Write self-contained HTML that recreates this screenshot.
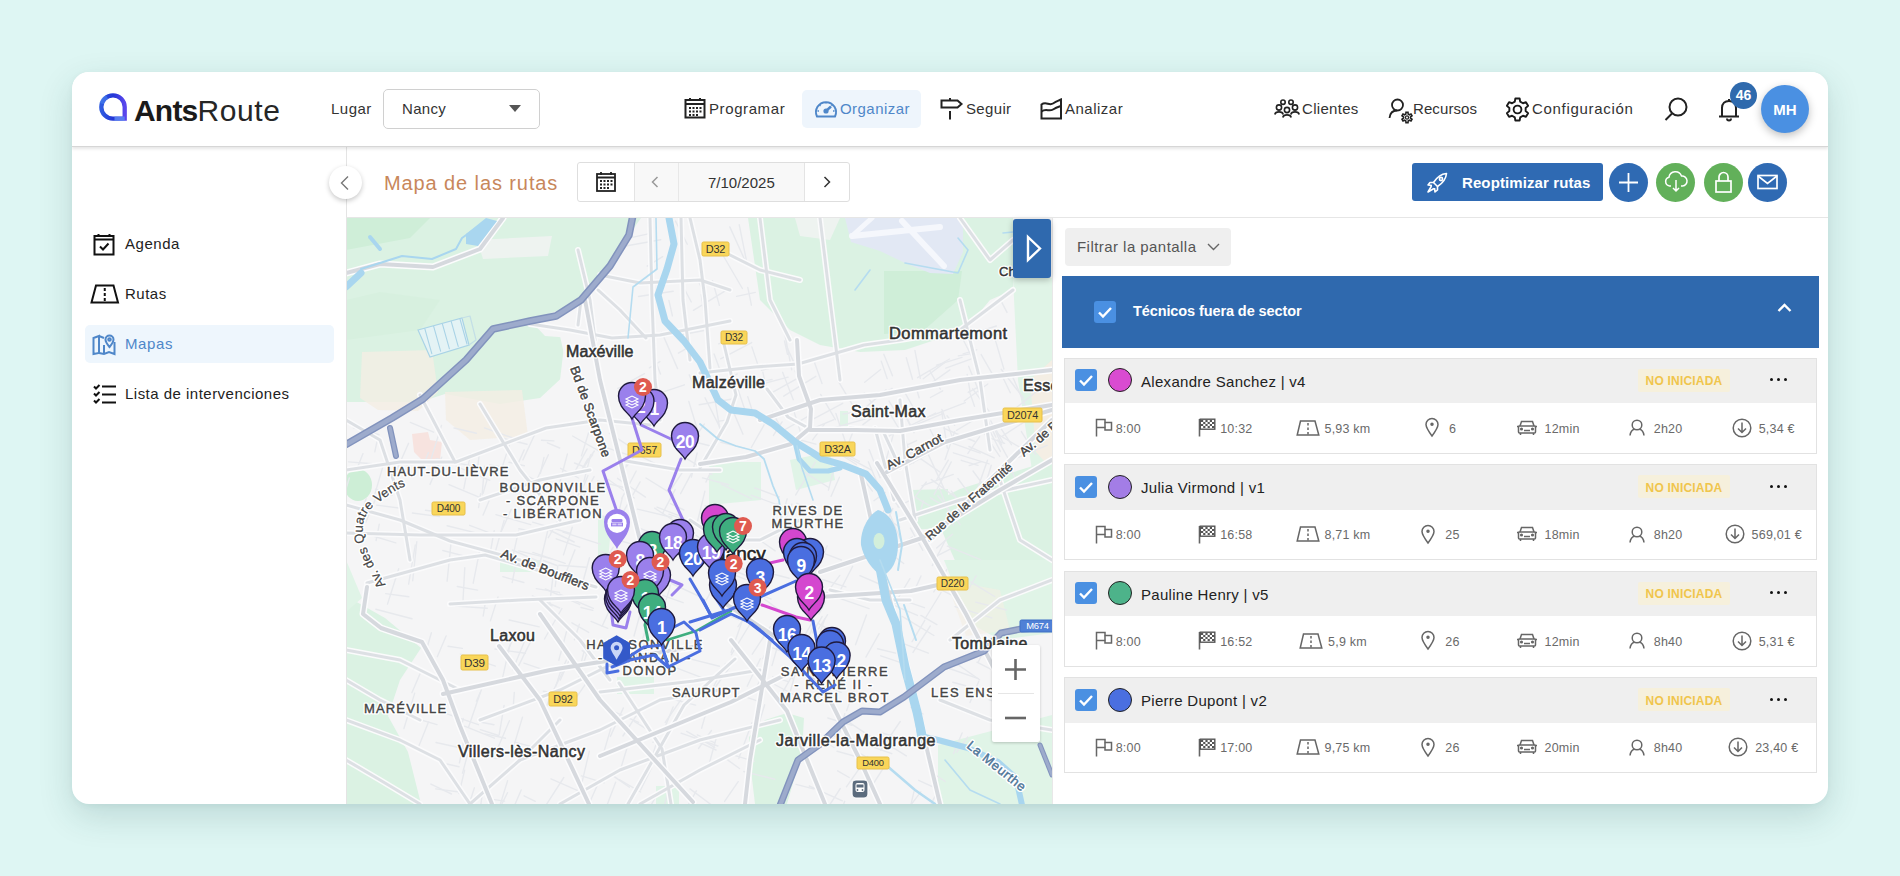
<!DOCTYPE html>
<html><head><meta charset="utf-8">
<style>
*{box-sizing:border-box;margin:0;padding:0}
html,body{width:1900px;height:876px;overflow:hidden}
body{background:#def6f3;font-family:"Liberation Sans",sans-serif;color:#222;position:relative}
.card{position:absolute;left:72px;top:72px;width:1756px;height:732px;background:#fff;border-radius:17px;box-shadow:0 12px 34px rgba(20,70,70,.16),0 2px 6px rgba(20,70,70,.05);overflow:hidden}
.pg{position:absolute;left:-72px;top:-72px;width:1900px;height:876px}
.a{position:absolute}
.t{position:absolute;white-space:nowrap;line-height:1}
svg{position:absolute;overflow:visible}
</style></head><body>
<div class="card"><div class="pg">
<!-- MAP -->
<svg style="left:346px;top:218px;overflow:hidden" width="706" height="586" viewBox="346 218 706 586" font-family="Liberation Sans">
<rect x="346" y="218" width="706" height="586" fill="#f5f5f6"/>
<polygon points="346.0,218.0 641.0,218.0 629.0,235.0 610.0,266.0 581.0,300.0 556.0,316.0 530.0,322.0 560.0,336.0 568.0,372.0 540.0,398.0 500.0,404.0 445.0,394.0 420.0,402.0 346.0,402.0" fill="#dbf2e3" />
<polygon points="346.0,218.0 430.0,218.0 410.0,238.0 346.0,250.0" fill="#cfeed8" />
<polygon points="346.0,300.0 380.0,292.0 440.0,300.0 420.0,330.0 346.0,340.0" fill="#d7f0df" />
<polygon points="530.0,320.0 578.0,304.0 572.0,338.0 545.0,336.0" fill="#f5f5f6" />
<polygon points="565.0,338.0 640.0,338.0 640.0,404.0 568.0,404.0 560.0,380.0" fill="#f5f5f6" />
<polygon points="477.0,240.0 552.0,236.0 548.0,256.0 483.0,259.0" fill="#eef3f0" />
<polygon points="362.0,352.0 432.0,350.0 438.0,392.0 418.0,411.0 378.0,410.0 360.0,398.0" fill="#f4eee4" opacity=".8"/>
<polygon points="445.0,392.0 522.0,390.0 528.0,436.0 470.0,440.0 446.0,420.0" fill="#f4eee4" opacity=".8"/>
<ellipse cx="358" cy="485" rx="14" ry="16" fill="#cdeed6"/>
<polygon points="412.0,434.0 428.0,432.0 430.0,440.0 442.0,442.0 440.0,460.0 424.0,462.0 414.0,452.0" fill="#f7e3df" />
<polygon points="748.0,218.0 1013.0,218.0 1013.0,290.0 990.0,300.0 965.0,330.0 905.0,350.0 860.0,352.0 820.0,345.0 790.0,330.0 760.0,300.0" fill="#dbf2e3" />
<polygon points="884.0,271.0 962.0,271.0 958.0,300.0 922.0,332.0 884.0,334.0" fill="#cfeed8" />
<polygon points="845.0,218.0 963.0,218.0 963.0,252.0 953.0,274.0 930.0,273.0 905.0,263.0 880.0,251.0 851.0,242.0" fill="#e2e8f4" />
<polyline points="852.0,236.0 940.0,227.0" fill="none" stroke="#f5f7fc" stroke-width="6" stroke-linejoin="round" stroke-linecap="round" />
<polyline points="902.0,221.0 944.0,266.0" fill="none" stroke="#f5f7fc" stroke-width="6" stroke-linejoin="round" stroke-linecap="round" />
<polyline points="872.0,218.0 852.0,236.0" fill="none" stroke="#f5f7fc" stroke-width="5" stroke-linejoin="round" stroke-linecap="round" />
<polygon points="795.0,218.0 840.0,218.0 830.0,240.0 800.0,236.0" fill="#eef3f0" />
<polygon points="1013.0,278.0 1052.0,278.0 1052.0,480.0 1032.0,470.0 1018.0,380.0" fill="#e0f4e7" />
<polygon points="1030.0,380.0 1052.0,360.0 1052.0,470.0 1036.0,452.0" fill="#f4eee4" />
<polygon points="930.0,504.0 960.0,489.0 1052.0,460.0 1052.0,600.0 1000.0,606.0 968.0,590.0" fill="#dbf2e3" />
<polygon points="911.0,490.0 948.0,489.0 948.0,527.0 915.0,530.0" fill="#dbf2e3" />
<polygon points="944.0,560.0 1052.0,560.0 1052.0,633.0 1000.0,640.0 968.0,622.0" fill="#e0f4e7" />
<polygon points="946.0,580.0 1000.0,590.0 1010.0,630.0 966.0,636.0" fill="#f4eee4" opacity=".6"/>
<polygon points="938.0,745.0 1052.0,715.0 1052.0,804.0 938.0,804.0" fill="#e0f4e7" />
<polygon points="346.0,596.0 385.0,618.0 421.0,648.0 400.0,680.0 388.0,716.0 408.0,752.0 421.0,804.0 346.0,804.0" fill="#dbf2e3" />
<polygon points="346.0,560.0 362.0,598.0 346.0,612.0" fill="#e0f4e7" />
<polygon points="709.0,462.0 761.0,462.0 761.0,500.0 709.0,505.0" fill="#e0f4e7" />
<polygon points="617.0,677.0 654.0,677.0 654.0,694.0 617.0,694.0" fill="#e0f4e7" />
<polygon points="749.0,737.0 765.0,720.0 787.0,713.0 804.0,718.0 802.0,752.0 787.0,804.0 755.0,804.0 750.0,762.0" fill="#dbf2e3" />
<polygon points="656.0,786.0 679.0,786.0 679.0,804.0 656.0,804.0" fill="#e0f4e7" />
<polygon points="598.0,515.0 612.0,518.0 608.0,560.0 598.0,560.0" fill="#e0f4e7" />
<polygon points="790.0,460.0 830.0,452.0 835.0,480.0 796.0,490.0" fill="#e0f4e7" />
<polygon points="840.0,411.0 848.0,411.0 848.0,426.0 840.0,426.0" fill="#e0f4e7" />
<polygon points="500.0,560.0 540.0,560.0 540.0,572.0 500.0,572.0" fill="#e0f4e7" />
<polyline points="702.5,477.9 728.6,484.8" fill="none" stroke="#e7e9ed" stroke-width="1.4" stroke-linejoin="round" stroke-linecap="round" />
<polyline points="720.9,442.3 744.3,448.1" fill="none" stroke="#e7e9ed" stroke-width="1.4" stroke-linejoin="round" stroke-linecap="round" />
<polyline points="590.7,454.8 583.8,481.8" fill="none" stroke="#e7e9ed" stroke-width="1.4" stroke-linejoin="round" stroke-linecap="round" />
<polyline points="976.9,662.2 997.5,672.6" fill="none" stroke="#e7e9ed" stroke-width="1.4" stroke-linejoin="round" stroke-linecap="round" />
<polyline points="989.6,437.9 1004.6,443.4" fill="none" stroke="#e7e9ed" stroke-width="1.4" stroke-linejoin="round" stroke-linecap="round" />
<polyline points="611.8,538.5 638.8,545.9" fill="none" stroke="#e7e9ed" stroke-width="1.4" stroke-linejoin="round" stroke-linecap="round" />
<polyline points="642.7,457.4 668.9,470.5" fill="none" stroke="#e7e9ed" stroke-width="1.4" stroke-linejoin="round" stroke-linecap="round" />
<polyline points="778.4,624.2 762.9,658.7" fill="none" stroke="#e7e9ed" stroke-width="1.4" stroke-linejoin="round" stroke-linecap="round" />
<polyline points="719.1,515.4 735.4,524.7" fill="none" stroke="#e7e9ed" stroke-width="1.4" stroke-linejoin="round" stroke-linecap="round" />
<polyline points="812.7,621.7 802.6,639.0" fill="none" stroke="#e7e9ed" stroke-width="1.4" stroke-linejoin="round" stroke-linecap="round" />
<polyline points="991.3,465.3 985.0,486.0" fill="none" stroke="#e7e9ed" stroke-width="1.4" stroke-linejoin="round" stroke-linecap="round" />
<polyline points="970.6,581.9 994.6,596.5" fill="none" stroke="#e7e9ed" stroke-width="1.4" stroke-linejoin="round" stroke-linecap="round" />
<polyline points="945.2,540.5 932.3,565.6" fill="none" stroke="#e7e9ed" stroke-width="1.4" stroke-linejoin="round" stroke-linecap="round" />
<polyline points="975.7,602.1 1006.3,610.0" fill="none" stroke="#e7e9ed" stroke-width="1.4" stroke-linejoin="round" stroke-linecap="round" />
<polyline points="844.7,801.3 837.0,822.8" fill="none" stroke="#e7e9ed" stroke-width="1.4" stroke-linejoin="round" stroke-linecap="round" />
<polyline points="854.2,428.7 843.5,455.7" fill="none" stroke="#e7e9ed" stroke-width="1.4" stroke-linejoin="round" stroke-linecap="round" />
<polyline points="777.2,503.8 772.0,522.0" fill="none" stroke="#e7e9ed" stroke-width="1.4" stroke-linejoin="round" stroke-linecap="round" />
<polyline points="732.0,754.6 754.2,761.4" fill="none" stroke="#e7e9ed" stroke-width="1.4" stroke-linejoin="round" stroke-linecap="round" />
<polyline points="682.2,472.6 671.3,489.0" fill="none" stroke="#e7e9ed" stroke-width="1.4" stroke-linejoin="round" stroke-linecap="round" />
<polyline points="742.7,557.8 733.2,570.9" fill="none" stroke="#e7e9ed" stroke-width="1.4" stroke-linejoin="round" stroke-linecap="round" />
<polyline points="637.5,509.1 671.9,517.2" fill="none" stroke="#e7e9ed" stroke-width="1.4" stroke-linejoin="round" stroke-linecap="round" />
<polyline points="640.2,528.3 660.8,537.0" fill="none" stroke="#e7e9ed" stroke-width="1.4" stroke-linejoin="round" stroke-linecap="round" />
<polyline points="809.2,786.0 842.4,800.8" fill="none" stroke="#e7e9ed" stroke-width="1.4" stroke-linejoin="round" stroke-linecap="round" />
<polyline points="978.8,681.3 970.0,702.6" fill="none" stroke="#e7e9ed" stroke-width="1.4" stroke-linejoin="round" stroke-linecap="round" />
<polyline points="771.9,573.8 789.1,578.3" fill="none" stroke="#e7e9ed" stroke-width="1.4" stroke-linejoin="round" stroke-linecap="round" />
<polyline points="631.4,550.6 658.3,558.0" fill="none" stroke="#e7e9ed" stroke-width="1.4" stroke-linejoin="round" stroke-linecap="round" />
<polyline points="796.1,784.4 813.4,788.9" fill="none" stroke="#e7e9ed" stroke-width="1.4" stroke-linejoin="round" stroke-linecap="round" />
<polyline points="725.5,663.6 713.9,686.0" fill="none" stroke="#e7e9ed" stroke-width="1.4" stroke-linejoin="round" stroke-linecap="round" />
<polyline points="610.8,607.4 602.1,626.3" fill="none" stroke="#e7e9ed" stroke-width="1.4" stroke-linejoin="round" stroke-linecap="round" />
<polyline points="623.4,707.9 610.4,736.4" fill="none" stroke="#e7e9ed" stroke-width="1.4" stroke-linejoin="round" stroke-linecap="round" />
<polyline points="787.2,498.8 779.5,524.9" fill="none" stroke="#e7e9ed" stroke-width="1.4" stroke-linejoin="round" stroke-linecap="round" />
<polyline points="571.9,622.8 588.7,632.4" fill="none" stroke="#e7e9ed" stroke-width="1.4" stroke-linejoin="round" stroke-linecap="round" />
<polyline points="721.3,484.1 751.8,498.9" fill="none" stroke="#e7e9ed" stroke-width="1.4" stroke-linejoin="round" stroke-linecap="round" />
<polyline points="705.1,505.6 734.5,524.3" fill="none" stroke="#e7e9ed" stroke-width="1.4" stroke-linejoin="round" stroke-linecap="round" />
<polyline points="885.5,507.1 880.8,519.0" fill="none" stroke="#e7e9ed" stroke-width="1.4" stroke-linejoin="round" stroke-linecap="round" />
<polyline points="572.3,527.3 563.5,554.9" fill="none" stroke="#e7e9ed" stroke-width="1.4" stroke-linejoin="round" stroke-linecap="round" />
<polyline points="711.5,730.5 698.5,748.5" fill="none" stroke="#e7e9ed" stroke-width="1.4" stroke-linejoin="round" stroke-linecap="round" />
<polyline points="657.0,507.1 680.8,516.3" fill="none" stroke="#e7e9ed" stroke-width="1.4" stroke-linejoin="round" stroke-linecap="round" />
<polyline points="993.5,654.3 1021.1,666.9" fill="none" stroke="#e7e9ed" stroke-width="1.4" stroke-linejoin="round" stroke-linecap="round" />
<polyline points="911.8,452.6 939.7,471.9" fill="none" stroke="#e7e9ed" stroke-width="1.4" stroke-linejoin="round" stroke-linecap="round" />
<polyline points="890.1,603.6 917.4,615.4" fill="none" stroke="#e7e9ed" stroke-width="1.4" stroke-linejoin="round" stroke-linecap="round" />
<polyline points="598.2,783.3 584.8,813.3" fill="none" stroke="#e7e9ed" stroke-width="1.4" stroke-linejoin="round" stroke-linecap="round" />
<polyline points="597.4,481.0 625.1,487.7" fill="none" stroke="#e7e9ed" stroke-width="1.4" stroke-linejoin="round" stroke-linecap="round" />
<polyline points="764.8,671.8 754.3,691.0" fill="none" stroke="#e7e9ed" stroke-width="1.4" stroke-linejoin="round" stroke-linecap="round" />
<polyline points="801.4,470.3 828.8,487.5" fill="none" stroke="#e7e9ed" stroke-width="1.4" stroke-linejoin="round" stroke-linecap="round" />
<polyline points="605.2,707.8 638.6,722.3" fill="none" stroke="#e7e9ed" stroke-width="1.4" stroke-linejoin="round" stroke-linecap="round" />
<polyline points="923.5,501.0 915.4,525.8" fill="none" stroke="#e7e9ed" stroke-width="1.4" stroke-linejoin="round" stroke-linecap="round" />
<polyline points="896.0,545.2 888.6,556.7" fill="none" stroke="#e7e9ed" stroke-width="1.4" stroke-linejoin="round" stroke-linecap="round" />
<polyline points="885.6,764.7 865.7,795.5" fill="none" stroke="#e7e9ed" stroke-width="1.4" stroke-linejoin="round" stroke-linecap="round" />
<polyline points="617.5,478.3 645.5,497.1" fill="none" stroke="#e7e9ed" stroke-width="1.4" stroke-linejoin="round" stroke-linecap="round" />
<polyline points="827.8,718.0 851.9,725.4" fill="none" stroke="#e7e9ed" stroke-width="1.4" stroke-linejoin="round" stroke-linecap="round" />
<polyline points="879.1,633.7 865.9,657.1" fill="none" stroke="#e7e9ed" stroke-width="1.4" stroke-linejoin="round" stroke-linecap="round" />
<polyline points="948.6,441.8 980.3,453.1" fill="none" stroke="#e7e9ed" stroke-width="1.4" stroke-linejoin="round" stroke-linecap="round" />
<polyline points="783.4,635.7 810.1,647.4" fill="none" stroke="#e7e9ed" stroke-width="1.4" stroke-linejoin="round" stroke-linecap="round" />
<polyline points="782.4,616.7 771.6,641.3" fill="none" stroke="#e7e9ed" stroke-width="1.4" stroke-linejoin="round" stroke-linecap="round" />
<polyline points="867.7,756.6 846.4,786.8" fill="none" stroke="#e7e9ed" stroke-width="1.4" stroke-linejoin="round" stroke-linecap="round" />
<polyline points="649.1,591.9 642.5,615.3" fill="none" stroke="#e7e9ed" stroke-width="1.4" stroke-linejoin="round" stroke-linecap="round" />
<polyline points="591.9,512.4 611.4,518.8" fill="none" stroke="#e7e9ed" stroke-width="1.4" stroke-linejoin="round" stroke-linecap="round" />
<polyline points="613.8,718.3 603.4,753.6" fill="none" stroke="#e7e9ed" stroke-width="1.4" stroke-linejoin="round" stroke-linecap="round" />
<polyline points="926.3,482.0 912.3,500.7" fill="none" stroke="#e7e9ed" stroke-width="1.4" stroke-linejoin="round" stroke-linecap="round" />
<polyline points="745.4,556.9 756.2,563.3" fill="none" stroke="#e7e9ed" stroke-width="1.4" stroke-linejoin="round" stroke-linecap="round" />
<polyline points="803.8,589.1 828.3,599.2" fill="none" stroke="#e7e9ed" stroke-width="1.4" stroke-linejoin="round" stroke-linecap="round" />
<polyline points="690.0,788.9 717.3,809.3" fill="none" stroke="#e7e9ed" stroke-width="1.4" stroke-linejoin="round" stroke-linecap="round" />
<polyline points="987.5,460.2 975.1,495.5" fill="none" stroke="#e7e9ed" stroke-width="1.4" stroke-linejoin="round" stroke-linecap="round" />
<polyline points="639.9,710.2 622.9,736.0" fill="none" stroke="#e7e9ed" stroke-width="1.4" stroke-linejoin="round" stroke-linecap="round" />
<polyline points="976.2,575.9 969.0,588.5" fill="none" stroke="#e7e9ed" stroke-width="1.4" stroke-linejoin="round" stroke-linecap="round" />
<polyline points="585.3,684.3 574.3,700.4" fill="none" stroke="#e7e9ed" stroke-width="1.4" stroke-linejoin="round" stroke-linecap="round" />
<polyline points="567.4,454.0 558.1,488.8" fill="none" stroke="#e7e9ed" stroke-width="1.4" stroke-linejoin="round" stroke-linecap="round" />
<polyline points="589.3,751.3 580.2,790.1" fill="none" stroke="#e7e9ed" stroke-width="1.4" stroke-linejoin="round" stroke-linecap="round" />
<polyline points="743.8,771.5 774.7,779.3" fill="none" stroke="#e7e9ed" stroke-width="1.4" stroke-linejoin="round" stroke-linecap="round" />
<polyline points="675.2,489.6 662.6,513.3" fill="none" stroke="#e7e9ed" stroke-width="1.4" stroke-linejoin="round" stroke-linecap="round" />
<polyline points="650.6,591.1 683.1,602.7" fill="none" stroke="#e7e9ed" stroke-width="1.4" stroke-linejoin="round" stroke-linecap="round" />
<polyline points="997.6,434.2 1021.2,448.1" fill="none" stroke="#e7e9ed" stroke-width="1.4" stroke-linejoin="round" stroke-linecap="round" />
<polyline points="643.4,602.3 634.0,636.0" fill="none" stroke="#e7e9ed" stroke-width="1.4" stroke-linejoin="round" stroke-linecap="round" />
<polyline points="750.2,610.1 738.0,626.7" fill="none" stroke="#e7e9ed" stroke-width="1.4" stroke-linejoin="round" stroke-linecap="round" />
<polyline points="654.7,508.2 681.3,525.5" fill="none" stroke="#e7e9ed" stroke-width="1.4" stroke-linejoin="round" stroke-linecap="round" />
<polyline points="839.8,575.4 818.7,603.9" fill="none" stroke="#e7e9ed" stroke-width="1.4" stroke-linejoin="round" stroke-linecap="round" />
<polyline points="566.3,660.2 560.9,672.6" fill="none" stroke="#e7e9ed" stroke-width="1.4" stroke-linejoin="round" stroke-linecap="round" />
<polyline points="852.7,566.3 838.3,594.1" fill="none" stroke="#e7e9ed" stroke-width="1.4" stroke-linejoin="round" stroke-linecap="round" />
<polyline points="579.9,491.2 572.1,508.9" fill="none" stroke="#e7e9ed" stroke-width="1.4" stroke-linejoin="round" stroke-linecap="round" />
<polyline points="800.7,513.9 795.4,530.1" fill="none" stroke="#e7e9ed" stroke-width="1.4" stroke-linejoin="round" stroke-linecap="round" />
<polyline points="707.5,452.2 700.1,468.2" fill="none" stroke="#e7e9ed" stroke-width="1.4" stroke-linejoin="round" stroke-linecap="round" />
<polyline points="782.1,421.9 773.4,435.4" fill="none" stroke="#e7e9ed" stroke-width="1.4" stroke-linejoin="round" stroke-linecap="round" />
<polyline points="818.2,571.3 811.8,588.7" fill="none" stroke="#e7e9ed" stroke-width="1.4" stroke-linejoin="round" stroke-linecap="round" />
<polyline points="817.7,623.2 845.7,638.6" fill="none" stroke="#e7e9ed" stroke-width="1.4" stroke-linejoin="round" stroke-linecap="round" />
<polyline points="946.8,569.6 933.8,591.9" fill="none" stroke="#e7e9ed" stroke-width="1.4" stroke-linejoin="round" stroke-linecap="round" />
<polyline points="685.0,657.6 719.4,666.2" fill="none" stroke="#e7e9ed" stroke-width="1.4" stroke-linejoin="round" stroke-linecap="round" />
<polyline points="952.5,660.9 979.6,679.8" fill="none" stroke="#e7e9ed" stroke-width="1.4" stroke-linejoin="round" stroke-linecap="round" />
<polyline points="810.1,732.2 834.0,747.5" fill="none" stroke="#e7e9ed" stroke-width="1.4" stroke-linejoin="round" stroke-linecap="round" />
<polyline points="952.8,682.2 965.6,685.7" fill="none" stroke="#e7e9ed" stroke-width="1.4" stroke-linejoin="round" stroke-linecap="round" />
<polyline points="840.3,788.5 825.3,811.6" fill="none" stroke="#e7e9ed" stroke-width="1.4" stroke-linejoin="round" stroke-linecap="round" />
<polyline points="836.2,660.5 847.2,665.5" fill="none" stroke="#e7e9ed" stroke-width="1.4" stroke-linejoin="round" stroke-linecap="round" />
<polyline points="911.0,707.3 923.1,714.0" fill="none" stroke="#e7e9ed" stroke-width="1.4" stroke-linejoin="round" stroke-linecap="round" />
<polyline points="884.2,516.8 899.7,527.0" fill="none" stroke="#e7e9ed" stroke-width="1.4" stroke-linejoin="round" stroke-linecap="round" />
<polyline points="892.8,508.6 883.3,529.2" fill="none" stroke="#e7e9ed" stroke-width="1.4" stroke-linejoin="round" stroke-linecap="round" />
<polyline points="770.8,682.5 797.3,696.5" fill="none" stroke="#e7e9ed" stroke-width="1.4" stroke-linejoin="round" stroke-linecap="round" />
<polyline points="594.1,476.6 579.0,504.2" fill="none" stroke="#e7e9ed" stroke-width="1.4" stroke-linejoin="round" stroke-linecap="round" />
<polyline points="833.3,471.2 828.4,490.1" fill="none" stroke="#e7e9ed" stroke-width="1.4" stroke-linejoin="round" stroke-linecap="round" />
<polyline points="855.7,685.8 846.6,710.7" fill="none" stroke="#e7e9ed" stroke-width="1.4" stroke-linejoin="round" stroke-linecap="round" />
<polyline points="764.5,599.1 786.4,615.5" fill="none" stroke="#e7e9ed" stroke-width="1.4" stroke-linejoin="round" stroke-linecap="round" />
<polyline points="697.1,453.0 691.4,477.1" fill="none" stroke="#e7e9ed" stroke-width="1.4" stroke-linejoin="round" stroke-linecap="round" />
<polyline points="920.8,791.8 907.1,810.0" fill="none" stroke="#e7e9ed" stroke-width="1.4" stroke-linejoin="round" stroke-linecap="round" />
<polyline points="592.8,454.7 583.6,467.4" fill="none" stroke="#e7e9ed" stroke-width="1.4" stroke-linejoin="round" stroke-linecap="round" />
<polyline points="920.9,615.4 936.9,624.6" fill="none" stroke="#e7e9ed" stroke-width="1.4" stroke-linejoin="round" stroke-linecap="round" />
<polyline points="955.0,606.7 991.9,617.8" fill="none" stroke="#e7e9ed" stroke-width="1.4" stroke-linejoin="round" stroke-linecap="round" />
<polyline points="859.9,575.7 880.6,584.5" fill="none" stroke="#e7e9ed" stroke-width="1.4" stroke-linejoin="round" stroke-linecap="round" />
<polyline points="613.2,547.2 594.9,577.6" fill="none" stroke="#e7e9ed" stroke-width="1.4" stroke-linejoin="round" stroke-linecap="round" />
<polyline points="612.8,775.7 629.4,787.2" fill="none" stroke="#e7e9ed" stroke-width="1.4" stroke-linejoin="round" stroke-linecap="round" />
<polyline points="723.8,570.9 746.1,579.7" fill="none" stroke="#e7e9ed" stroke-width="1.4" stroke-linejoin="round" stroke-linecap="round" />
<polyline points="681.1,438.5 710.7,446.0" fill="none" stroke="#e7e9ed" stroke-width="1.4" stroke-linejoin="round" stroke-linecap="round" />
<polyline points="839.4,477.2 831.1,496.3" fill="none" stroke="#e7e9ed" stroke-width="1.4" stroke-linejoin="round" stroke-linecap="round" />
<polyline points="900.2,721.5 880.7,750.2" fill="none" stroke="#e7e9ed" stroke-width="1.4" stroke-linejoin="round" stroke-linecap="round" />
<polyline points="837.6,770.8 849.2,777.5" fill="none" stroke="#e7e9ed" stroke-width="1.4" stroke-linejoin="round" stroke-linecap="round" />
<polyline points="882.2,593.1 899.8,602.7" fill="none" stroke="#e7e9ed" stroke-width="1.4" stroke-linejoin="round" stroke-linecap="round" />
<polyline points="581.5,775.9 604.1,782.8" fill="none" stroke="#e7e9ed" stroke-width="1.4" stroke-linejoin="round" stroke-linecap="round" />
<polyline points="684.0,518.2 676.7,535.4" fill="none" stroke="#e7e9ed" stroke-width="1.4" stroke-linejoin="round" stroke-linecap="round" />
<polyline points="772.6,676.8 788.4,681.7" fill="none" stroke="#e7e9ed" stroke-width="1.4" stroke-linejoin="round" stroke-linecap="round" />
<polyline points="651.5,767.9 640.6,790.0" fill="none" stroke="#e7e9ed" stroke-width="1.4" stroke-linejoin="round" stroke-linecap="round" />
<polyline points="706.4,711.6 701.6,728.2" fill="none" stroke="#e7e9ed" stroke-width="1.4" stroke-linejoin="round" stroke-linecap="round" />
<polyline points="599.9,551.3 620.8,559.2" fill="none" stroke="#e7e9ed" stroke-width="1.4" stroke-linejoin="round" stroke-linecap="round" />
<polyline points="916.1,497.6 936.3,509.8" fill="none" stroke="#e7e9ed" stroke-width="1.4" stroke-linejoin="round" stroke-linecap="round" />
<polyline points="742.1,621.3 731.1,652.4" fill="none" stroke="#e7e9ed" stroke-width="1.4" stroke-linejoin="round" stroke-linecap="round" />
<polyline points="779.2,640.5 772.0,665.6" fill="none" stroke="#e7e9ed" stroke-width="1.4" stroke-linejoin="round" stroke-linecap="round" />
<polyline points="837.0,751.3 872.8,761.1" fill="none" stroke="#e7e9ed" stroke-width="1.4" stroke-linejoin="round" stroke-linecap="round" />
<polyline points="729.2,668.0 708.2,697.0" fill="none" stroke="#e7e9ed" stroke-width="1.4" stroke-linejoin="round" stroke-linecap="round" />
<polyline points="944.1,428.4 974.8,441.5" fill="none" stroke="#e7e9ed" stroke-width="1.4" stroke-linejoin="round" stroke-linecap="round" />
<polyline points="913.9,791.8 908.7,814.2" fill="none" stroke="#e7e9ed" stroke-width="1.4" stroke-linejoin="round" stroke-linecap="round" />
<polyline points="967.8,737.0 956.6,752.3" fill="none" stroke="#e7e9ed" stroke-width="1.4" stroke-linejoin="round" stroke-linecap="round" />
<polyline points="608.0,479.3 634.2,498.0" fill="none" stroke="#e7e9ed" stroke-width="1.4" stroke-linejoin="round" stroke-linecap="round" />
<polyline points="844.8,713.7 836.1,746.3" fill="none" stroke="#e7e9ed" stroke-width="1.4" stroke-linejoin="round" stroke-linecap="round" />
<polyline points="560.6,468.3 578.6,478.0" fill="none" stroke="#e7e9ed" stroke-width="1.4" stroke-linejoin="round" stroke-linecap="round" />
<polyline points="616.3,516.7 608.8,529.8" fill="none" stroke="#e7e9ed" stroke-width="1.4" stroke-linejoin="round" stroke-linecap="round" />
<polyline points="591.0,621.4 607.8,628.3" fill="none" stroke="#e7e9ed" stroke-width="1.4" stroke-linejoin="round" stroke-linecap="round" />
<polyline points="824.5,424.0 812.6,439.8" fill="none" stroke="#e7e9ed" stroke-width="1.4" stroke-linejoin="round" stroke-linecap="round" />
<polyline points="699.2,742.3 716.1,750.0" fill="none" stroke="#e7e9ed" stroke-width="1.4" stroke-linejoin="round" stroke-linecap="round" />
<polyline points="668.7,788.9 664.4,805.8" fill="none" stroke="#e7e9ed" stroke-width="1.4" stroke-linejoin="round" stroke-linecap="round" />
<polyline points="949.3,668.5 978.3,678.6" fill="none" stroke="#e7e9ed" stroke-width="1.4" stroke-linejoin="round" stroke-linecap="round" />
<polyline points="575.0,549.8 566.5,571.3" fill="none" stroke="#e7e9ed" stroke-width="1.4" stroke-linejoin="round" stroke-linecap="round" />
<polyline points="563.0,532.2 600.2,544.2" fill="none" stroke="#e7e9ed" stroke-width="1.4" stroke-linejoin="round" stroke-linecap="round" />
<polyline points="697.2,734.9 714.9,742.8" fill="none" stroke="#e7e9ed" stroke-width="1.4" stroke-linejoin="round" stroke-linecap="round" />
<polyline points="951.3,461.9 934.1,494.7" fill="none" stroke="#e7e9ed" stroke-width="1.4" stroke-linejoin="round" stroke-linecap="round" />
<polyline points="584.8,648.4 581.7,660.7" fill="none" stroke="#e7e9ed" stroke-width="1.4" stroke-linejoin="round" stroke-linecap="round" />
<polyline points="822.3,579.5 845.8,586.9" fill="none" stroke="#e7e9ed" stroke-width="1.4" stroke-linejoin="round" stroke-linecap="round" />
<polyline points="873.3,540.7 903.7,563.5" fill="none" stroke="#e7e9ed" stroke-width="1.4" stroke-linejoin="round" stroke-linecap="round" />
<polyline points="704.9,491.2 697.6,521.0" fill="none" stroke="#e7e9ed" stroke-width="1.4" stroke-linejoin="round" stroke-linecap="round" />
<polyline points="726.6,563.6 720.6,577.4" fill="none" stroke="#e7e9ed" stroke-width="1.4" stroke-linejoin="round" stroke-linecap="round" />
<polyline points="594.4,451.0 585.4,463.5" fill="none" stroke="#e7e9ed" stroke-width="1.4" stroke-linejoin="round" stroke-linecap="round" />
<polyline points="716.9,735.5 708.6,766.1" fill="none" stroke="#e7e9ed" stroke-width="1.4" stroke-linejoin="round" stroke-linecap="round" />
<polyline points="646.1,627.9 639.4,649.1" fill="none" stroke="#e7e9ed" stroke-width="1.4" stroke-linejoin="round" stroke-linecap="round" />
<polyline points="954.7,431.6 945.1,459.5" fill="none" stroke="#e7e9ed" stroke-width="1.4" stroke-linejoin="round" stroke-linecap="round" />
<polyline points="738.1,564.2 728.6,600.8" fill="none" stroke="#e7e9ed" stroke-width="1.4" stroke-linejoin="round" stroke-linecap="round" />
<polyline points="673.1,707.0 665.2,726.8" fill="none" stroke="#e7e9ed" stroke-width="1.4" stroke-linejoin="round" stroke-linecap="round" />
<polyline points="979.7,436.7 967.9,453.4" fill="none" stroke="#e7e9ed" stroke-width="1.4" stroke-linejoin="round" stroke-linecap="round" />
<polyline points="877.5,648.7 895.5,653.1" fill="none" stroke="#e7e9ed" stroke-width="1.4" stroke-linejoin="round" stroke-linecap="round" />
<polyline points="670.5,585.1 663.2,610.0" fill="none" stroke="#e7e9ed" stroke-width="1.4" stroke-linejoin="round" stroke-linecap="round" />
<polyline points="563.8,777.5 545.6,805.8" fill="none" stroke="#e7e9ed" stroke-width="1.4" stroke-linejoin="round" stroke-linecap="round" />
<polyline points="827.2,545.9 813.4,576.9" fill="none" stroke="#e7e9ed" stroke-width="1.4" stroke-linejoin="round" stroke-linecap="round" />
<polyline points="822.1,616.6 812.3,632.8" fill="none" stroke="#e7e9ed" stroke-width="1.4" stroke-linejoin="round" stroke-linecap="round" />
<polyline points="588.5,433.0 581.5,455.9" fill="none" stroke="#e7e9ed" stroke-width="1.4" stroke-linejoin="round" stroke-linecap="round" />
<polyline points="606.3,447.7 628.9,455.1" fill="none" stroke="#e7e9ed" stroke-width="1.4" stroke-linejoin="round" stroke-linecap="round" />
<polyline points="636.2,471.0 621.8,498.3" fill="none" stroke="#e7e9ed" stroke-width="1.4" stroke-linejoin="round" stroke-linecap="round" />
<polyline points="889.1,745.2 906.3,755.9" fill="none" stroke="#e7e9ed" stroke-width="1.4" stroke-linejoin="round" stroke-linecap="round" />
<polyline points="682.9,522.8 674.0,537.9" fill="none" stroke="#e7e9ed" stroke-width="1.4" stroke-linejoin="round" stroke-linecap="round" />
<polyline points="668.9,514.2 704.1,526.9" fill="none" stroke="#e7e9ed" stroke-width="1.4" stroke-linejoin="round" stroke-linecap="round" />
<polyline points="642.8,444.9 627.1,465.9" fill="none" stroke="#e7e9ed" stroke-width="1.4" stroke-linejoin="round" stroke-linecap="round" />
<polyline points="661.8,730.4 652.9,742.3" fill="none" stroke="#e7e9ed" stroke-width="1.4" stroke-linejoin="round" stroke-linecap="round" />
<polyline points="929.8,771.1 945.2,781.5" fill="none" stroke="#e7e9ed" stroke-width="1.4" stroke-linejoin="round" stroke-linecap="round" />
<polyline points="582.2,650.6 600.5,663.6" fill="none" stroke="#e7e9ed" stroke-width="1.4" stroke-linejoin="round" stroke-linecap="round" />
<polyline points="941.1,592.5 925.1,618.5" fill="none" stroke="#e7e9ed" stroke-width="1.4" stroke-linejoin="round" stroke-linecap="round" />
<polyline points="562.8,664.8 555.8,686.0" fill="none" stroke="#e7e9ed" stroke-width="1.4" stroke-linejoin="round" stroke-linecap="round" />
<polyline points="622.2,498.3 614.4,529.9" fill="none" stroke="#e7e9ed" stroke-width="1.4" stroke-linejoin="round" stroke-linecap="round" />
<polyline points="962.1,732.9 953.5,753.5" fill="none" stroke="#e7e9ed" stroke-width="1.4" stroke-linejoin="round" stroke-linecap="round" />
<polyline points="833.2,449.9 856.4,464.5" fill="none" stroke="#e7e9ed" stroke-width="1.4" stroke-linejoin="round" stroke-linecap="round" />
<polyline points="587.8,458.9 579.9,473.2" fill="none" stroke="#e7e9ed" stroke-width="1.4" stroke-linejoin="round" stroke-linecap="round" />
<polyline points="795.0,670.8 783.3,691.2" fill="none" stroke="#e7e9ed" stroke-width="1.4" stroke-linejoin="round" stroke-linecap="round" />
<polyline points="684.7,538.1 710.8,547.9" fill="none" stroke="#e7e9ed" stroke-width="1.4" stroke-linejoin="round" stroke-linecap="round" />
<polyline points="717.2,579.9 706.2,600.1" fill="none" stroke="#e7e9ed" stroke-width="1.4" stroke-linejoin="round" stroke-linecap="round" />
<polyline points="738.2,781.7 724.6,801.4" fill="none" stroke="#e7e9ed" stroke-width="1.4" stroke-linejoin="round" stroke-linecap="round" />
<polyline points="921.0,576.0 914.2,591.1" fill="none" stroke="#e7e9ed" stroke-width="1.4" stroke-linejoin="round" stroke-linecap="round" />
<polyline points="566.5,631.8 558.8,660.2" fill="none" stroke="#e7e9ed" stroke-width="1.4" stroke-linejoin="round" stroke-linecap="round" />
<polyline points="723.2,613.7 738.6,619.7" fill="none" stroke="#e7e9ed" stroke-width="1.4" stroke-linejoin="round" stroke-linecap="round" />
<polyline points="635.6,445.8 621.1,477.1" fill="none" stroke="#e7e9ed" stroke-width="1.4" stroke-linejoin="round" stroke-linecap="round" />
<polyline points="615.7,782.1 605.5,809.3" fill="none" stroke="#e7e9ed" stroke-width="1.4" stroke-linejoin="round" stroke-linecap="round" />
<polyline points="840.0,453.1 871.7,470.2" fill="none" stroke="#e7e9ed" stroke-width="1.4" stroke-linejoin="round" stroke-linecap="round" />
<polyline points="833.3,656.1 847.6,665.4" fill="none" stroke="#e7e9ed" stroke-width="1.4" stroke-linejoin="round" stroke-linecap="round" />
<polyline points="656.0,573.5 670.3,579.3" fill="none" stroke="#e7e9ed" stroke-width="1.4" stroke-linejoin="round" stroke-linecap="round" />
<polyline points="668.7,698.4 695.6,705.1" fill="none" stroke="#e7e9ed" stroke-width="1.4" stroke-linejoin="round" stroke-linecap="round" />
<polyline points="893.3,434.6 885.4,462.3" fill="none" stroke="#e7e9ed" stroke-width="1.4" stroke-linejoin="round" stroke-linecap="round" />
<polyline points="802.0,660.8 792.2,678.9" fill="none" stroke="#e7e9ed" stroke-width="1.4" stroke-linejoin="round" stroke-linecap="round" />
<polyline points="669.7,569.5 659.9,591.7" fill="none" stroke="#e7e9ed" stroke-width="1.4" stroke-linejoin="round" stroke-linecap="round" />
<polyline points="570.3,657.7 560.3,680.0" fill="none" stroke="#e7e9ed" stroke-width="1.4" stroke-linejoin="round" stroke-linecap="round" />
<polyline points="832.2,734.5 851.8,746.9" fill="none" stroke="#e7e9ed" stroke-width="1.4" stroke-linejoin="round" stroke-linecap="round" />
<polyline points="589.5,557.7 583.1,581.2" fill="none" stroke="#e7e9ed" stroke-width="1.4" stroke-linejoin="round" stroke-linecap="round" />
<polyline points="784.5,435.7 815.9,444.1" fill="none" stroke="#e7e9ed" stroke-width="1.4" stroke-linejoin="round" stroke-linecap="round" />
<polyline points="902.2,616.4 933.9,635.5" fill="none" stroke="#e7e9ed" stroke-width="1.4" stroke-linejoin="round" stroke-linecap="round" />
<polyline points="847.2,721.1 880.4,743.2" fill="none" stroke="#e7e9ed" stroke-width="1.4" stroke-linejoin="round" stroke-linecap="round" />
<polyline points="882.1,733.0 917.5,743.2" fill="none" stroke="#e7e9ed" stroke-width="1.4" stroke-linejoin="round" stroke-linecap="round" />
<polyline points="686.7,731.4 714.7,747.3" fill="none" stroke="#e7e9ed" stroke-width="1.4" stroke-linejoin="round" stroke-linecap="round" />
<polyline points="657.3,739.9 646.6,775.4" fill="none" stroke="#e7e9ed" stroke-width="1.4" stroke-linejoin="round" stroke-linecap="round" />
<polyline points="681.0,733.2 717.9,746.0" fill="none" stroke="#e7e9ed" stroke-width="1.4" stroke-linejoin="round" stroke-linecap="round" />
<polyline points="771.2,647.3 783.4,651.9" fill="none" stroke="#e7e9ed" stroke-width="1.4" stroke-linejoin="round" stroke-linecap="round" />
<polyline points="640.1,481.9 622.0,514.2" fill="none" stroke="#e7e9ed" stroke-width="1.4" stroke-linejoin="round" stroke-linecap="round" />
<polyline points="634.2,721.4 645.6,728.4" fill="none" stroke="#e7e9ed" stroke-width="1.4" stroke-linejoin="round" stroke-linecap="round" />
<polyline points="937.6,791.0 925.1,816.3" fill="none" stroke="#e7e9ed" stroke-width="1.4" stroke-linejoin="round" stroke-linecap="round" />
<polyline points="948.3,460.2 936.9,479.4" fill="none" stroke="#e7e9ed" stroke-width="1.4" stroke-linejoin="round" stroke-linecap="round" />
<polyline points="725.3,561.7 756.4,574.0" fill="none" stroke="#e7e9ed" stroke-width="1.4" stroke-linejoin="round" stroke-linecap="round" />
<polyline points="754.6,487.9 779.4,497.0" fill="none" stroke="#e7e9ed" stroke-width="1.4" stroke-linejoin="round" stroke-linecap="round" />
<polyline points="696.4,790.9 679.7,819.3" fill="none" stroke="#e7e9ed" stroke-width="1.4" stroke-linejoin="round" stroke-linecap="round" />
<polyline points="657.5,531.7 648.8,552.2" fill="none" stroke="#e7e9ed" stroke-width="1.4" stroke-linejoin="round" stroke-linecap="round" />
<polyline points="581.0,607.5 592.8,610.4" fill="none" stroke="#e7e9ed" stroke-width="1.4" stroke-linejoin="round" stroke-linecap="round" />
<polyline points="716.2,460.8 705.9,482.1" fill="none" stroke="#e7e9ed" stroke-width="1.4" stroke-linejoin="round" stroke-linecap="round" />
<polyline points="692.5,471.4 680.6,493.7" fill="none" stroke="#e7e9ed" stroke-width="1.4" stroke-linejoin="round" stroke-linecap="round" />
<polyline points="619.3,779.7 640.6,792.0" fill="none" stroke="#e7e9ed" stroke-width="1.4" stroke-linejoin="round" stroke-linecap="round" />
<polyline points="588.0,475.6 580.5,493.5" fill="none" stroke="#e7e9ed" stroke-width="1.4" stroke-linejoin="round" stroke-linecap="round" />
<polyline points="565.1,667.7 552.1,692.7" fill="none" stroke="#e7e9ed" stroke-width="1.4" stroke-linejoin="round" stroke-linecap="round" />
<polyline points="824.8,618.8 812.7,654.0" fill="none" stroke="#e7e9ed" stroke-width="1.4" stroke-linejoin="round" stroke-linecap="round" />
<polyline points="579.4,624.1 574.4,639.8" fill="none" stroke="#e7e9ed" stroke-width="1.4" stroke-linejoin="round" stroke-linecap="round" />
<polyline points="961.2,460.3 978.0,465.3" fill="none" stroke="#e7e9ed" stroke-width="1.4" stroke-linejoin="round" stroke-linecap="round" />
<polyline points="827.6,614.7 818.5,628.9" fill="none" stroke="#e7e9ed" stroke-width="1.4" stroke-linejoin="round" stroke-linecap="round" />
<polyline points="696.1,535.3 722.0,554.7" fill="none" stroke="#e7e9ed" stroke-width="1.4" stroke-linejoin="round" stroke-linecap="round" />
<polyline points="770.3,626.7 752.3,654.2" fill="none" stroke="#e7e9ed" stroke-width="1.4" stroke-linejoin="round" stroke-linecap="round" />
<polyline points="764.7,704.8 752.9,743.0" fill="none" stroke="#e7e9ed" stroke-width="1.4" stroke-linejoin="round" stroke-linecap="round" />
<polyline points="675.0,667.3 705.8,679.2" fill="none" stroke="#e7e9ed" stroke-width="1.4" stroke-linejoin="round" stroke-linecap="round" />
<polyline points="865.8,744.6 891.8,753.7" fill="none" stroke="#e7e9ed" stroke-width="1.4" stroke-linejoin="round" stroke-linecap="round" />
<polyline points="751.9,722.8 738.8,758.5" fill="none" stroke="#e7e9ed" stroke-width="1.4" stroke-linejoin="round" stroke-linecap="round" />
<polyline points="953.4,452.8 989.1,463.8" fill="none" stroke="#e7e9ed" stroke-width="1.4" stroke-linejoin="round" stroke-linecap="round" />
<polyline points="930.4,497.9 948.5,508.7" fill="none" stroke="#e7e9ed" stroke-width="1.4" stroke-linejoin="round" stroke-linecap="round" />
<polyline points="947.3,546.2 980.5,559.7" fill="none" stroke="#e7e9ed" stroke-width="1.4" stroke-linejoin="round" stroke-linecap="round" />
<polyline points="930.3,626.0 913.0,652.4" fill="none" stroke="#e7e9ed" stroke-width="1.4" stroke-linejoin="round" stroke-linecap="round" />
<polyline points="937.3,587.9 955.7,597.1" fill="none" stroke="#e7e9ed" stroke-width="1.4" stroke-linejoin="round" stroke-linecap="round" />
<polyline points="653.3,659.1 668.3,666.6" fill="none" stroke="#e7e9ed" stroke-width="1.4" stroke-linejoin="round" stroke-linecap="round" />
<polyline points="574.5,463.0 589.4,468.8" fill="none" stroke="#e7e9ed" stroke-width="1.4" stroke-linejoin="round" stroke-linecap="round" />
<polyline points="572.6,436.0 601.0,452.2" fill="none" stroke="#e7e9ed" stroke-width="1.4" stroke-linejoin="round" stroke-linecap="round" />
<polyline points="588.9,646.7 577.1,683.6" fill="none" stroke="#e7e9ed" stroke-width="1.4" stroke-linejoin="round" stroke-linecap="round" />
<polyline points="794.9,675.0 790.1,692.1" fill="none" stroke="#e7e9ed" stroke-width="1.4" stroke-linejoin="round" stroke-linecap="round" />
<polyline points="609.3,433.2 634.2,449.3" fill="none" stroke="#e7e9ed" stroke-width="1.4" stroke-linejoin="round" stroke-linecap="round" />
<polyline points="686.4,458.4 712.0,474.3" fill="none" stroke="#e7e9ed" stroke-width="1.4" stroke-linejoin="round" stroke-linecap="round" />
<polyline points="689.6,549.2 685.1,567.9" fill="none" stroke="#e7e9ed" stroke-width="1.4" stroke-linejoin="round" stroke-linecap="round" />
<polyline points="684.3,694.9 665.2,722.4" fill="none" stroke="#e7e9ed" stroke-width="1.4" stroke-linejoin="round" stroke-linecap="round" />
<polyline points="824.9,602.8 818.9,614.2" fill="none" stroke="#e7e9ed" stroke-width="1.4" stroke-linejoin="round" stroke-linecap="round" />
<polyline points="741.7,587.6 771.2,599.1" fill="none" stroke="#e7e9ed" stroke-width="1.4" stroke-linejoin="round" stroke-linecap="round" />
<polyline points="796.7,503.2 814.6,512.2" fill="none" stroke="#e7e9ed" stroke-width="1.4" stroke-linejoin="round" stroke-linecap="round" />
<polyline points="751.9,621.0 731.4,654.7" fill="none" stroke="#e7e9ed" stroke-width="1.4" stroke-linejoin="round" stroke-linecap="round" />
<polyline points="561.9,608.5 544.5,639.0" fill="none" stroke="#e7e9ed" stroke-width="1.4" stroke-linejoin="round" stroke-linecap="round" />
<polyline points="985.5,647.5 978.1,662.2" fill="none" stroke="#e7e9ed" stroke-width="1.4" stroke-linejoin="round" stroke-linecap="round" />
<polyline points="918.7,780.3 932.4,786.7" fill="none" stroke="#e7e9ed" stroke-width="1.4" stroke-linejoin="round" stroke-linecap="round" />
<polyline points="840.1,451.1 859.4,461.4" fill="none" stroke="#e7e9ed" stroke-width="1.4" stroke-linejoin="round" stroke-linecap="round" />
<polyline points="736.6,571.5 764.2,583.3" fill="none" stroke="#e7e9ed" stroke-width="1.4" stroke-linejoin="round" stroke-linecap="round" />
<polyline points="723.7,536.4 708.9,557.8" fill="none" stroke="#e7e9ed" stroke-width="1.4" stroke-linejoin="round" stroke-linecap="round" />
<polyline points="726.9,759.4 739.5,768.5" fill="none" stroke="#e7e9ed" stroke-width="1.4" stroke-linejoin="round" stroke-linecap="round" />
<polyline points="821.4,684.7 841.1,692.4" fill="none" stroke="#e7e9ed" stroke-width="1.4" stroke-linejoin="round" stroke-linecap="round" />
<polyline points="628.3,743.8 621.2,767.0" fill="none" stroke="#e7e9ed" stroke-width="1.4" stroke-linejoin="round" stroke-linecap="round" />
<polyline points="900.3,642.4 928.3,653.2" fill="none" stroke="#e7e9ed" stroke-width="1.4" stroke-linejoin="round" stroke-linecap="round" />
<polyline points="866.5,615.0 855.5,644.7" fill="none" stroke="#e7e9ed" stroke-width="1.4" stroke-linejoin="round" stroke-linecap="round" />
<polyline points="931.2,479.4 957.2,498.5" fill="none" stroke="#e7e9ed" stroke-width="1.4" stroke-linejoin="round" stroke-linecap="round" />
<polyline points="825.3,553.9 841.4,560.0" fill="none" stroke="#e7e9ed" stroke-width="1.4" stroke-linejoin="round" stroke-linecap="round" />
<polyline points="989.1,699.8 1018.2,708.7" fill="none" stroke="#e7e9ed" stroke-width="1.4" stroke-linejoin="round" stroke-linecap="round" />
<polyline points="646.0,478.0 673.6,495.2" fill="none" stroke="#e7e9ed" stroke-width="1.4" stroke-linejoin="round" stroke-linecap="round" />
<polyline points="751.4,495.3 786.0,507.8" fill="none" stroke="#e7e9ed" stroke-width="1.4" stroke-linejoin="round" stroke-linecap="round" />
<polyline points="764.1,424.8 751.3,447.5" fill="none" stroke="#e7e9ed" stroke-width="1.4" stroke-linejoin="round" stroke-linecap="round" />
<polyline points="838.2,597.9 869.1,608.6" fill="none" stroke="#e7e9ed" stroke-width="1.4" stroke-linejoin="round" stroke-linecap="round" />
<polyline points="562.4,513.0 548.3,537.7" fill="none" stroke="#e7e9ed" stroke-width="1.4" stroke-linejoin="round" stroke-linecap="round" />
<polyline points="844.8,744.9 870.9,759.5" fill="none" stroke="#e7e9ed" stroke-width="1.4" stroke-linejoin="round" stroke-linecap="round" />
<polyline points="759.7,540.2 775.2,550.8" fill="none" stroke="#e7e9ed" stroke-width="1.4" stroke-linejoin="round" stroke-linecap="round" />
<polyline points="736.1,693.7 758.6,701.4" fill="none" stroke="#e7e9ed" stroke-width="1.4" stroke-linejoin="round" stroke-linecap="round" />
<polyline points="760.3,658.7 747.2,686.2" fill="none" stroke="#e7e9ed" stroke-width="1.4" stroke-linejoin="round" stroke-linecap="round" />
<polyline points="704.3,424.1 695.8,436.4" fill="none" stroke="#e7e9ed" stroke-width="1.4" stroke-linejoin="round" stroke-linecap="round" />
<polyline points="670.5,503.7 683.9,510.0" fill="none" stroke="#e7e9ed" stroke-width="1.4" stroke-linejoin="round" stroke-linecap="round" />
<polyline points="812.8,627.8 800.0,654.8" fill="none" stroke="#e7e9ed" stroke-width="1.4" stroke-linejoin="round" stroke-linecap="round" />
<polyline points="924.8,620.3 912.1,641.6" fill="none" stroke="#e7e9ed" stroke-width="1.4" stroke-linejoin="round" stroke-linecap="round" />
<polyline points="880.8,655.8 902.3,663.2" fill="none" stroke="#e7e9ed" stroke-width="1.4" stroke-linejoin="round" stroke-linecap="round" />
<polyline points="587.1,448.9 572.5,476.1" fill="none" stroke="#e7e9ed" stroke-width="1.4" stroke-linejoin="round" stroke-linecap="round" />
<polyline points="815.3,462.0 795.7,494.9" fill="none" stroke="#e7e9ed" stroke-width="1.4" stroke-linejoin="round" stroke-linecap="round" />
<polyline points="791.9,504.1 785.1,519.2" fill="none" stroke="#e7e9ed" stroke-width="1.4" stroke-linejoin="round" stroke-linecap="round" />
<polyline points="968.9,446.5 994.2,457.9" fill="none" stroke="#e7e9ed" stroke-width="1.4" stroke-linejoin="round" stroke-linecap="round" />
<polyline points="659.4,790.1 642.3,821.0" fill="none" stroke="#e7e9ed" stroke-width="1.4" stroke-linejoin="round" stroke-linecap="round" />
<polyline points="909.9,578.7 894.3,604.5" fill="none" stroke="#e7e9ed" stroke-width="1.4" stroke-linejoin="round" stroke-linecap="round" />
<polyline points="903.1,600.3 924.4,607.7" fill="none" stroke="#e7e9ed" stroke-width="1.4" stroke-linejoin="round" stroke-linecap="round" />
<polyline points="671.6,583.6 703.0,598.0" fill="none" stroke="#e7e9ed" stroke-width="1.4" stroke-linejoin="round" stroke-linecap="round" />
<polyline points="517.0,557.5 512.2,582.6" fill="none" stroke="#e7e9ed" stroke-width="1.4" stroke-linejoin="round" stroke-linecap="round" />
<polyline points="479.4,452.8 477.0,473.2" fill="none" stroke="#e7e9ed" stroke-width="1.4" stroke-linejoin="round" stroke-linecap="round" />
<polyline points="428.4,452.7 422.5,467.5" fill="none" stroke="#e7e9ed" stroke-width="1.4" stroke-linejoin="round" stroke-linecap="round" />
<polyline points="523.9,663.1 540.8,668.9" fill="none" stroke="#e7e9ed" stroke-width="1.4" stroke-linejoin="round" stroke-linecap="round" />
<polyline points="361.4,532.5 395.8,542.9" fill="none" stroke="#e7e9ed" stroke-width="1.4" stroke-linejoin="round" stroke-linecap="round" />
<polyline points="385.7,593.6 408.8,596.8" fill="none" stroke="#e7e9ed" stroke-width="1.4" stroke-linejoin="round" stroke-linecap="round" />
<polyline points="460.4,654.1 495.4,666.1" fill="none" stroke="#e7e9ed" stroke-width="1.4" stroke-linejoin="round" stroke-linecap="round" />
<polyline points="514.6,742.1 532.0,746.7" fill="none" stroke="#e7e9ed" stroke-width="1.4" stroke-linejoin="round" stroke-linecap="round" />
<polyline points="489.6,464.9 508.0,467.9" fill="none" stroke="#e7e9ed" stroke-width="1.4" stroke-linejoin="round" stroke-linecap="round" />
<polyline points="375.8,609.3 412.0,618.8" fill="none" stroke="#e7e9ed" stroke-width="1.4" stroke-linejoin="round" stroke-linecap="round" />
<polyline points="495.9,514.7 530.7,524.6" fill="none" stroke="#e7e9ed" stroke-width="1.4" stroke-linejoin="round" stroke-linecap="round" />
<polyline points="446.1,636.0 437.3,656.7" fill="none" stroke="#e7e9ed" stroke-width="1.4" stroke-linejoin="round" stroke-linecap="round" />
<polyline points="435.6,788.9 457.5,791.7" fill="none" stroke="#e7e9ed" stroke-width="1.4" stroke-linejoin="round" stroke-linecap="round" />
<polyline points="484.4,427.9 520.3,440.5" fill="none" stroke="#e7e9ed" stroke-width="1.4" stroke-linejoin="round" stroke-linecap="round" />
<polyline points="455.3,606.1 487.3,608.3" fill="none" stroke="#e7e9ed" stroke-width="1.4" stroke-linejoin="round" stroke-linecap="round" />
<polyline points="479.8,550.0 473.2,583.2" fill="none" stroke="#e7e9ed" stroke-width="1.4" stroke-linejoin="round" stroke-linecap="round" />
<polyline points="464.6,770.3 459.0,793.5" fill="none" stroke="#e7e9ed" stroke-width="1.4" stroke-linejoin="round" stroke-linecap="round" />
<polyline points="464.6,737.5 459.4,762.8" fill="none" stroke="#e7e9ed" stroke-width="1.4" stroke-linejoin="round" stroke-linecap="round" />
<polyline points="532.8,552.4 565.2,563.4" fill="none" stroke="#e7e9ed" stroke-width="1.4" stroke-linejoin="round" stroke-linecap="round" />
<polyline points="416.8,541.8 412.7,580.8" fill="none" stroke="#e7e9ed" stroke-width="1.4" stroke-linejoin="round" stroke-linecap="round" />
<polyline points="431.4,632.8 427.6,645.7" fill="none" stroke="#e7e9ed" stroke-width="1.4" stroke-linejoin="round" stroke-linecap="round" />
<polyline points="410.3,422.4 433.6,432.2" fill="none" stroke="#e7e9ed" stroke-width="1.4" stroke-linejoin="round" stroke-linecap="round" />
<polyline points="509.9,443.1 500.9,471.2" fill="none" stroke="#e7e9ed" stroke-width="1.4" stroke-linejoin="round" stroke-linecap="round" />
<polyline points="495.0,649.0 525.4,653.3" fill="none" stroke="#e7e9ed" stroke-width="1.4" stroke-linejoin="round" stroke-linecap="round" />
<polyline points="444.0,712.9 478.4,724.7" fill="none" stroke="#e7e9ed" stroke-width="1.4" stroke-linejoin="round" stroke-linecap="round" />
<polyline points="436.2,458.6 470.5,465.8" fill="none" stroke="#e7e9ed" stroke-width="1.4" stroke-linejoin="round" stroke-linecap="round" />
<polyline points="514.3,635.8 507.4,651.6" fill="none" stroke="#e7e9ed" stroke-width="1.4" stroke-linejoin="round" stroke-linecap="round" />
<polyline points="353.3,427.8 379.0,434.7" fill="none" stroke="#e7e9ed" stroke-width="1.4" stroke-linejoin="round" stroke-linecap="round" />
<polyline points="522.5,717.1 511.6,753.2" fill="none" stroke="#e7e9ed" stroke-width="1.4" stroke-linejoin="round" stroke-linecap="round" />
<polyline points="441.5,425.4 429.7,463.4" fill="none" stroke="#e7e9ed" stroke-width="1.4" stroke-linejoin="round" stroke-linecap="round" />
<polyline points="487.1,479.6 483.1,493.4" fill="none" stroke="#e7e9ed" stroke-width="1.4" stroke-linejoin="round" stroke-linecap="round" />
<polyline points="447.0,764.0 459.0,766.8" fill="none" stroke="#e7e9ed" stroke-width="1.4" stroke-linejoin="round" stroke-linecap="round" />
<polyline points="489.2,798.9 504.5,801.1" fill="none" stroke="#e7e9ed" stroke-width="1.4" stroke-linejoin="round" stroke-linecap="round" />
<polyline points="447.1,525.8 479.0,533.6" fill="none" stroke="#e7e9ed" stroke-width="1.4" stroke-linejoin="round" stroke-linecap="round" />
<polyline points="543.5,560.5 556.9,565.5" fill="none" stroke="#e7e9ed" stroke-width="1.4" stroke-linejoin="round" stroke-linecap="round" />
<polyline points="480.5,692.3 468.5,727.2" fill="none" stroke="#e7e9ed" stroke-width="1.4" stroke-linejoin="round" stroke-linecap="round" />
<polyline points="541.5,440.2 553.9,440.9" fill="none" stroke="#e7e9ed" stroke-width="1.4" stroke-linejoin="round" stroke-linecap="round" />
<polyline points="485.2,733.9 505.5,738.3" fill="none" stroke="#e7e9ed" stroke-width="1.4" stroke-linejoin="round" stroke-linecap="round" />
<polyline points="474.4,787.8 468.1,807.6" fill="none" stroke="#e7e9ed" stroke-width="1.4" stroke-linejoin="round" stroke-linecap="round" />
<polyline points="549.0,699.5 543.7,714.6" fill="none" stroke="#e7e9ed" stroke-width="1.4" stroke-linejoin="round" stroke-linecap="round" />
<polyline points="516.6,559.5 539.2,566.9" fill="none" stroke="#e7e9ed" stroke-width="1.4" stroke-linejoin="round" stroke-linecap="round" />
<polyline points="428.5,721.9 418.2,747.8" fill="none" stroke="#e7e9ed" stroke-width="1.4" stroke-linejoin="round" stroke-linecap="round" />
<polyline points="408.6,443.3 395.5,472.8" fill="none" stroke="#e7e9ed" stroke-width="1.4" stroke-linejoin="round" stroke-linecap="round" />
<polyline points="349.3,478.0 337.8,515.6" fill="none" stroke="#e7e9ed" stroke-width="1.4" stroke-linejoin="round" stroke-linecap="round" />
<polyline points="398.7,568.7 387.5,604.1" fill="none" stroke="#e7e9ed" stroke-width="1.4" stroke-linejoin="round" stroke-linecap="round" />
<polyline points="518.8,528.8 538.0,532.4" fill="none" stroke="#e7e9ed" stroke-width="1.4" stroke-linejoin="round" stroke-linecap="round" />
<polyline points="509.4,720.7 495.8,752.7" fill="none" stroke="#e7e9ed" stroke-width="1.4" stroke-linejoin="round" stroke-linecap="round" />
<polyline points="531.6,639.6 516.3,670.4" fill="none" stroke="#e7e9ed" stroke-width="1.4" stroke-linejoin="round" stroke-linecap="round" />
<polyline points="463.2,718.4 460.4,732.5" fill="none" stroke="#e7e9ed" stroke-width="1.4" stroke-linejoin="round" stroke-linecap="round" />
<polyline points="464.5,726.2 494.4,738.2" fill="none" stroke="#e7e9ed" stroke-width="1.4" stroke-linejoin="round" stroke-linecap="round" />
<polyline points="556.2,538.8 579.8,547.1" fill="none" stroke="#e7e9ed" stroke-width="1.4" stroke-linejoin="round" stroke-linecap="round" />
<polyline points="390.2,517.8 413.3,527.1" fill="none" stroke="#e7e9ed" stroke-width="1.4" stroke-linejoin="round" stroke-linecap="round" />
<polyline points="511.2,509.4 500.3,533.7" fill="none" stroke="#e7e9ed" stroke-width="1.4" stroke-linejoin="round" stroke-linecap="round" />
<polyline points="448.0,646.3 462.4,648.4" fill="none" stroke="#e7e9ed" stroke-width="1.4" stroke-linejoin="round" stroke-linecap="round" />
<polyline points="518.5,531.3 512.7,557.1" fill="none" stroke="#e7e9ed" stroke-width="1.4" stroke-linejoin="round" stroke-linecap="round" />
<polyline points="377.9,437.1 374.8,451.8" fill="none" stroke="#e7e9ed" stroke-width="1.4" stroke-linejoin="round" stroke-linecap="round" />
<polyline points="481.4,722.3 494.0,724.7" fill="none" stroke="#e7e9ed" stroke-width="1.4" stroke-linejoin="round" stroke-linecap="round" />
<polyline points="366.1,498.6 360.9,515.8" fill="none" stroke="#e7e9ed" stroke-width="1.4" stroke-linejoin="round" stroke-linecap="round" />
<polyline points="544.1,527.5 574.2,542.0" fill="none" stroke="#e7e9ed" stroke-width="1.4" stroke-linejoin="round" stroke-linecap="round" />
<polyline points="521.2,790.0 512.7,809.7" fill="none" stroke="#e7e9ed" stroke-width="1.4" stroke-linejoin="round" stroke-linecap="round" />
<polyline points="558.8,565.2 586.4,567.3" fill="none" stroke="#e7e9ed" stroke-width="1.4" stroke-linejoin="round" stroke-linecap="round" />
<polyline points="532.3,596.0 559.7,608.0" fill="none" stroke="#e7e9ed" stroke-width="1.4" stroke-linejoin="round" stroke-linecap="round" />
<polyline points="543.3,691.2 570.8,695.7" fill="none" stroke="#e7e9ed" stroke-width="1.4" stroke-linejoin="round" stroke-linecap="round" />
<polyline points="483.1,787.3 478.5,822.8" fill="none" stroke="#e7e9ed" stroke-width="1.4" stroke-linejoin="round" stroke-linecap="round" />
<polyline points="425.4,510.3 463.4,515.1" fill="none" stroke="#e7e9ed" stroke-width="1.4" stroke-linejoin="round" stroke-linecap="round" />
<polyline points="547.4,442.8 559.7,448.0" fill="none" stroke="#e7e9ed" stroke-width="1.4" stroke-linejoin="round" stroke-linecap="round" />
<polyline points="514.3,692.5 513.1,708.5" fill="none" stroke="#e7e9ed" stroke-width="1.4" stroke-linejoin="round" stroke-linecap="round" />
<polyline points="507.6,780.7 500.4,804.0" fill="none" stroke="#e7e9ed" stroke-width="1.4" stroke-linejoin="round" stroke-linecap="round" />
<polyline points="485.6,600.8 483.2,616.0" fill="none" stroke="#e7e9ed" stroke-width="1.4" stroke-linejoin="round" stroke-linecap="round" />
<polyline points="449.0,484.7 483.8,499.1" fill="none" stroke="#e7e9ed" stroke-width="1.4" stroke-linejoin="round" stroke-linecap="round" />
<polyline points="536.9,599.7 552.1,605.9" fill="none" stroke="#e7e9ed" stroke-width="1.4" stroke-linejoin="round" stroke-linecap="round" />
<polyline points="524.2,449.9 517.7,464.4" fill="none" stroke="#e7e9ed" stroke-width="1.4" stroke-linejoin="round" stroke-linecap="round" />
<polyline points="441.7,457.2 430.0,484.4" fill="none" stroke="#e7e9ed" stroke-width="1.4" stroke-linejoin="round" stroke-linecap="round" />
<polyline points="442.8,550.5 471.5,557.9" fill="none" stroke="#e7e9ed" stroke-width="1.4" stroke-linejoin="round" stroke-linecap="round" />
<polyline points="376.6,505.1 401.0,508.3" fill="none" stroke="#e7e9ed" stroke-width="1.4" stroke-linejoin="round" stroke-linecap="round" />
<polyline points="536.3,588.6 559.5,592.4" fill="none" stroke="#e7e9ed" stroke-width="1.4" stroke-linejoin="round" stroke-linecap="round" />
<polyline points="379.3,524.1 376.1,540.5" fill="none" stroke="#e7e9ed" stroke-width="1.4" stroke-linejoin="round" stroke-linecap="round" />
<polyline points="451.1,542.1 447.1,581.3" fill="none" stroke="#e7e9ed" stroke-width="1.4" stroke-linejoin="round" stroke-linecap="round" />
<polyline points="489.0,501.1 483.0,515.2" fill="none" stroke="#e7e9ed" stroke-width="1.4" stroke-linejoin="round" stroke-linecap="round" />
<polyline points="507.5,792.7 489.5,828.4" fill="none" stroke="#e7e9ed" stroke-width="1.4" stroke-linejoin="round" stroke-linecap="round" />
<polyline points="544.0,457.5 540.3,473.6" fill="none" stroke="#e7e9ed" stroke-width="1.4" stroke-linejoin="round" stroke-linecap="round" />
<polyline points="524.1,795.8 535.3,801.3" fill="none" stroke="#e7e9ed" stroke-width="1.4" stroke-linejoin="round" stroke-linecap="round" />
<polyline points="518.7,550.9 551.8,558.9" fill="none" stroke="#e7e9ed" stroke-width="1.4" stroke-linejoin="round" stroke-linecap="round" />
<polyline points="547.9,530.0 539.2,566.5" fill="none" stroke="#e7e9ed" stroke-width="1.4" stroke-linejoin="round" stroke-linecap="round" />
<polyline points="375.5,489.2 392.0,495.2" fill="none" stroke="#e7e9ed" stroke-width="1.4" stroke-linejoin="round" stroke-linecap="round" />
<polyline points="363.0,453.6 356.8,469.3" fill="none" stroke="#e7e9ed" stroke-width="1.4" stroke-linejoin="round" stroke-linecap="round" />
<polyline points="480.5,493.8 478.6,507.5" fill="none" stroke="#e7e9ed" stroke-width="1.4" stroke-linejoin="round" stroke-linecap="round" />
<polyline points="502.8,576.7 523.8,582.5" fill="none" stroke="#e7e9ed" stroke-width="1.4" stroke-linejoin="round" stroke-linecap="round" />
<polyline points="548.4,454.7 537.7,477.7" fill="none" stroke="#e7e9ed" stroke-width="1.4" stroke-linejoin="round" stroke-linecap="round" />
<polyline points="532.6,522.2 570.6,533.5" fill="none" stroke="#e7e9ed" stroke-width="1.4" stroke-linejoin="round" stroke-linecap="round" />
<polyline points="469.0,749.5 462.5,773.1" fill="none" stroke="#e7e9ed" stroke-width="1.4" stroke-linejoin="round" stroke-linecap="round" />
<polyline points="456.3,466.4 489.8,480.3" fill="none" stroke="#e7e9ed" stroke-width="1.4" stroke-linejoin="round" stroke-linecap="round" />
<polyline points="414.7,693.1 403.9,728.6" fill="none" stroke="#e7e9ed" stroke-width="1.4" stroke-linejoin="round" stroke-linecap="round" />
<polyline points="408.4,461.4 405.4,473.7" fill="none" stroke="#e7e9ed" stroke-width="1.4" stroke-linejoin="round" stroke-linecap="round" />
<polyline points="518.2,471.6 534.5,479.7" fill="none" stroke="#e7e9ed" stroke-width="1.4" stroke-linejoin="round" stroke-linecap="round" />
<polyline points="385.0,459.4 374.1,496.6" fill="none" stroke="#e7e9ed" stroke-width="1.4" stroke-linejoin="round" stroke-linecap="round" />
<polyline points="504.1,520.4 495.6,550.9" fill="none" stroke="#e7e9ed" stroke-width="1.4" stroke-linejoin="round" stroke-linecap="round" />
<polyline points="499.5,437.3 527.0,444.3" fill="none" stroke="#e7e9ed" stroke-width="1.4" stroke-linejoin="round" stroke-linecap="round" />
<polyline points="509.0,462.3 524.4,465.7" fill="none" stroke="#e7e9ed" stroke-width="1.4" stroke-linejoin="round" stroke-linecap="round" />
<polyline points="472.6,750.7 496.2,758.8" fill="none" stroke="#e7e9ed" stroke-width="1.4" stroke-linejoin="round" stroke-linecap="round" />
<polyline points="430.9,784.1 451.5,794.0" fill="none" stroke="#e7e9ed" stroke-width="1.4" stroke-linejoin="round" stroke-linecap="round" />
<polyline points="436.0,742.5 473.4,750.8" fill="none" stroke="#e7e9ed" stroke-width="1.4" stroke-linejoin="round" stroke-linecap="round" />
<polyline points="512.3,550.0 541.7,562.6" fill="none" stroke="#e7e9ed" stroke-width="1.4" stroke-linejoin="round" stroke-linecap="round" />
<polyline points="526.4,636.7 512.7,669.7" fill="none" stroke="#e7e9ed" stroke-width="1.4" stroke-linejoin="round" stroke-linecap="round" />
<polyline points="551.0,778.8 578.9,791.2" fill="none" stroke="#e7e9ed" stroke-width="1.4" stroke-linejoin="round" stroke-linecap="round" />
<polyline points="348.5,461.9 372.5,463.8" fill="none" stroke="#e7e9ed" stroke-width="1.4" stroke-linejoin="round" stroke-linecap="round" />
<polyline points="454.0,428.0 476.5,433.2" fill="none" stroke="#e7e9ed" stroke-width="1.4" stroke-linejoin="round" stroke-linecap="round" />
<polyline points="559.5,594.2 593.4,608.3" fill="none" stroke="#e7e9ed" stroke-width="1.4" stroke-linejoin="round" stroke-linecap="round" />
<polyline points="535.3,433.2 522.9,459.9" fill="none" stroke="#e7e9ed" stroke-width="1.4" stroke-linejoin="round" stroke-linecap="round" />
<polyline points="480.4,729.6 498.5,735.5" fill="none" stroke="#e7e9ed" stroke-width="1.4" stroke-linejoin="round" stroke-linecap="round" />
<polyline points="457.3,586.5 477.6,590.1" fill="none" stroke="#e7e9ed" stroke-width="1.4" stroke-linejoin="round" stroke-linecap="round" />
<polyline points="484.6,466.2 482.1,494.6" fill="none" stroke="#e7e9ed" stroke-width="1.4" stroke-linejoin="round" stroke-linecap="round" />
<polyline points="545.4,589.0 579.7,604.4" fill="none" stroke="#e7e9ed" stroke-width="1.4" stroke-linejoin="round" stroke-linecap="round" />
<polyline points="469.6,525.3 488.3,532.4" fill="none" stroke="#e7e9ed" stroke-width="1.4" stroke-linejoin="round" stroke-linecap="round" />
<polyline points="443.2,686.8 459.9,692.4" fill="none" stroke="#e7e9ed" stroke-width="1.4" stroke-linejoin="round" stroke-linecap="round" />
<polyline points="498.0,597.0 490.4,620.9" fill="none" stroke="#e7e9ed" stroke-width="1.4" stroke-linejoin="round" stroke-linecap="round" />
<polyline points="412.4,513.0 439.5,516.6" fill="none" stroke="#e7e9ed" stroke-width="1.4" stroke-linejoin="round" stroke-linecap="round" />
<polyline points="553.5,572.2 548.9,610.6" fill="none" stroke="#e7e9ed" stroke-width="1.4" stroke-linejoin="round" stroke-linecap="round" />
<polyline points="415.3,545.0 408.6,584.1" fill="none" stroke="#e7e9ed" stroke-width="1.4" stroke-linejoin="round" stroke-linecap="round" />
<polyline points="409.2,716.5 437.0,724.6" fill="none" stroke="#e7e9ed" stroke-width="1.4" stroke-linejoin="round" stroke-linecap="round" />
<polyline points="420.5,672.6 411.9,692.7" fill="none" stroke="#e7e9ed" stroke-width="1.4" stroke-linejoin="round" stroke-linecap="round" />
<polyline points="509.2,620.0 539.2,626.9" fill="none" stroke="#e7e9ed" stroke-width="1.4" stroke-linejoin="round" stroke-linecap="round" />
<polyline points="376.0,497.8 365.8,522.2" fill="none" stroke="#e7e9ed" stroke-width="1.4" stroke-linejoin="round" stroke-linecap="round" />
<polyline points="504.1,705.4 499.2,734.7" fill="none" stroke="#e7e9ed" stroke-width="1.4" stroke-linejoin="round" stroke-linecap="round" />
<polyline points="481.3,690.1 476.4,701.2" fill="none" stroke="#e7e9ed" stroke-width="1.4" stroke-linejoin="round" stroke-linecap="round" />
<polyline points="509.9,645.0 501.2,683.8" fill="none" stroke="#e7e9ed" stroke-width="1.4" stroke-linejoin="round" stroke-linecap="round" />
<polyline points="494.2,530.6 490.2,553.2" fill="none" stroke="#e7e9ed" stroke-width="1.4" stroke-linejoin="round" stroke-linecap="round" />
<polyline points="464.8,567.6 463.0,600.5" fill="none" stroke="#e7e9ed" stroke-width="1.4" stroke-linejoin="round" stroke-linecap="round" />
<polyline points="557.8,566.2 555.2,586.5" fill="none" stroke="#e7e9ed" stroke-width="1.4" stroke-linejoin="round" stroke-linecap="round" />
<polyline points="470.5,453.8 463.8,488.8" fill="none" stroke="#e7e9ed" stroke-width="1.4" stroke-linejoin="round" stroke-linecap="round" />
<polyline points="941.7,411.7 947.3,448.2" fill="none" stroke="#e7e9ed" stroke-width="1.4" stroke-linejoin="round" stroke-linecap="round" />
<polyline points="732.4,399.0 699.2,404.8" fill="none" stroke="#e7e9ed" stroke-width="1.4" stroke-linejoin="round" stroke-linecap="round" />
<polyline points="833.9,419.7 813.5,428.1" fill="none" stroke="#e7e9ed" stroke-width="1.4" stroke-linejoin="round" stroke-linecap="round" />
<polyline points="981.2,354.6 992.4,374.2" fill="none" stroke="#e7e9ed" stroke-width="1.4" stroke-linejoin="round" stroke-linecap="round" />
<polyline points="784.3,331.4 791.7,369.7" fill="none" stroke="#e7e9ed" stroke-width="1.4" stroke-linejoin="round" stroke-linecap="round" />
<polyline points="864.9,419.2 833.1,428.0" fill="none" stroke="#e7e9ed" stroke-width="1.4" stroke-linejoin="round" stroke-linecap="round" />
<polyline points="673.2,291.3 638.5,296.5" fill="none" stroke="#e7e9ed" stroke-width="1.4" stroke-linejoin="round" stroke-linecap="round" />
<polyline points="962.0,357.4 936.5,365.1" fill="none" stroke="#e7e9ed" stroke-width="1.4" stroke-linejoin="round" stroke-linecap="round" />
<polyline points="661.7,332.1 677.6,368.6" fill="none" stroke="#e7e9ed" stroke-width="1.4" stroke-linejoin="round" stroke-linecap="round" />
<polyline points="788.1,377.1 761.6,384.2" fill="none" stroke="#e7e9ed" stroke-width="1.4" stroke-linejoin="round" stroke-linecap="round" />
<polyline points="675.5,221.1 687.3,244.2" fill="none" stroke="#e7e9ed" stroke-width="1.4" stroke-linejoin="round" stroke-linecap="round" />
<polyline points="999.0,334.0 983.6,338.9" fill="none" stroke="#e7e9ed" stroke-width="1.4" stroke-linejoin="round" stroke-linecap="round" />
<polyline points="650.5,233.4 622.0,239.6" fill="none" stroke="#e7e9ed" stroke-width="1.4" stroke-linejoin="round" stroke-linecap="round" />
<polyline points="644.5,373.7 628.1,382.6" fill="none" stroke="#e7e9ed" stroke-width="1.4" stroke-linejoin="round" stroke-linecap="round" />
<polyline points="739.2,224.6 746.8,262.4" fill="none" stroke="#e7e9ed" stroke-width="1.4" stroke-linejoin="round" stroke-linecap="round" />
<polyline points="662.7,256.7 647.2,266.2" fill="none" stroke="#e7e9ed" stroke-width="1.4" stroke-linejoin="round" stroke-linecap="round" />
<polyline points="782.6,372.3 793.3,399.7" fill="none" stroke="#e7e9ed" stroke-width="1.4" stroke-linejoin="round" stroke-linecap="round" />
<polyline points="729.8,226.9 745.1,260.7" fill="none" stroke="#e7e9ed" stroke-width="1.4" stroke-linejoin="round" stroke-linecap="round" />
<polyline points="856.9,411.9 843.2,414.0" fill="none" stroke="#e7e9ed" stroke-width="1.4" stroke-linejoin="round" stroke-linecap="round" />
<polyline points="883.8,354.3 892.5,375.8" fill="none" stroke="#e7e9ed" stroke-width="1.4" stroke-linejoin="round" stroke-linecap="round" />
<polyline points="701.2,294.6 704.2,314.5" fill="none" stroke="#e7e9ed" stroke-width="1.4" stroke-linejoin="round" stroke-linecap="round" />
<polyline points="684.4,384.8 662.7,392.1" fill="none" stroke="#e7e9ed" stroke-width="1.4" stroke-linejoin="round" stroke-linecap="round" />
<polyline points="649.1,380.6 652.9,394.7" fill="none" stroke="#e7e9ed" stroke-width="1.4" stroke-linejoin="round" stroke-linecap="round" />
<polyline points="737.1,386.7 745.1,410.4" fill="none" stroke="#e7e9ed" stroke-width="1.4" stroke-linejoin="round" stroke-linecap="round" />
<polyline points="785.9,345.1 796.5,368.1" fill="none" stroke="#e7e9ed" stroke-width="1.4" stroke-linejoin="round" stroke-linecap="round" />
<polyline points="713.6,391.4 720.1,430.8" fill="none" stroke="#e7e9ed" stroke-width="1.4" stroke-linejoin="round" stroke-linecap="round" />
<polyline points="996.4,326.0 979.3,331.4" fill="none" stroke="#e7e9ed" stroke-width="1.4" stroke-linejoin="round" stroke-linecap="round" />
<polyline points="737.3,373.9 709.9,390.6" fill="none" stroke="#e7e9ed" stroke-width="1.4" stroke-linejoin="round" stroke-linecap="round" />
<polyline points="692.2,221.0 701.1,253.6" fill="none" stroke="#e7e9ed" stroke-width="1.4" stroke-linejoin="round" stroke-linecap="round" />
<polyline points="723.4,256.0 742.4,288.5" fill="none" stroke="#e7e9ed" stroke-width="1.4" stroke-linejoin="round" stroke-linecap="round" />
<polyline points="929.9,371.2 940.4,389.1" fill="none" stroke="#e7e9ed" stroke-width="1.4" stroke-linejoin="round" stroke-linecap="round" />
<polyline points="721.5,243.5 700.4,253.4" fill="none" stroke="#e7e9ed" stroke-width="1.4" stroke-linejoin="round" stroke-linecap="round" />
<polyline points="967.2,374.5 970.0,391.3" fill="none" stroke="#e7e9ed" stroke-width="1.4" stroke-linejoin="round" stroke-linecap="round" />
<polyline points="772.0,379.5 759.5,381.8" fill="none" stroke="#e7e9ed" stroke-width="1.4" stroke-linejoin="round" stroke-linecap="round" />
<polyline points="1000.0,298.9 1007.0,312.4" fill="none" stroke="#e7e9ed" stroke-width="1.4" stroke-linejoin="round" stroke-linecap="round" />
<polyline points="968.6,366.3 979.6,393.1" fill="none" stroke="#e7e9ed" stroke-width="1.4" stroke-linejoin="round" stroke-linecap="round" />
<polyline points="795.1,370.9 800.1,383.0" fill="none" stroke="#e7e9ed" stroke-width="1.4" stroke-linejoin="round" stroke-linecap="round" />
<polyline points="751.9,346.9 757.7,364.4" fill="none" stroke="#e7e9ed" stroke-width="1.4" stroke-linejoin="round" stroke-linecap="round" />
<polyline points="973.2,353.4 958.3,355.9" fill="none" stroke="#e7e9ed" stroke-width="1.4" stroke-linejoin="round" stroke-linecap="round" />
<polyline points="914.9,350.4 920.3,378.3" fill="none" stroke="#e7e9ed" stroke-width="1.4" stroke-linejoin="round" stroke-linecap="round" />
<polyline points="890.6,414.8 901.4,432.7" fill="none" stroke="#e7e9ed" stroke-width="1.4" stroke-linejoin="round" stroke-linecap="round" />
<polyline points="907.8,419.6 914.0,432.7" fill="none" stroke="#e7e9ed" stroke-width="1.4" stroke-linejoin="round" stroke-linecap="round" />
<polyline points="974.9,357.7 945.8,368.2" fill="none" stroke="#e7e9ed" stroke-width="1.4" stroke-linejoin="round" stroke-linecap="round" />
<polyline points="714.1,354.0 720.1,370.2" fill="none" stroke="#e7e9ed" stroke-width="1.4" stroke-linejoin="round" stroke-linecap="round" />
<polyline points="982.8,384.7 968.2,392.4" fill="none" stroke="#e7e9ed" stroke-width="1.4" stroke-linejoin="round" stroke-linecap="round" />
<polyline points="733.7,412.6 743.0,434.2" fill="none" stroke="#e7e9ed" stroke-width="1.4" stroke-linejoin="round" stroke-linecap="round" />
<polyline points="712.5,280.7 719.4,305.4" fill="none" stroke="#e7e9ed" stroke-width="1.4" stroke-linejoin="round" stroke-linecap="round" />
<polyline points="813.8,360.5 822.0,383.6" fill="none" stroke="#e7e9ed" stroke-width="1.4" stroke-linejoin="round" stroke-linecap="round" />
<polyline points="747.8,396.7 753.5,414.5" fill="none" stroke="#e7e9ed" stroke-width="1.4" stroke-linejoin="round" stroke-linecap="round" />
<polyline points="792.9,408.1 800.4,431.9" fill="none" stroke="#e7e9ed" stroke-width="1.4" stroke-linejoin="round" stroke-linecap="round" />
<polyline points="915.8,385.9 919.1,397.8" fill="none" stroke="#e7e9ed" stroke-width="1.4" stroke-linejoin="round" stroke-linecap="round" />
<polyline points="679.8,280.4 691.3,302.0" fill="none" stroke="#e7e9ed" stroke-width="1.4" stroke-linejoin="round" stroke-linecap="round" />
<polyline points="808.7,415.9 780.9,432.0" fill="none" stroke="#e7e9ed" stroke-width="1.4" stroke-linejoin="round" stroke-linecap="round" />
<polyline points="992.9,331.9 1003.9,369.0" fill="none" stroke="#e7e9ed" stroke-width="1.4" stroke-linejoin="round" stroke-linecap="round" />
<polyline points="815.8,376.3 783.7,396.2" fill="none" stroke="#e7e9ed" stroke-width="1.4" stroke-linejoin="round" stroke-linecap="round" />
<polyline points="976.7,349.8 963.1,353.8" fill="none" stroke="#e7e9ed" stroke-width="1.4" stroke-linejoin="round" stroke-linecap="round" />
<polyline points="772.4,412.3 788.3,440.3" fill="none" stroke="#e7e9ed" stroke-width="1.4" stroke-linejoin="round" stroke-linecap="round" />
<polyline points="751.7,342.6 720.6,358.8" fill="none" stroke="#e7e9ed" stroke-width="1.4" stroke-linejoin="round" stroke-linecap="round" />
<polyline points="755.3,292.4 736.6,296.4" fill="none" stroke="#e7e9ed" stroke-width="1.4" stroke-linejoin="round" stroke-linecap="round" />
<polyline points="660.8,239.7 622.9,246.5" fill="none" stroke="#e7e9ed" stroke-width="1.4" stroke-linejoin="round" stroke-linecap="round" />
<polyline points="696.7,278.5 705.5,294.6" fill="none" stroke="#e7e9ed" stroke-width="1.4" stroke-linejoin="round" stroke-linecap="round" />
<polyline points="689.8,346.6 678.4,353.2" fill="none" stroke="#e7e9ed" stroke-width="1.4" stroke-linejoin="round" stroke-linecap="round" />
<polyline points="942.7,390.8 930.4,397.5" fill="none" stroke="#e7e9ed" stroke-width="1.4" stroke-linejoin="round" stroke-linecap="round" />
<polyline points="659.9,361.6 649.4,367.8" fill="none" stroke="#e7e9ed" stroke-width="1.4" stroke-linejoin="round" stroke-linecap="round" />
<polyline points="641.5,380.4 617.7,388.4" fill="none" stroke="#e7e9ed" stroke-width="1.4" stroke-linejoin="round" stroke-linecap="round" />
<polyline points="784.5,341.0 787.5,354.4" fill="none" stroke="#e7e9ed" stroke-width="1.4" stroke-linejoin="round" stroke-linecap="round" />
<polyline points="746.9,333.4 718.7,343.9" fill="none" stroke="#e7e9ed" stroke-width="1.4" stroke-linejoin="round" stroke-linecap="round" />
<polyline points="747.8,287.4 751.4,305.2" fill="none" stroke="#e7e9ed" stroke-width="1.4" stroke-linejoin="round" stroke-linecap="round" />
<polyline points="906.3,357.7 912.5,379.2" fill="none" stroke="#e7e9ed" stroke-width="1.4" stroke-linejoin="round" stroke-linecap="round" />
<polyline points="705.0,397.8 720.9,429.4" fill="none" stroke="#e7e9ed" stroke-width="1.4" stroke-linejoin="round" stroke-linecap="round" />
<polyline points="881.3,361.2 887.2,378.6" fill="none" stroke="#e7e9ed" stroke-width="1.4" stroke-linejoin="round" stroke-linecap="round" />
<polyline points="668.9,300.4 672.4,315.8" fill="none" stroke="#e7e9ed" stroke-width="1.4" stroke-linejoin="round" stroke-linecap="round" />
<polyline points="941.9,409.5 953.0,438.7" fill="none" stroke="#e7e9ed" stroke-width="1.4" stroke-linejoin="round" stroke-linecap="round" />
<polyline points="835.9,413.5 846.6,445.5" fill="none" stroke="#e7e9ed" stroke-width="1.4" stroke-linejoin="round" stroke-linecap="round" />
<polyline points="689.2,374.8 694.3,387.1" fill="none" stroke="#e7e9ed" stroke-width="1.4" stroke-linejoin="round" stroke-linecap="round" />
<polyline points="655.0,359.8 660.5,374.1" fill="none" stroke="#e7e9ed" stroke-width="1.4" stroke-linejoin="round" stroke-linecap="round" />
<polyline points="688.8,401.5 699.5,436.3" fill="none" stroke="#e7e9ed" stroke-width="1.4" stroke-linejoin="round" stroke-linecap="round" />
<polyline points="842.7,403.3 813.6,418.8" fill="none" stroke="#e7e9ed" stroke-width="1.4" stroke-linejoin="round" stroke-linecap="round" />
<polyline points="762.9,372.3 766.2,387.3" fill="none" stroke="#e7e9ed" stroke-width="1.4" stroke-linejoin="round" stroke-linecap="round" />
<polyline points="774.3,366.9 761.5,370.3" fill="none" stroke="#e7e9ed" stroke-width="1.4" stroke-linejoin="round" stroke-linecap="round" />
<polyline points="837.6,380.2 857.0,412.3" fill="none" stroke="#e7e9ed" stroke-width="1.4" stroke-linejoin="round" stroke-linecap="round" />
<polyline points="727.3,289.6 693.4,310.3" fill="none" stroke="#e7e9ed" stroke-width="1.4" stroke-linejoin="round" stroke-linecap="round" />
<polyline points="798.4,377.8 768.4,394.7" fill="none" stroke="#e7e9ed" stroke-width="1.4" stroke-linejoin="round" stroke-linecap="round" />
<polyline points="706.7,330.0 676.5,335.8" fill="none" stroke="#e7e9ed" stroke-width="1.4" stroke-linejoin="round" stroke-linecap="round" />
<polyline points="730.1,419.4 717.9,421.4" fill="none" stroke="#e7e9ed" stroke-width="1.4" stroke-linejoin="round" stroke-linecap="round" />
<polyline points="820.6,394.4 835.4,419.7" fill="none" stroke="#e7e9ed" stroke-width="1.4" stroke-linejoin="round" stroke-linecap="round" />
<polyline points="943.5,413.4 909.8,427.4" fill="none" stroke="#e7e9ed" stroke-width="1.4" stroke-linejoin="round" stroke-linecap="round" />
<polyline points="961.8,337.0 977.7,368.2" fill="none" stroke="#e7e9ed" stroke-width="1.4" stroke-linejoin="round" stroke-linecap="round" />
<polyline points="999.6,426.3 1011.5,444.7" fill="none" stroke="#e7e9ed" stroke-width="1.4" stroke-linejoin="round" stroke-linecap="round" />
<polyline points="861.1,475.8 872.4,491.1" fill="none" stroke="#e7e9ed" stroke-width="1.4" stroke-linejoin="round" stroke-linecap="round" />
<polyline points="887.6,436.9 904.3,427.2" fill="none" stroke="#e7e9ed" stroke-width="1.4" stroke-linejoin="round" stroke-linecap="round" />
<polyline points="969.2,465.6 981.5,461.6" fill="none" stroke="#e7e9ed" stroke-width="1.4" stroke-linejoin="round" stroke-linecap="round" />
<polyline points="929.7,416.3 965.4,402.6" fill="none" stroke="#e7e9ed" stroke-width="1.4" stroke-linejoin="round" stroke-linecap="round" />
<polyline points="990.8,420.8 1001.6,444.7" fill="none" stroke="#e7e9ed" stroke-width="1.4" stroke-linejoin="round" stroke-linecap="round" />
<polyline points="982.0,430.1 999.7,456.4" fill="none" stroke="#e7e9ed" stroke-width="1.4" stroke-linejoin="round" stroke-linecap="round" />
<polyline points="1010.3,460.7 1047.1,445.4" fill="none" stroke="#e7e9ed" stroke-width="1.4" stroke-linejoin="round" stroke-linecap="round" />
<polyline points="889.0,401.1 901.3,420.6" fill="none" stroke="#e7e9ed" stroke-width="1.4" stroke-linejoin="round" stroke-linecap="round" />
<polyline points="972.7,388.8 989.1,411.4" fill="none" stroke="#e7e9ed" stroke-width="1.4" stroke-linejoin="round" stroke-linecap="round" />
<polyline points="874.1,398.0 892.2,388.4" fill="none" stroke="#e7e9ed" stroke-width="1.4" stroke-linejoin="round" stroke-linecap="round" />
<polyline points="927.9,453.6 943.7,487.9" fill="none" stroke="#e7e9ed" stroke-width="1.4" stroke-linejoin="round" stroke-linecap="round" />
<polyline points="1021.0,423.9 1036.7,412.7" fill="none" stroke="#e7e9ed" stroke-width="1.4" stroke-linejoin="round" stroke-linecap="round" />
<polyline points="864.4,392.9 871.9,403.0" fill="none" stroke="#e7e9ed" stroke-width="1.4" stroke-linejoin="round" stroke-linecap="round" />
<polyline points="869.2,449.6 880.1,477.7" fill="none" stroke="#e7e9ed" stroke-width="1.4" stroke-linejoin="round" stroke-linecap="round" />
<polyline points="897.8,506.8 910.4,500.2" fill="none" stroke="#e7e9ed" stroke-width="1.4" stroke-linejoin="round" stroke-linecap="round" />
<polyline points="925.5,387.3 949.9,369.9" fill="none" stroke="#e7e9ed" stroke-width="1.4" stroke-linejoin="round" stroke-linecap="round" />
<polyline points="862.9,424.6 879.8,411.9" fill="none" stroke="#e7e9ed" stroke-width="1.4" stroke-linejoin="round" stroke-linecap="round" />
<polyline points="937.8,495.8 960.0,524.4" fill="none" stroke="#e7e9ed" stroke-width="1.4" stroke-linejoin="round" stroke-linecap="round" />
<polyline points="1012.9,377.4 1028.6,413.8" fill="none" stroke="#e7e9ed" stroke-width="1.4" stroke-linejoin="round" stroke-linecap="round" />
<polyline points="936.7,548.0 952.4,534.2" fill="none" stroke="#e7e9ed" stroke-width="1.4" stroke-linejoin="round" stroke-linecap="round" />
<polyline points="985.6,422.7 1000.4,451.4" fill="none" stroke="#e7e9ed" stroke-width="1.4" stroke-linejoin="round" stroke-linecap="round" />
<polyline points="923.2,378.7 944.6,362.6" fill="none" stroke="#e7e9ed" stroke-width="1.4" stroke-linejoin="round" stroke-linecap="round" />
<polyline points="1021.4,431.6 1035.7,454.6" fill="none" stroke="#e7e9ed" stroke-width="1.4" stroke-linejoin="round" stroke-linecap="round" />
<polyline points="973.0,471.0 990.4,494.6" fill="none" stroke="#e7e9ed" stroke-width="1.4" stroke-linejoin="round" stroke-linecap="round" />
<polyline points="1016.2,455.5 1035.1,447.3" fill="none" stroke="#e7e9ed" stroke-width="1.4" stroke-linejoin="round" stroke-linecap="round" />
<polyline points="947.0,415.7 954.7,425.2" fill="none" stroke="#e7e9ed" stroke-width="1.4" stroke-linejoin="round" stroke-linecap="round" />
<polyline points="951.3,491.1 969.7,514.3" fill="none" stroke="#e7e9ed" stroke-width="1.4" stroke-linejoin="round" stroke-linecap="round" />
<polyline points="937.0,555.8 950.7,548.8" fill="none" stroke="#e7e9ed" stroke-width="1.4" stroke-linejoin="round" stroke-linecap="round" />
<polyline points="964.3,401.0 987.8,384.0" fill="none" stroke="#e7e9ed" stroke-width="1.4" stroke-linejoin="round" stroke-linecap="round" />
<polyline points="1009.6,465.7 1017.0,483.0" fill="none" stroke="#e7e9ed" stroke-width="1.4" stroke-linejoin="round" stroke-linecap="round" />
<polyline points="982.1,428.8 993.0,446.9" fill="none" stroke="#e7e9ed" stroke-width="1.4" stroke-linejoin="round" stroke-linecap="round" />
<polyline points="1000.8,373.1 1010.3,392.7" fill="none" stroke="#e7e9ed" stroke-width="1.4" stroke-linejoin="round" stroke-linecap="round" />
<polyline points="903.8,435.2 913.6,463.1" fill="none" stroke="#e7e9ed" stroke-width="1.4" stroke-linejoin="round" stroke-linecap="round" />
<polyline points="903.0,410.4 911.0,427.4" fill="none" stroke="#e7e9ed" stroke-width="1.4" stroke-linejoin="round" stroke-linecap="round" />
<polyline points="928.0,425.2 937.1,443.4" fill="none" stroke="#e7e9ed" stroke-width="1.4" stroke-linejoin="round" stroke-linecap="round" />
<polyline points="969.3,391.3 974.5,406.3" fill="none" stroke="#e7e9ed" stroke-width="1.4" stroke-linejoin="round" stroke-linecap="round" />
<polyline points="917.6,377.7 949.5,359.0" fill="none" stroke="#e7e9ed" stroke-width="1.4" stroke-linejoin="round" stroke-linecap="round" />
<polyline points="891.0,496.6 899.1,507.3" fill="none" stroke="#e7e9ed" stroke-width="1.4" stroke-linejoin="round" stroke-linecap="round" />
<polyline points="1001.2,369.2 1023.3,397.9" fill="none" stroke="#e7e9ed" stroke-width="1.4" stroke-linejoin="round" stroke-linecap="round" />
<polyline points="864.7,382.3 880.6,369.5" fill="none" stroke="#e7e9ed" stroke-width="1.4" stroke-linejoin="round" stroke-linecap="round" />
<polyline points="956.5,430.3 976.4,418.5" fill="none" stroke="#e7e9ed" stroke-width="1.4" stroke-linejoin="round" stroke-linecap="round" />
<polyline points="939.5,488.4 953.5,525.3" fill="none" stroke="#e7e9ed" stroke-width="1.4" stroke-linejoin="round" stroke-linecap="round" />
<polyline points="866.3,406.9 886.0,389.7" fill="none" stroke="#e7e9ed" stroke-width="1.4" stroke-linejoin="round" stroke-linecap="round" />
<polyline points="904.5,446.1 916.6,440.6" fill="none" stroke="#e7e9ed" stroke-width="1.4" stroke-linejoin="round" stroke-linecap="round" />
<polyline points="881.2,551.4 891.7,545.5" fill="none" stroke="#e7e9ed" stroke-width="1.4" stroke-linejoin="round" stroke-linecap="round" />
<polyline points="903.0,468.1 934.0,450.7" fill="none" stroke="#e7e9ed" stroke-width="1.4" stroke-linejoin="round" stroke-linecap="round" />
<polyline points="873.9,500.7 885.2,492.6" fill="none" stroke="#e7e9ed" stroke-width="1.4" stroke-linejoin="round" stroke-linecap="round" />
<polyline points="868.3,461.8 883.4,497.3" fill="none" stroke="#e7e9ed" stroke-width="1.4" stroke-linejoin="round" stroke-linecap="round" />
<polyline points="911.3,425.1 935.7,413.1" fill="none" stroke="#e7e9ed" stroke-width="1.4" stroke-linejoin="round" stroke-linecap="round" />
<polyline points="997.8,439.9 1008.8,459.7" fill="none" stroke="#e7e9ed" stroke-width="1.4" stroke-linejoin="round" stroke-linecap="round" />
<polyline points="889.0,512.2 903.4,546.5" fill="none" stroke="#e7e9ed" stroke-width="1.4" stroke-linejoin="round" stroke-linecap="round" />
<polyline points="981.9,407.8 995.8,437.1" fill="none" stroke="#e7e9ed" stroke-width="1.4" stroke-linejoin="round" stroke-linecap="round" />
<polyline points="987.4,377.4 999.9,372.7" fill="none" stroke="#e7e9ed" stroke-width="1.4" stroke-linejoin="round" stroke-linecap="round" />
<polyline points="993.3,424.9 1003.3,443.1" fill="none" stroke="#e7e9ed" stroke-width="1.4" stroke-linejoin="round" stroke-linecap="round" />
<polyline points="957.9,478.5 975.5,502.3" fill="none" stroke="#e7e9ed" stroke-width="1.4" stroke-linejoin="round" stroke-linecap="round" />
<polyline points="1002.7,435.8 1025.2,421.4" fill="none" stroke="#e7e9ed" stroke-width="1.4" stroke-linejoin="round" stroke-linecap="round" />
<polyline points="921.9,485.8 953.3,474.4" fill="none" stroke="#e7e9ed" stroke-width="1.4" stroke-linejoin="round" stroke-linecap="round" />
<polyline points="910.4,528.2 922.8,550.3" fill="none" stroke="#e7e9ed" stroke-width="1.4" stroke-linejoin="round" stroke-linecap="round" />
<polyline points="902.5,388.4 915.6,411.7" fill="none" stroke="#e7e9ed" stroke-width="1.4" stroke-linejoin="round" stroke-linecap="round" />
<polyline points="1016.2,407.7 1040.1,388.8" fill="none" stroke="#e7e9ed" stroke-width="1.4" stroke-linejoin="round" stroke-linecap="round" />
<polyline points="894.1,549.5 912.4,537.0" fill="none" stroke="#e7e9ed" stroke-width="1.4" stroke-linejoin="round" stroke-linecap="round" />
<polyline points="530.0,324.0 570.0,330.0 612.0,338.0 660.0,335.0 730.0,321.0" fill="none" stroke="#fbfbfc" stroke-width="6" stroke-linejoin="round" stroke-linecap="round" />
<polyline points="598.0,290.0 620.0,310.0 646.0,338.0" fill="none" stroke="#fbfbfc" stroke-width="6" stroke-linejoin="round" stroke-linecap="round" />
<polyline points="600.0,275.0 640.0,283.0 700.0,280.0 730.0,290.0" fill="none" stroke="#fbfbfc" stroke-width="6" stroke-linejoin="round" stroke-linecap="round" />
<polyline points="690.0,218.0 700.0,260.0 705.0,300.0 710.0,368.0" fill="none" stroke="#fbfbfc" stroke-width="6" stroke-linejoin="round" stroke-linecap="round" />
<polyline points="720.0,250.0 760.0,270.0 800.0,280.0" fill="none" stroke="#fbfbfc" stroke-width="6" stroke-linejoin="round" stroke-linecap="round" />
<polyline points="581.0,300.0 578.0,325.0" fill="none" stroke="#fbfbfc" stroke-width="6" stroke-linejoin="round" stroke-linecap="round" />
<polyline points="346.0,470.0 400.0,462.0 456.0,462.0 546.0,428.0 600.0,420.0 650.0,425.0" fill="none" stroke="#fbfbfc" stroke-width="6" stroke-linejoin="round" stroke-linecap="round" />
<polyline points="455.0,462.0 420.0,395.0" fill="none" stroke="#fbfbfc" stroke-width="6" stroke-linejoin="round" stroke-linecap="round" />
<polyline points="480.0,404.0 520.0,470.0 560.0,520.0" fill="none" stroke="#fbfbfc" stroke-width="6" stroke-linejoin="round" stroke-linecap="round" />
<polyline points="346.0,533.0 420.0,535.0 516.0,535.0 580.0,520.0" fill="none" stroke="#fbfbfc" stroke-width="6" stroke-linejoin="round" stroke-linecap="round" />
<polyline points="367.0,583.0 450.0,560.0 485.0,555.0 596.0,587.0" fill="none" stroke="#fbfbfc" stroke-width="6" stroke-linejoin="round" stroke-linecap="round" />
<polyline points="346.0,505.0 400.0,520.0 450.0,541.0 520.0,560.0" fill="none" stroke="#fbfbfc" stroke-width="6" stroke-linejoin="round" stroke-linecap="round" />
<polyline points="450.0,604.0 520.0,600.0 596.0,597.0" fill="none" stroke="#fbfbfc" stroke-width="6" stroke-linejoin="round" stroke-linecap="round" />
<polyline points="346.0,650.0 400.0,660.0 460.0,690.0" fill="none" stroke="#fbfbfc" stroke-width="6" stroke-linejoin="round" stroke-linecap="round" />
<polyline points="480.0,720.0 560.0,690.0 620.0,660.0" fill="none" stroke="#fbfbfc" stroke-width="6" stroke-linejoin="round" stroke-linecap="round" />
<polyline points="520.0,760.0 600.0,730.0 660.0,700.0 720.0,690.0" fill="none" stroke="#fbfbfc" stroke-width="6" stroke-linejoin="round" stroke-linecap="round" />
<polyline points="560.0,804.0 620.0,770.0 700.0,740.0 780.0,720.0" fill="none" stroke="#fbfbfc" stroke-width="6" stroke-linejoin="round" stroke-linecap="round" />
<polyline points="640.0,804.0 700.0,770.0 760.0,740.0" fill="none" stroke="#fbfbfc" stroke-width="6" stroke-linejoin="round" stroke-linecap="round" />
<polyline points="346.0,720.0 400.0,740.0 440.0,760.0 470.0,804.0" fill="none" stroke="#fbfbfc" stroke-width="6" stroke-linejoin="round" stroke-linecap="round" />
<polyline points="346.0,760.0 380.0,780.0 420.0,804.0" fill="none" stroke="#fbfbfc" stroke-width="6" stroke-linejoin="round" stroke-linecap="round" />
<polyline points="578.0,250.0 590.0,300.0 595.0,340.0" fill="none" stroke="#fbfbfc" stroke-width="6" stroke-linejoin="round" stroke-linecap="round" />
<polyline points="650.0,218.0 652.0,300.0 655.0,380.0 660.0,420.0" fill="none" stroke="#fbfbfc" stroke-width="6" stroke-linejoin="round" stroke-linecap="round" />
<polyline points="681.0,218.0 683.0,300.0 690.0,360.0" fill="none" stroke="#fbfbfc" stroke-width="6" stroke-linejoin="round" stroke-linecap="round" />
<polyline points="820.0,218.0 830.0,300.0 840.0,380.0" fill="none" stroke="#fbfbfc" stroke-width="6" stroke-linejoin="round" stroke-linecap="round" />
<polyline points="723.0,340.0 736.0,395.0 727.0,422.0 700.0,468.0" fill="none" stroke="#fbfbfc" stroke-width="6" stroke-linejoin="round" stroke-linecap="round" />
<polyline points="700.0,373.0 755.0,367.0 798.0,364.0 864.0,345.0 900.0,340.0 960.0,330.0 1013.0,290.0" fill="none" stroke="#fbfbfc" stroke-width="6" stroke-linejoin="round" stroke-linecap="round" />
<polyline points="767.0,389.0 788.0,417.0 810.0,429.0" fill="none" stroke="#fbfbfc" stroke-width="6" stroke-linejoin="round" stroke-linecap="round" />
<polyline points="850.0,428.0 883.0,431.0 900.0,468.0" fill="none" stroke="#fbfbfc" stroke-width="6" stroke-linejoin="round" stroke-linecap="round" />
<polyline points="875.0,428.0 894.0,500.0" fill="none" stroke="#fbfbfc" stroke-width="6" stroke-linejoin="round" stroke-linecap="round" />
<polyline points="900.0,400.0 905.0,460.0 915.0,520.0" fill="none" stroke="#fbfbfc" stroke-width="6" stroke-linejoin="round" stroke-linecap="round" />
<polyline points="960.0,300.0 980.0,380.0 990.0,450.0" fill="none" stroke="#fbfbfc" stroke-width="6" stroke-linejoin="round" stroke-linecap="round" />
<polyline points="950.0,640.0 1000.0,600.0 1052.0,580.0" fill="none" stroke="#fbfbfc" stroke-width="6" stroke-linejoin="round" stroke-linecap="round" />
<polyline points="940.0,700.0 990.0,720.0 1052.0,730.0" fill="none" stroke="#fbfbfc" stroke-width="6" stroke-linejoin="round" stroke-linecap="round" />
<polyline points="620.0,460.0 680.0,470.0 720.0,470.0" fill="none" stroke="#fbfbfc" stroke-width="6" stroke-linejoin="round" stroke-linecap="round" />
<polyline points="540.0,600.0 580.0,640.0 610.0,680.0" fill="none" stroke="#fbfbfc" stroke-width="6" stroke-linejoin="round" stroke-linecap="round" />
<polyline points="346.0,420.0 380.0,440.0 400.0,500.0 410.0,560.0" fill="none" stroke="#fbfbfc" stroke-width="6" stroke-linejoin="round" stroke-linecap="round" />
<polyline points="480.0,500.0 540.0,480.0 590.0,470.0" fill="none" stroke="#fbfbfc" stroke-width="6" stroke-linejoin="round" stroke-linecap="round" />
<polyline points="690.0,520.0 720.0,540.0 760.0,540.0 800.0,520.0" fill="none" stroke="#fbfbfc" stroke-width="6" stroke-linejoin="round" stroke-linecap="round" />
<polyline points="830.0,590.0 870.0,600.0 910.0,600.0" fill="none" stroke="#fbfbfc" stroke-width="6" stroke-linejoin="round" stroke-linecap="round" />
<polyline points="600.0,692.0 694.0,681.0 760.0,670.0" fill="none" stroke="#fbfbfc" stroke-width="6" stroke-linejoin="round" stroke-linecap="round" />
<polyline points="628.0,804.0 684.0,705.0 735.0,659.0" fill="none" stroke="#fbfbfc" stroke-width="6" stroke-linejoin="round" stroke-linecap="round" />
<polyline points="671.0,804.0 662.0,749.0 619.0,683.0" fill="none" stroke="#fbfbfc" stroke-width="6" stroke-linejoin="round" stroke-linecap="round" />
<polyline points="1000.0,480.0 1020.0,540.0 1052.0,560.0" fill="none" stroke="#fbfbfc" stroke-width="6" stroke-linejoin="round" stroke-linecap="round" />
<polyline points="900.0,520.0 960.0,500.0 1052.0,480.0" fill="none" stroke="#fbfbfc" stroke-width="6" stroke-linejoin="round" stroke-linecap="round" />
<polyline points="760.0,218.0 770.0,300.0 790.0,340.0" fill="none" stroke="#fbfbfc" stroke-width="6" stroke-linejoin="round" stroke-linecap="round" />
<polyline points="960.0,218.0 990.0,260.0 1013.0,240.0" fill="none" stroke="#fbfbfc" stroke-width="6" stroke-linejoin="round" stroke-linecap="round" />
<polyline points="346.0,680.0 380.0,700.0 420.0,720.0" fill="none" stroke="#fbfbfc" stroke-width="6" stroke-linejoin="round" stroke-linecap="round" />
<polyline points="470.0,804.0 520.0,760.0 560.0,720.0" fill="none" stroke="#fbfbfc" stroke-width="6" stroke-linejoin="round" stroke-linecap="round" />
<polyline points="530.0,324.0 570.0,330.0 612.0,338.0 660.0,335.0 730.0,321.0" fill="none" stroke="#dde0e4" stroke-width="3" stroke-linejoin="round" stroke-linecap="round" />
<polyline points="598.0,290.0 620.0,310.0 646.0,338.0" fill="none" stroke="#dde0e4" stroke-width="3" stroke-linejoin="round" stroke-linecap="round" />
<polyline points="600.0,275.0 640.0,283.0 700.0,280.0 730.0,290.0" fill="none" stroke="#dde0e4" stroke-width="3" stroke-linejoin="round" stroke-linecap="round" />
<polyline points="690.0,218.0 700.0,260.0 705.0,300.0 710.0,368.0" fill="none" stroke="#dde0e4" stroke-width="3" stroke-linejoin="round" stroke-linecap="round" />
<polyline points="720.0,250.0 760.0,270.0 800.0,280.0" fill="none" stroke="#dde0e4" stroke-width="3" stroke-linejoin="round" stroke-linecap="round" />
<polyline points="581.0,300.0 578.0,325.0" fill="none" stroke="#dde0e4" stroke-width="3" stroke-linejoin="round" stroke-linecap="round" />
<polyline points="346.0,470.0 400.0,462.0 456.0,462.0 546.0,428.0 600.0,420.0 650.0,425.0" fill="none" stroke="#dde0e4" stroke-width="3" stroke-linejoin="round" stroke-linecap="round" />
<polyline points="455.0,462.0 420.0,395.0" fill="none" stroke="#dde0e4" stroke-width="3" stroke-linejoin="round" stroke-linecap="round" />
<polyline points="480.0,404.0 520.0,470.0 560.0,520.0" fill="none" stroke="#dde0e4" stroke-width="3" stroke-linejoin="round" stroke-linecap="round" />
<polyline points="346.0,533.0 420.0,535.0 516.0,535.0 580.0,520.0" fill="none" stroke="#dde0e4" stroke-width="3" stroke-linejoin="round" stroke-linecap="round" />
<polyline points="367.0,583.0 450.0,560.0 485.0,555.0 596.0,587.0" fill="none" stroke="#dde0e4" stroke-width="3" stroke-linejoin="round" stroke-linecap="round" />
<polyline points="346.0,505.0 400.0,520.0 450.0,541.0 520.0,560.0" fill="none" stroke="#dde0e4" stroke-width="3" stroke-linejoin="round" stroke-linecap="round" />
<polyline points="450.0,604.0 520.0,600.0 596.0,597.0" fill="none" stroke="#dde0e4" stroke-width="3" stroke-linejoin="round" stroke-linecap="round" />
<polyline points="346.0,650.0 400.0,660.0 460.0,690.0" fill="none" stroke="#dde0e4" stroke-width="3" stroke-linejoin="round" stroke-linecap="round" />
<polyline points="480.0,720.0 560.0,690.0 620.0,660.0" fill="none" stroke="#dde0e4" stroke-width="3" stroke-linejoin="round" stroke-linecap="round" />
<polyline points="520.0,760.0 600.0,730.0 660.0,700.0 720.0,690.0" fill="none" stroke="#dde0e4" stroke-width="3" stroke-linejoin="round" stroke-linecap="round" />
<polyline points="560.0,804.0 620.0,770.0 700.0,740.0 780.0,720.0" fill="none" stroke="#dde0e4" stroke-width="3" stroke-linejoin="round" stroke-linecap="round" />
<polyline points="640.0,804.0 700.0,770.0 760.0,740.0" fill="none" stroke="#dde0e4" stroke-width="3" stroke-linejoin="round" stroke-linecap="round" />
<polyline points="346.0,720.0 400.0,740.0 440.0,760.0 470.0,804.0" fill="none" stroke="#dde0e4" stroke-width="3" stroke-linejoin="round" stroke-linecap="round" />
<polyline points="346.0,760.0 380.0,780.0 420.0,804.0" fill="none" stroke="#dde0e4" stroke-width="3" stroke-linejoin="round" stroke-linecap="round" />
<polyline points="578.0,250.0 590.0,300.0 595.0,340.0" fill="none" stroke="#dde0e4" stroke-width="3" stroke-linejoin="round" stroke-linecap="round" />
<polyline points="650.0,218.0 652.0,300.0 655.0,380.0 660.0,420.0" fill="none" stroke="#dde0e4" stroke-width="3" stroke-linejoin="round" stroke-linecap="round" />
<polyline points="681.0,218.0 683.0,300.0 690.0,360.0" fill="none" stroke="#dde0e4" stroke-width="3" stroke-linejoin="round" stroke-linecap="round" />
<polyline points="820.0,218.0 830.0,300.0 840.0,380.0" fill="none" stroke="#dde0e4" stroke-width="3" stroke-linejoin="round" stroke-linecap="round" />
<polyline points="723.0,340.0 736.0,395.0 727.0,422.0 700.0,468.0" fill="none" stroke="#dde0e4" stroke-width="3" stroke-linejoin="round" stroke-linecap="round" />
<polyline points="700.0,373.0 755.0,367.0 798.0,364.0 864.0,345.0 900.0,340.0 960.0,330.0 1013.0,290.0" fill="none" stroke="#dde0e4" stroke-width="3" stroke-linejoin="round" stroke-linecap="round" />
<polyline points="767.0,389.0 788.0,417.0 810.0,429.0" fill="none" stroke="#dde0e4" stroke-width="3" stroke-linejoin="round" stroke-linecap="round" />
<polyline points="850.0,428.0 883.0,431.0 900.0,468.0" fill="none" stroke="#dde0e4" stroke-width="3" stroke-linejoin="round" stroke-linecap="round" />
<polyline points="875.0,428.0 894.0,500.0" fill="none" stroke="#dde0e4" stroke-width="3" stroke-linejoin="round" stroke-linecap="round" />
<polyline points="900.0,400.0 905.0,460.0 915.0,520.0" fill="none" stroke="#dde0e4" stroke-width="3" stroke-linejoin="round" stroke-linecap="round" />
<polyline points="960.0,300.0 980.0,380.0 990.0,450.0" fill="none" stroke="#dde0e4" stroke-width="3" stroke-linejoin="round" stroke-linecap="round" />
<polyline points="950.0,640.0 1000.0,600.0 1052.0,580.0" fill="none" stroke="#dde0e4" stroke-width="3" stroke-linejoin="round" stroke-linecap="round" />
<polyline points="940.0,700.0 990.0,720.0 1052.0,730.0" fill="none" stroke="#dde0e4" stroke-width="3" stroke-linejoin="round" stroke-linecap="round" />
<polyline points="620.0,460.0 680.0,470.0 720.0,470.0" fill="none" stroke="#dde0e4" stroke-width="3" stroke-linejoin="round" stroke-linecap="round" />
<polyline points="540.0,600.0 580.0,640.0 610.0,680.0" fill="none" stroke="#dde0e4" stroke-width="3" stroke-linejoin="round" stroke-linecap="round" />
<polyline points="346.0,420.0 380.0,440.0 400.0,500.0 410.0,560.0" fill="none" stroke="#dde0e4" stroke-width="3" stroke-linejoin="round" stroke-linecap="round" />
<polyline points="480.0,500.0 540.0,480.0 590.0,470.0" fill="none" stroke="#dde0e4" stroke-width="3" stroke-linejoin="round" stroke-linecap="round" />
<polyline points="690.0,520.0 720.0,540.0 760.0,540.0 800.0,520.0" fill="none" stroke="#dde0e4" stroke-width="3" stroke-linejoin="round" stroke-linecap="round" />
<polyline points="830.0,590.0 870.0,600.0 910.0,600.0" fill="none" stroke="#dde0e4" stroke-width="3" stroke-linejoin="round" stroke-linecap="round" />
<polyline points="600.0,692.0 694.0,681.0 760.0,670.0" fill="none" stroke="#dde0e4" stroke-width="3" stroke-linejoin="round" stroke-linecap="round" />
<polyline points="628.0,804.0 684.0,705.0 735.0,659.0" fill="none" stroke="#dde0e4" stroke-width="3" stroke-linejoin="round" stroke-linecap="round" />
<polyline points="671.0,804.0 662.0,749.0 619.0,683.0" fill="none" stroke="#dde0e4" stroke-width="3" stroke-linejoin="round" stroke-linecap="round" />
<polyline points="1000.0,480.0 1020.0,540.0 1052.0,560.0" fill="none" stroke="#dde0e4" stroke-width="3" stroke-linejoin="round" stroke-linecap="round" />
<polyline points="900.0,520.0 960.0,500.0 1052.0,480.0" fill="none" stroke="#dde0e4" stroke-width="3" stroke-linejoin="round" stroke-linecap="round" />
<polyline points="760.0,218.0 770.0,300.0 790.0,340.0" fill="none" stroke="#dde0e4" stroke-width="3" stroke-linejoin="round" stroke-linecap="round" />
<polyline points="960.0,218.0 990.0,260.0 1013.0,240.0" fill="none" stroke="#dde0e4" stroke-width="3" stroke-linejoin="round" stroke-linecap="round" />
<polyline points="346.0,680.0 380.0,700.0 420.0,720.0" fill="none" stroke="#dde0e4" stroke-width="3" stroke-linejoin="round" stroke-linecap="round" />
<polyline points="470.0,804.0 520.0,760.0 560.0,720.0" fill="none" stroke="#dde0e4" stroke-width="3" stroke-linejoin="round" stroke-linecap="round" />
<polyline points="585.0,300.0 600.0,380.0 620.0,460.0 640.0,540.0 660.0,600.0" fill="none" stroke="#fcfcfd" stroke-width="7" stroke-linejoin="round" stroke-linecap="round" />
<polyline points="700.0,464.0 746.0,457.0 791.0,444.0 810.0,428.0 811.0,409.0 799.0,376.0 797.0,340.0" fill="none" stroke="#fcfcfd" stroke-width="7" stroke-linejoin="round" stroke-linecap="round" />
<polyline points="810.0,430.0 855.0,430.0 900.0,431.0 960.0,420.0 1052.0,405.0" fill="none" stroke="#fcfcfd" stroke-width="7" stroke-linejoin="round" stroke-linecap="round" />
<polyline points="720.0,600.0 780.0,640.0 830.0,700.0 860.0,760.0 880.0,804.0" fill="none" stroke="#fcfcfd" stroke-width="7" stroke-linejoin="round" stroke-linecap="round" />
<polyline points="731.0,640.0 787.0,711.0 825.0,804.0" fill="none" stroke="#fcfcfd" stroke-width="7" stroke-linejoin="round" stroke-linecap="round" />
<polyline points="600.0,756.0 731.0,702.0 787.0,674.0" fill="none" stroke="#fcfcfd" stroke-width="7" stroke-linejoin="round" stroke-linecap="round" />
<polyline points="367.0,587.0 363.0,614.0 381.0,628.0 422.0,642.0 443.0,680.0 460.0,726.0 492.0,804.0" fill="none" stroke="#fcfcfd" stroke-width="7" stroke-linejoin="round" stroke-linecap="round" />
<polyline points="499.0,646.0 540.0,700.0 589.0,804.0" fill="none" stroke="#fcfcfd" stroke-width="7" stroke-linejoin="round" stroke-linecap="round" />
<polyline points="540.0,614.0 600.0,700.0 693.0,802.0" fill="none" stroke="#fcfcfd" stroke-width="7" stroke-linejoin="round" stroke-linecap="round" />
<polyline points="443.0,694.0 550.0,670.0 700.0,646.0" fill="none" stroke="#fcfcfd" stroke-width="7" stroke-linejoin="round" stroke-linecap="round" />
<polyline points="860.0,470.0 880.0,560.0 900.0,640.0 920.0,720.0 940.0,804.0" fill="none" stroke="#fcfcfd" stroke-width="7" stroke-linejoin="round" stroke-linecap="round" />
<polyline points="760.0,420.0 820.0,400.0 880.0,395.0 960.0,380.0 1052.0,370.0" fill="none" stroke="#fcfcfd" stroke-width="7" stroke-linejoin="round" stroke-linecap="round" />
<polyline points="887.0,472.0 945.0,442.0 1052.0,410.0" fill="none" stroke="#fcfcfd" stroke-width="7" stroke-linejoin="round" stroke-linecap="round" />
<polyline points="877.0,463.0 922.0,537.0 966.0,614.0 1000.0,680.0" fill="none" stroke="#fcfcfd" stroke-width="7" stroke-linejoin="round" stroke-linecap="round" />
<polyline points="820.0,572.0 922.0,538.0 1000.0,490.0 1052.0,460.0" fill="none" stroke="#fcfcfd" stroke-width="7" stroke-linejoin="round" stroke-linecap="round" />
<polyline points="820.0,597.0 911.0,591.0 960.0,580.0" fill="none" stroke="#fcfcfd" stroke-width="7" stroke-linejoin="round" stroke-linecap="round" />
<polyline points="930.0,540.0 990.0,480.0 1052.0,420.0" fill="none" stroke="#fcfcfd" stroke-width="7" stroke-linejoin="round" stroke-linecap="round" />
<polyline points="770.0,640.0 760.0,700.0 750.0,760.0 745.0,804.0" fill="none" stroke="#fcfcfd" stroke-width="7" stroke-linejoin="round" stroke-linecap="round" />
<polyline points="346.0,273.0 380.0,264.0 433.0,267.0 480.0,249.0 503.0,218.0" fill="none" stroke="#fcfcfd" stroke-width="7" stroke-linejoin="round" stroke-linecap="round" />
<polyline points="585.0,300.0 600.0,380.0 620.0,460.0 640.0,540.0 660.0,600.0" fill="none" stroke="#d6d9de" stroke-width="4" stroke-linejoin="round" stroke-linecap="round" />
<polyline points="700.0,464.0 746.0,457.0 791.0,444.0 810.0,428.0 811.0,409.0 799.0,376.0 797.0,340.0" fill="none" stroke="#d6d9de" stroke-width="4" stroke-linejoin="round" stroke-linecap="round" />
<polyline points="810.0,430.0 855.0,430.0 900.0,431.0 960.0,420.0 1052.0,405.0" fill="none" stroke="#d6d9de" stroke-width="4" stroke-linejoin="round" stroke-linecap="round" />
<polyline points="720.0,600.0 780.0,640.0 830.0,700.0 860.0,760.0 880.0,804.0" fill="none" stroke="#d6d9de" stroke-width="4" stroke-linejoin="round" stroke-linecap="round" />
<polyline points="731.0,640.0 787.0,711.0 825.0,804.0" fill="none" stroke="#d6d9de" stroke-width="4" stroke-linejoin="round" stroke-linecap="round" />
<polyline points="600.0,756.0 731.0,702.0 787.0,674.0" fill="none" stroke="#d6d9de" stroke-width="4" stroke-linejoin="round" stroke-linecap="round" />
<polyline points="367.0,587.0 363.0,614.0 381.0,628.0 422.0,642.0 443.0,680.0 460.0,726.0 492.0,804.0" fill="none" stroke="#d6d9de" stroke-width="4" stroke-linejoin="round" stroke-linecap="round" />
<polyline points="499.0,646.0 540.0,700.0 589.0,804.0" fill="none" stroke="#d6d9de" stroke-width="4" stroke-linejoin="round" stroke-linecap="round" />
<polyline points="540.0,614.0 600.0,700.0 693.0,802.0" fill="none" stroke="#d6d9de" stroke-width="4" stroke-linejoin="round" stroke-linecap="round" />
<polyline points="443.0,694.0 550.0,670.0 700.0,646.0" fill="none" stroke="#d6d9de" stroke-width="4" stroke-linejoin="round" stroke-linecap="round" />
<polyline points="860.0,470.0 880.0,560.0 900.0,640.0 920.0,720.0 940.0,804.0" fill="none" stroke="#d6d9de" stroke-width="4" stroke-linejoin="round" stroke-linecap="round" />
<polyline points="760.0,420.0 820.0,400.0 880.0,395.0 960.0,380.0 1052.0,370.0" fill="none" stroke="#d6d9de" stroke-width="4" stroke-linejoin="round" stroke-linecap="round" />
<polyline points="887.0,472.0 945.0,442.0 1052.0,410.0" fill="none" stroke="#d6d9de" stroke-width="4" stroke-linejoin="round" stroke-linecap="round" />
<polyline points="877.0,463.0 922.0,537.0 966.0,614.0 1000.0,680.0" fill="none" stroke="#d6d9de" stroke-width="4" stroke-linejoin="round" stroke-linecap="round" />
<polyline points="820.0,572.0 922.0,538.0 1000.0,490.0 1052.0,460.0" fill="none" stroke="#d6d9de" stroke-width="4" stroke-linejoin="round" stroke-linecap="round" />
<polyline points="820.0,597.0 911.0,591.0 960.0,580.0" fill="none" stroke="#d6d9de" stroke-width="4" stroke-linejoin="round" stroke-linecap="round" />
<polyline points="930.0,540.0 990.0,480.0 1052.0,420.0" fill="none" stroke="#d6d9de" stroke-width="4" stroke-linejoin="round" stroke-linecap="round" />
<polyline points="770.0,640.0 760.0,700.0 750.0,760.0 745.0,804.0" fill="none" stroke="#d6d9de" stroke-width="4" stroke-linejoin="round" stroke-linecap="round" />
<polyline points="346.0,273.0 380.0,264.0 433.0,267.0 480.0,249.0 503.0,218.0" fill="none" stroke="#d6d9de" stroke-width="4" stroke-linejoin="round" stroke-linecap="round" />
<polyline points="669.0,218.0 674.0,244.0 667.0,269.0 658.0,295.0 665.0,321.0 684.0,341.0 700.0,362.0 718.0,400.0 731.0,410.0 755.0,413.0 773.0,424.0 795.0,442.0 813.0,453.0 822.0,459.0 843.0,465.0 866.0,474.0 880.0,490.0 888.0,510.0" fill="none" stroke="#a9d6ef" stroke-width="7" stroke-linejoin="round" stroke-linecap="round" />
<path d="M878,510 C891,514 898,528 898,545 C898,560 892,572 882,576 C873,571 863,557 861,545 C860,532 867,516 878,510 Z" fill="#a9d6ef"/>
<ellipse cx="879" cy="541" rx="5.5" ry="8" fill="#d3efdb"/>
<polyline points="880.0,568.0 886.0,600.0 896.0,624.0 905.0,667.0 917.0,712.0 923.0,740.0" fill="none" stroke="#a9d6ef" stroke-width="9" stroke-linejoin="round" stroke-linecap="round" />
<polyline points="896.0,512.0 902.0,545.0 898.0,570.0" fill="none" stroke="#b5dcf0" stroke-width="2" stroke-linejoin="round" stroke-linecap="round" />
<polyline points="904.0,605.0 916.0,640.0" fill="none" stroke="#b5dcf0" stroke-width="2" stroke-linejoin="round" stroke-linecap="round" />
<polyline points="795.0,442.0 799.0,459.0 810.0,471.0 828.0,471.0 840.0,468.0" fill="none" stroke="#a9d6ef" stroke-width="5" stroke-linejoin="round" stroke-linecap="round" />
<polyline points="917.0,712.0 920.0,736.0 938.0,740.0 968.0,748.0 998.0,762.0 1016.0,778.0 1022.0,805.0" fill="none" stroke="#a9d6ef" stroke-width="6" stroke-linejoin="round" stroke-linecap="round" />
<polyline points="886.0,765.0 915.0,790.0 935.0,804.0" fill="none" stroke="#b5dcf0" stroke-width="2.5" stroke-linejoin="round" stroke-linecap="round" />
<polyline points="346.0,287.0 361.0,273.0" fill="none" stroke="#a9d6ef" stroke-width="7" stroke-linejoin="round" stroke-linecap="round" />
<polyline points="361.0,269.0 402.0,256.0 432.0,259.0 456.0,249.0 462.0,238.0 476.0,228.0" fill="none" stroke="#a9d6ef" stroke-width="2" stroke-linejoin="round" stroke-linecap="round" />
<polygon points="466.0,234.0 486.0,218.0 497.0,221.0 478.0,246.0 466.0,244.0" fill="#a9d6ef" />
<polyline points="370.0,237.0 380.0,249.0" fill="none" stroke="#a9d6ef" stroke-width="4" stroke-linejoin="round" stroke-linecap="round" />
<polyline points="656.0,218.0 657.0,269.0 633.0,287.0 628.0,338.0" fill="none" stroke="#b5dcf0" stroke-width="1.6" stroke-linejoin="round" stroke-linecap="round" />
<polyline points="700.0,424.0 718.0,439.0 736.0,446.0 755.0,451.0 764.0,459.0 773.0,486.0 779.0,500.0 784.0,540.0" fill="none" stroke="#b5dcf0" stroke-width="1.8" stroke-linejoin="round" stroke-linecap="round" />
<polyline points="797.0,446.0 802.0,468.0 813.0,500.0" fill="none" stroke="#b5dcf0" stroke-width="1.6" stroke-linejoin="round" stroke-linecap="round" />
<polyline points="880.0,560.0 900.0,610.0 905.0,680.0" fill="none" stroke="#b5dcf0" stroke-width="1.6" stroke-linejoin="round" stroke-linecap="round" />
<polyline points="945.0,760.0 970.0,790.0 1000.0,804.0" fill="none" stroke="#b5dcf0" stroke-width="1.6" stroke-linejoin="round" stroke-linecap="round" />
<polyline points="855.0,290.0 870.0,270.0" fill="none" stroke="#b5dcf0" stroke-width="1.6" stroke-linejoin="round" stroke-linecap="round" />
<polyline points="905.0,263.0 958.0,273.0 968.0,250.0 958.0,238.0" fill="none" stroke="#b5dcf0" stroke-width="1.6" stroke-linejoin="round" stroke-linecap="round" />
<polyline points="1003.0,233.0 1013.0,232.0" fill="none" stroke="#b5dcf0" stroke-width="1.6" stroke-linejoin="round" stroke-linecap="round" />
<polygon points="418.0,330.0 462.0,318.0 469.0,345.0 430.0,357.0" fill="#e4f3f5" stroke="#a9d3e6" stroke-width="1.2"/>
<polyline points="424.8,328.6 431.8,353.6" fill="none" stroke="#a9d3e6" stroke-width="1.1" stroke-linejoin="round" stroke-linecap="round" />
<polyline points="433.6,326.2 440.6,351.2" fill="none" stroke="#a9d3e6" stroke-width="1.1" stroke-linejoin="round" stroke-linecap="round" />
<polyline points="442.4,323.8 449.4,348.8" fill="none" stroke="#a9d3e6" stroke-width="1.1" stroke-linejoin="round" stroke-linecap="round" />
<polyline points="451.2,321.4 458.2,346.4" fill="none" stroke="#a9d3e6" stroke-width="1.1" stroke-linejoin="round" stroke-linecap="round" />
<polyline points="460.0,319.0 467.0,344.0" fill="none" stroke="#a9d3e6" stroke-width="1.1" stroke-linejoin="round" stroke-linecap="round" />
<polyline points="462.0,318.0 470.0,316.0 476.0,340.0 469.0,345.0" fill="none" stroke="#c3dfe6" stroke-width="1.2" stroke-linejoin="round" stroke-linecap="round" />
<polyline points="340.0,448.0 392.0,418.0 423.0,399.0 466.0,360.0 493.0,329.0 530.0,321.0 556.0,316.0 581.0,300.0 610.0,266.0 629.0,235.0 633.0,215.0" fill="none" stroke="#8293bd" stroke-width="7.5" stroke-linejoin="round" stroke-linecap="round" />
<polyline points="340.0,448.0 392.0,418.0 423.0,399.0 466.0,360.0 493.0,329.0 530.0,321.0 556.0,316.0 581.0,300.0 610.0,266.0 629.0,235.0 633.0,215.0" fill="none" stroke="#9dabcc" stroke-width="4.5" stroke-linejoin="round" stroke-linecap="round" />
<polyline points="390.0,428.0 396.0,456.0" fill="none" stroke="#8293bd" stroke-width="6" stroke-linejoin="round" stroke-linecap="round" />
<polyline points="390.0,428.0 396.0,456.0" fill="none" stroke="#9dabcc" stroke-width="3.5" stroke-linejoin="round" stroke-linecap="round" />
<polyline points="779.0,808.0 798.0,760.0 819.0,745.0 843.0,722.0 862.0,711.0 880.0,712.0 904.0,697.0 944.0,667.0 984.0,651.0 1001.0,633.0 1021.0,629.0 1056.0,627.0" fill="none" stroke="#8293bd" stroke-width="7" stroke-linejoin="round" stroke-linecap="round" />
<polyline points="779.0,808.0 798.0,760.0 819.0,745.0 843.0,722.0 862.0,711.0 880.0,712.0 904.0,697.0 944.0,667.0 984.0,651.0 1001.0,633.0 1021.0,629.0 1056.0,627.0" fill="none" stroke="#9dabcc" stroke-width="4.2" stroke-linejoin="round" stroke-linecap="round" />
<polyline points="1040.0,745.0 1052.0,775.0" fill="none" stroke="#8293bd" stroke-width="5" stroke-linejoin="round" stroke-linecap="round" />
<polyline points="1040.0,745.0 1052.0,775.0" fill="none" stroke="#9dabcc" stroke-width="3" stroke-linejoin="round" stroke-linecap="round" />
<text x="566" y="357" font-size="16" letter-spacing="0.1" text-anchor="start"  fill="#fff" stroke="#fff" stroke-width="3.2" stroke-linejoin="round">Maxéville</text>
<text x="566" y="357" font-size="16" letter-spacing="0.1" text-anchor="start"  fill="#333" stroke="#333" stroke-width="0.55">Maxéville</text>
<text x="692" y="388" font-size="16" letter-spacing="0.3" text-anchor="start"  fill="#fff" stroke="#fff" stroke-width="3.2" stroke-linejoin="round">Malzéville</text>
<text x="692" y="388" font-size="16" letter-spacing="0.3" text-anchor="start"  fill="#333" stroke="#333" stroke-width="0.55">Malzéville</text>
<text x="889" y="339" font-size="16.5" letter-spacing="0.4" text-anchor="start"  fill="#fff" stroke="#fff" stroke-width="3.2" stroke-linejoin="round">Dommartemont</text>
<text x="889" y="339" font-size="16.5" letter-spacing="0.4" text-anchor="start"  fill="#333" stroke="#333" stroke-width="0.55">Dommartemont</text>
<text x="851" y="417" font-size="16" letter-spacing="0.3" text-anchor="start"  fill="#fff" stroke="#fff" stroke-width="3.2" stroke-linejoin="round">Saint-Max</text>
<text x="851" y="417" font-size="16" letter-spacing="0.3" text-anchor="start"  fill="#333" stroke="#333" stroke-width="0.55">Saint-Max</text>
<text x="1023" y="391" font-size="16" letter-spacing="0.3" text-anchor="start"  fill="#fff" stroke="#fff" stroke-width="3.2" stroke-linejoin="round">Esse</text>
<text x="1023" y="391" font-size="16" letter-spacing="0.3" text-anchor="start"  fill="#333" stroke="#333" stroke-width="0.55">Esse</text>
<text x="999" y="276" font-size="13" letter-spacing="0" text-anchor="start"  fill="#fff" stroke="#fff" stroke-width="3.2" stroke-linejoin="round">Ch</text>
<text x="999" y="276" font-size="13" letter-spacing="0" text-anchor="start"  fill="#333" stroke="#333" stroke-width="0.4">Ch</text>
<text x="387" y="476" font-size="13" letter-spacing="1.0" text-anchor="start"  fill="#fff" stroke="#fff" stroke-width="3.2" stroke-linejoin="round">HAUT-DU-LIÈVRE</text>
<text x="387" y="476" font-size="13" letter-spacing="1.0" text-anchor="start"  fill="#444" stroke="#444" stroke-width="0.4">HAUT-DU-LIÈVRE</text>
<text x="553" y="492" font-size="13" letter-spacing="1.3" text-anchor="middle"  fill="#fff" stroke="#fff" stroke-width="3.2" stroke-linejoin="round">BOUDONVILLE</text>
<text x="553" y="492" font-size="13" letter-spacing="1.3" text-anchor="middle"  fill="#444" stroke="#444" stroke-width="0.4">BOUDONVILLE</text>
<text x="553" y="505" font-size="13" letter-spacing="1.3" text-anchor="middle"  fill="#fff" stroke="#fff" stroke-width="3.2" stroke-linejoin="round">- SCARPONE</text>
<text x="553" y="505" font-size="13" letter-spacing="1.3" text-anchor="middle"  fill="#444" stroke="#444" stroke-width="0.4">- SCARPONE</text>
<text x="553" y="518" font-size="13" letter-spacing="1.3" text-anchor="middle"  fill="#fff" stroke="#fff" stroke-width="3.2" stroke-linejoin="round">- LIBÉRATION</text>
<text x="553" y="518" font-size="13" letter-spacing="1.3" text-anchor="middle"  fill="#444" stroke="#444" stroke-width="0.4">- LIBÉRATION</text>
<text x="808" y="515" font-size="13" letter-spacing="1.3" text-anchor="middle"  fill="#fff" stroke="#fff" stroke-width="3.2" stroke-linejoin="round">RIVES DE</text>
<text x="808" y="515" font-size="13" letter-spacing="1.3" text-anchor="middle"  fill="#444" stroke="#444" stroke-width="0.4">RIVES DE</text>
<text x="808" y="528" font-size="13" letter-spacing="1.3" text-anchor="middle"  fill="#fff" stroke="#fff" stroke-width="3.2" stroke-linejoin="round">MEURTHE</text>
<text x="808" y="528" font-size="13" letter-spacing="1.3" text-anchor="middle"  fill="#444" stroke="#444" stroke-width="0.4">MEURTHE</text>
<text x="570" y="368" font-size="13" letter-spacing="0.2" text-anchor="start" transform="rotate(70 570 368)"  fill="#fff" stroke="#fff" stroke-width="3.2" stroke-linejoin="round">Bd de Scarpone</text>
<text x="570" y="368" font-size="13" letter-spacing="0.2" text-anchor="start" transform="rotate(70 570 368)"  fill="#444" stroke="#444" stroke-width="0.4">Bd de Scarpone</text>
<text x="889" y="470" font-size="13" letter-spacing="0.2" text-anchor="start" transform="rotate(-28 889 470)"  fill="#fff" stroke="#fff" stroke-width="3.2" stroke-linejoin="round">Av. Carnot</text>
<text x="889" y="470" font-size="13" letter-spacing="0.2" text-anchor="start" transform="rotate(-28 889 470)"  fill="#444" stroke="#444" stroke-width="0.4">Av. Carnot</text>
<text x="930" y="541" font-size="12.5" letter-spacing="0" text-anchor="start" transform="rotate(-41 930 541)"  fill="#fff" stroke="#fff" stroke-width="3.2" stroke-linejoin="round">Rue de la Fraternité</text>
<text x="930" y="541" font-size="12.5" letter-spacing="0" text-anchor="start" transform="rotate(-41 930 541)"  fill="#444" stroke="#444" stroke-width="0.4">Rue de la Fraternité</text>
<text x="1024" y="457" font-size="12.5" letter-spacing="0" text-anchor="start" transform="rotate(-41 1024 457)"  fill="#fff" stroke="#fff" stroke-width="3.2" stroke-linejoin="round">Av. de B</text>
<text x="1024" y="457" font-size="12.5" letter-spacing="0" text-anchor="start" transform="rotate(-41 1024 457)"  fill="#444" stroke="#444" stroke-width="0.4">Av. de B</text>
<text x="500" y="557" font-size="13" letter-spacing="0.2" text-anchor="start" transform="rotate(21 500 557)"  fill="#fff" stroke="#fff" stroke-width="3.2" stroke-linejoin="round">Av. de Boufflers</text>
<text x="500" y="557" font-size="13" letter-spacing="0.2" text-anchor="start" transform="rotate(21 500 557)"  fill="#444" stroke="#444" stroke-width="0.4">Av. de Boufflers</text>
<path id="qv" d="M386,585 C360,545 355,520 375,505 S400,488 412,484" fill="none"/>
<text font-size="13" letter-spacing=".2" fill="#fff" stroke="#fff" stroke-width="3.2" stroke-linejoin="round"><textPath href="#qv">Av. des Quatre Vents</textPath></text>
<text font-size="13" letter-spacing=".2" fill="#444" stroke="#444" stroke-width=".2"><textPath href="#qv">Av. des Quatre Vents</textPath></text>
<text x="490" y="641" font-size="16" letter-spacing="0.3" text-anchor="start"  fill="#fff" stroke="#fff" stroke-width="3.2" stroke-linejoin="round">Laxou</text>
<text x="490" y="641" font-size="16" letter-spacing="0.3" text-anchor="start"  fill="#333" stroke="#333" stroke-width="0.55">Laxou</text>
<text x="364" y="713" font-size="13" letter-spacing="1.15" text-anchor="start"  fill="#fff" stroke="#fff" stroke-width="3.2" stroke-linejoin="round">MARÉVILLE</text>
<text x="364" y="713" font-size="13" letter-spacing="1.15" text-anchor="start"  fill="#444" stroke="#444" stroke-width="0.4">MARÉVILLE</text>
<text x="458" y="757" font-size="16" letter-spacing="0.45" text-anchor="start"  fill="#fff" stroke="#fff" stroke-width="3.2" stroke-linejoin="round">Villers-lès-Nancy</text>
<text x="458" y="757" font-size="16" letter-spacing="0.45" text-anchor="start"  fill="#333" stroke="#333" stroke-width="0.55">Villers-lès-Nancy</text>
<text x="645" y="649" font-size="13" letter-spacing="1.5" text-anchor="middle"  fill="#fff" stroke="#fff" stroke-width="3.2" stroke-linejoin="round">HAUSSONVILLE</text>
<text x="645" y="649" font-size="13" letter-spacing="1.5" text-anchor="middle"  fill="#444" stroke="#444" stroke-width="0.4">HAUSSONVILLE</text>
<text x="645" y="662" font-size="13" letter-spacing="1.5" text-anchor="middle"  fill="#fff" stroke="#fff" stroke-width="3.2" stroke-linejoin="round">- BLANDAN -</text>
<text x="645" y="662" font-size="13" letter-spacing="1.5" text-anchor="middle"  fill="#444" stroke="#444" stroke-width="0.4">- BLANDAN -</text>
<text x="650" y="675" font-size="13" letter-spacing="1.5" text-anchor="middle"  fill="#fff" stroke="#fff" stroke-width="3.2" stroke-linejoin="round">DONOP</text>
<text x="650" y="675" font-size="13" letter-spacing="1.5" text-anchor="middle"  fill="#444" stroke="#444" stroke-width="0.4">DONOP</text>
<text x="672" y="697" font-size="13" letter-spacing="0.9" text-anchor="start"  fill="#fff" stroke="#fff" stroke-width="3.2" stroke-linejoin="round">SAURUPT</text>
<text x="672" y="697" font-size="13" letter-spacing="0.9" text-anchor="start"  fill="#444" stroke="#444" stroke-width="0.4">SAURUPT</text>
<text x="835" y="676" font-size="13" letter-spacing="1.5" text-anchor="middle"  fill="#fff" stroke="#fff" stroke-width="3.2" stroke-linejoin="round">SAINT-PIERRE</text>
<text x="835" y="676" font-size="13" letter-spacing="1.5" text-anchor="middle"  fill="#444" stroke="#444" stroke-width="0.4">SAINT-PIERRE</text>
<text x="834" y="689" font-size="13" letter-spacing="1.5" text-anchor="middle"  fill="#fff" stroke="#fff" stroke-width="3.2" stroke-linejoin="round">- RENÉ II -</text>
<text x="834" y="689" font-size="13" letter-spacing="1.5" text-anchor="middle"  fill="#444" stroke="#444" stroke-width="0.4">- RENÉ II -</text>
<text x="835" y="702" font-size="13" letter-spacing="1.5" text-anchor="middle"  fill="#fff" stroke="#fff" stroke-width="3.2" stroke-linejoin="round">MARCEL BROT</text>
<text x="835" y="702" font-size="13" letter-spacing="1.5" text-anchor="middle"  fill="#444" stroke="#444" stroke-width="0.4">MARCEL BROT</text>
<text x="776" y="746" font-size="16" letter-spacing="0.55" text-anchor="start"  fill="#fff" stroke="#fff" stroke-width="3.2" stroke-linejoin="round">Jarville-la-Malgrange</text>
<text x="776" y="746" font-size="16" letter-spacing="0.55" text-anchor="start"  fill="#333" stroke="#333" stroke-width="0.55">Jarville-la-Malgrange</text>
<text x="952" y="649" font-size="16" letter-spacing="0.3" text-anchor="start"  fill="#fff" stroke="#fff" stroke-width="3.2" stroke-linejoin="round">Tomblaine</text>
<text x="952" y="649" font-size="16" letter-spacing="0.3" text-anchor="start"  fill="#333" stroke="#333" stroke-width="0.55">Tomblaine</text>
<text x="931" y="697" font-size="13" letter-spacing="1.5" text-anchor="start"  fill="#fff" stroke="#fff" stroke-width="3.2" stroke-linejoin="round">LES ENS.</text>
<text x="931" y="697" font-size="13" letter-spacing="1.5" text-anchor="start"  fill="#444" stroke="#444" stroke-width="0.4">LES ENS.</text>
<text x="966" y="747" font-size="13" letter-spacing="0.6" text-anchor="start" transform="rotate(39 966 747)"  fill="#fff" stroke="#fff" stroke-width="3.2" stroke-linejoin="round">La Meurthe</text>
<text x="966" y="747" font-size="13" letter-spacing="0.6" text-anchor="start" transform="rotate(39 966 747)"  fill="#4d7497" stroke="#4d7497" stroke-width="0.4">La Meurthe</text>
<text x="712" y="560" font-size="19" letter-spacing="0" text-anchor="start"  fill="#fff" stroke="#fff" stroke-width="3.2" stroke-linejoin="round">Nancy</text>
<text x="712" y="560" font-size="19" letter-spacing="0" text-anchor="start"  fill="#222" stroke="#222" stroke-width="0.55">Nancy</text>
<rect x="702" y="242" width="27" height="14" rx="1.5" fill="#f9d65a" stroke="#e7c04a" stroke-width="1"/>
<text x="715.5" y="253" font-size="10.9" fill="#333" text-anchor="middle" letter-spacing="-.2">D32</text>
<rect x="721" y="331" width="26" height="13" rx="1.5" fill="#f9d65a" stroke="#e7c04a" stroke-width="1"/>
<text x="734.0" y="341" font-size="10.1" fill="#333" text-anchor="middle" letter-spacing="-.2">D32</text>
<rect x="628" y="443" width="33" height="14" rx="1.5" fill="#f9d65a" stroke="#e7c04a" stroke-width="1"/>
<text x="644.5" y="454" font-size="10.9" fill="#333" text-anchor="middle" letter-spacing="-.2">D657</text>
<rect x="820" y="442" width="35" height="14" rx="1.5" fill="#f9d65a" stroke="#e7c04a" stroke-width="1"/>
<text x="837.5" y="453" font-size="10.9" fill="#333" text-anchor="middle" letter-spacing="-.2">D32A</text>
<rect x="1003" y="408" width="39" height="14" rx="1.5" fill="#f9d65a" stroke="#e7c04a" stroke-width="1"/>
<text x="1022.5" y="419" font-size="10.9" fill="#333" text-anchor="middle" letter-spacing="-.2">D2074</text>
<rect x="432" y="502" width="33" height="13" rx="1.5" fill="#f9d65a" stroke="#e7c04a" stroke-width="1"/>
<text x="448.5" y="512" font-size="10.1" fill="#333" text-anchor="middle" letter-spacing="-.2">D400</text>
<rect x="461" y="655" width="27" height="15" rx="1.5" fill="#f9d65a" stroke="#e7c04a" stroke-width="1"/>
<text x="474.5" y="667" font-size="11.7" fill="#333" text-anchor="middle" letter-spacing="-.2">D39</text>
<rect x="549" y="692" width="28" height="14" rx="1.5" fill="#f9d65a" stroke="#e7c04a" stroke-width="1"/>
<text x="563.0" y="703" font-size="10.9" fill="#333" text-anchor="middle" letter-spacing="-.2">D92</text>
<rect x="937" y="577" width="31" height="13" rx="1.5" fill="#f9d65a" stroke="#e7c04a" stroke-width="1"/>
<text x="952.5" y="587" font-size="10.1" fill="#333" text-anchor="middle" letter-spacing="-.2">D220</text>
<rect x="1020" y="620" width="35" height="12" rx="1.5" fill="#4f80d6" stroke="#3e6fc4" stroke-width="1"/>
<text x="1037.5" y="629" font-size="9.4" fill="#fff" text-anchor="middle" letter-spacing="-.2">M674</text>
<rect x="857" y="757" width="32" height="12" rx="1.5" fill="#f9d65a" stroke="#e7c04a" stroke-width="1"/>
<text x="873.0" y="766" font-size="9.4" fill="#333" text-anchor="middle" letter-spacing="-.2">D400</text>
<rect x="852" y="780" width="16" height="18" rx="4" fill="#5b6b7d" stroke="#fff" stroke-width="1.2"/><rect x="855.5" y="783" width="9" height="9" rx="2" fill="#fff"/><rect x="856.5" y="784.5" width="7" height="3" fill="#5b6b7d"/><circle cx="857.5" cy="790" r=".9" fill="#5b6b7d"/><circle cx="862.5" cy="790" r=".9" fill="#5b6b7d"/>
<polyline points="632.0,418.0 642.0,450.0 603.0,471.0 616.0,509.0 616.0,523.0" fill="none" stroke="#9a80ec" stroke-width="3" stroke-linejoin="round" stroke-linecap="round" />
<polyline points="641.0,425.0 671.0,439.0" fill="none" stroke="#9a80ec" stroke-width="3" stroke-linejoin="round" stroke-linecap="round" />
<polyline points="681.0,459.0 669.0,490.0 683.0,520.0 690.0,545.0" fill="none" stroke="#9a80ec" stroke-width="3" stroke-linejoin="round" stroke-linecap="round" />
<polyline points="610.0,600.0 613.0,625.0 626.0,628.0 630.0,612.0" fill="none" stroke="#9a80ec" stroke-width="3" stroke-linejoin="round" stroke-linecap="round" />
<polyline points="670.0,580.0 682.0,585.0 672.0,595.0" fill="none" stroke="#9a80ec" stroke-width="3" stroke-linejoin="round" stroke-linecap="round" />
<polyline points="651.0,600.0 645.0,625.0 648.0,640.0" fill="none" stroke="#3fae7f" stroke-width="3" stroke-linejoin="round" stroke-linecap="round" />
<polyline points="667.0,640.0 696.0,631.0 731.0,611.0" fill="none" stroke="#3fae7f" stroke-width="2.5" stroke-linejoin="round" stroke-linecap="round" />
<polyline points="607.0,664.0 607.0,673.0 618.0,671.0" fill="none" stroke="#4a6ee0" stroke-width="3" stroke-linejoin="round" stroke-linecap="round" />
<polyline points="612.0,667.0 630.0,660.0 654.0,655.0 668.0,667.0 700.0,651.0 696.0,633.0 684.0,622.0 674.0,627.0" fill="none" stroke="#4a6ee0" stroke-width="3" stroke-linejoin="round" stroke-linecap="round" />
<polyline points="630.0,656.0 644.0,647.0 662.0,645.0 668.0,667.0" fill="none" stroke="#4a6ee0" stroke-width="3" stroke-linejoin="round" stroke-linecap="round" />
<polyline points="700.0,630.0 731.0,614.0 751.0,623.0 760.0,630.0 790.0,657.0 823.0,692.0 835.0,685.0" fill="none" stroke="#4a6ee0" stroke-width="3" stroke-linejoin="round" stroke-linecap="round" />
<polyline points="703.0,600.0 712.0,618.0 725.0,612.0 717.0,600.0" fill="none" stroke="#4a6ee0" stroke-width="3" stroke-linejoin="round" stroke-linecap="round" />
<polyline points="690.0,579.0 700.0,596.0 712.0,617.0" fill="none" stroke="#4a6ee0" stroke-width="3" stroke-linejoin="round" stroke-linecap="round" />
<polyline points="690.0,622.0 729.0,610.0 762.0,596.0 796.0,581.0" fill="none" stroke="#4a6ee0" stroke-width="3" stroke-linejoin="round" stroke-linecap="round" />
<polyline points="746.0,620.0 772.0,640.0" fill="none" stroke="#4a6ee0" stroke-width="3" stroke-linejoin="round" stroke-linecap="round" />
<polyline points="813.0,621.0 818.0,648.0" fill="none" stroke="#4a6ee0" stroke-width="3" stroke-linejoin="round" stroke-linecap="round" />
<polyline points="761.0,565.0 783.0,560.0" fill="none" stroke="#d447cf" stroke-width="3" stroke-linejoin="round" stroke-linecap="round" />
<polyline points="762.0,605.0 796.0,617.0 810.0,620.0" fill="none" stroke="#d447cf" stroke-width="3" stroke-linejoin="round" stroke-linecap="round" />
<path d="M654,426 C651,420 640.5,415 640.5,403 A13.5,13.5 0 1 1 667.5,403 C667.5,415 657,420 654,426 Z" fill="#9a80ec" stroke="#1f1a3d" stroke-width="1.4"/>
<text x="654" y="414.5" font-size="17.5" font-weight="700" fill="#fff" text-anchor="middle" letter-spacing="-.5">1</text>
<path d="M640.5,424 C637.5,418 627.0,413 627.0,401 A13.5,13.5 0 1 1 654.0,401 C654.0,413 643.5,418 640.5,424 Z" fill="#9a80ec" stroke="#1f1a3d" stroke-width="1.4"/>
<text x="640.5" y="412.5" font-size="17.5" font-weight="700" fill="#fff" text-anchor="middle" letter-spacing="-.5">2</text>
<path d="M632,419 C629,413 618.5,408 618.5,396 A13.5,13.5 0 1 1 645.5,396 C645.5,408 635,413 632,419 Z" fill="#9a80ec" stroke="#1f1a3d" stroke-width="1.4"/>
<path d="M626,405 L632,402 L638,405 L632,408 Z" fill="#9a80ec" stroke="#fff" stroke-width="1.1"/><path d="M626,402 L632,399 L638,402 L632,405 Z" fill="#9a80ec" stroke="#fff" stroke-width="1.1"/><path d="M626,399 L632,396 L638,399 L632,402 Z" fill="#9a80ec" stroke="#fff" stroke-width="1.1"/>
<circle cx="643" cy="387" r="9" fill="#df5a50"/><text x="643" y="392" font-size="14" font-weight="700" fill="#fff" text-anchor="middle">2</text>
<path d="M685,459 C682,453 671.5,448 671.5,436 A13.5,13.5 0 1 1 698.5,436 C698.5,448 688,453 685,459 Z" fill="#9a80ec" stroke="#1f1a3d" stroke-width="1.4"/>
<text x="685" y="447.5" font-size="17.5" font-weight="700" fill="#fff" text-anchor="middle" letter-spacing="-.5">20</text>
<path d="M617,549 C614,542 604,535 604,522 A13,13 0 1 1 630,522 C630,535 620,542 617,549 Z" fill="#9a80ec"/>
<circle cx="617" cy="523.3" r="9.6" fill="#fff"/><rect x="611.5" y="519" width="11" height="3.2" rx="1.3" fill="#9a80ec"/><rect x="611" y="522.6" width="12" height="3.8" fill="#9a80ec"/><rect x="612.3" y="523.5" width="4.2" height="1.8" fill="#d8ccf8"/><rect x="617.6" y="523.5" width="4.2" height="1.8" fill="#d8ccf8"/>
<path d="M652,568 C649,562 638.5,557 638.5,545 A13.5,13.5 0 1 1 665.5,545 C665.5,557 655,562 652,568 Z" fill="#3fae7f" stroke="#1f1a3d" stroke-width="1.4"/>
<text x="652" y="556.5" font-size="17.5" font-weight="700" fill="#fff" text-anchor="middle" letter-spacing="-.5">8</text>
<path d="M680,556 C677,550 666.5,545 666.5,533 A13.5,13.5 0 1 1 693.5,533 C693.5,545 683,550 680,556 Z" fill="#9a80ec" stroke="#1f1a3d" stroke-width="1.4"/>
<path d="M618,622 C615,616 604.5,611 604.5,599 A13.5,13.5 0 1 1 631.5,599 C631.5,611 621,616 618,622 Z" fill="#9a80ec" stroke="#1f1a3d" stroke-width="1.4"/>
<path d="M619,619 C616,613 605.5,608 605.5,596 A13.5,13.5 0 1 1 632.5,596 C632.5,608 622,613 619,619 Z" fill="#9a80ec" stroke="#1f1a3d" stroke-width="1.4"/>
<path d="M620,616 C617,610 606.5,605 606.5,593 A13.5,13.5 0 1 1 633.5,593 C633.5,605 623,610 620,616 Z" fill="#9a80ec" stroke="#1f1a3d" stroke-width="1.4"/>
<path d="M673,560 C670,554 659.5,549 659.5,537 A13.5,13.5 0 1 1 686.5,537 C686.5,549 676,554 673,560 Z" fill="#9a80ec" stroke="#1f1a3d" stroke-width="1.4"/>
<text x="673" y="548.5" font-size="17.5" font-weight="700" fill="#fff" text-anchor="middle" letter-spacing="-.5">18</text>
<path d="M640,578 C637,572 626.5,567 626.5,555 A13.5,13.5 0 1 1 653.5,555 C653.5,567 643,572 640,578 Z" fill="#9a80ec" stroke="#1f1a3d" stroke-width="1.4"/>
<text x="640" y="566.5" font-size="17.5" font-weight="700" fill="#fff" text-anchor="middle" letter-spacing="-.5">8</text>
<path d="M605.7,591 C602.7,585 592.2,580 592.2,568 A13.5,13.5 0 1 1 619.2,568 C619.2,580 608.7,585 605.7,591 Z" fill="#9a80ec" stroke="#1f1a3d" stroke-width="1.4"/>
<path d="M599.7,577 L605.7,574 L611.7,577 L605.7,580 Z" fill="#9a80ec" stroke="#fff" stroke-width="1.1"/><path d="M599.7,574 L605.7,571 L611.7,574 L605.7,577 Z" fill="#9a80ec" stroke="#fff" stroke-width="1.1"/><path d="M599.7,571 L605.7,568 L611.7,571 L605.7,574 Z" fill="#9a80ec" stroke="#fff" stroke-width="1.1"/>
<circle cx="617.7" cy="559" r="9" fill="#df5a50"/><text x="617.7" y="564" font-size="14" font-weight="700" fill="#fff" text-anchor="middle">2</text>
<path d="M693,576 C690,570 679.5,565 679.5,553 A13.5,13.5 0 1 1 706.5,553 C706.5,565 696,570 693,576 Z" fill="#4a6ee0" stroke="#1f1a3d" stroke-width="1.4"/>
<text x="693" y="564.5" font-size="17.5" font-weight="700" fill="#fff" text-anchor="middle" letter-spacing="-.5">20</text>
<path d="M711,570 C708,564 697.5,559 697.5,547 A13.5,13.5 0 1 1 724.5,547 C724.5,559 714,564 711,570 Z" fill="#9a80ec" stroke="#1f1a3d" stroke-width="1.4"/>
<text x="711" y="558.5" font-size="17.5" font-weight="700" fill="#fff" text-anchor="middle" letter-spacing="-.5">19</text>
<path d="M657,598 C654,592 643.5,587 643.5,575 A13.5,13.5 0 1 1 670.5,575 C670.5,587 660,592 657,598 Z" fill="#9a80ec" stroke="#1f1a3d" stroke-width="1.4"/>
<path d="M650,594 C647,588 636.5,583 636.5,571 A13.5,13.5 0 1 1 663.5,571 C663.5,583 653,588 650,594 Z" fill="#9a80ec" stroke="#1f1a3d" stroke-width="1.4"/>
<path d="M644,580 L650,577 L656,580 L650,583 Z" fill="#9a80ec" stroke="#fff" stroke-width="1.1"/><path d="M644,577 L650,574 L656,577 L650,580 Z" fill="#9a80ec" stroke="#fff" stroke-width="1.1"/><path d="M644,574 L650,571 L656,574 L650,577 Z" fill="#9a80ec" stroke="#fff" stroke-width="1.1"/>
<circle cx="660.5" cy="562" r="9" fill="#df5a50"/><text x="660.5" y="567" font-size="14" font-weight="700" fill="#fff" text-anchor="middle">2</text>
<path d="M645,616 C642,610 631.5,605 631.5,593 A13.5,13.5 0 1 1 658.5,593 C658.5,605 648,610 645,616 Z" fill="#3fae7f" stroke="#1f1a3d" stroke-width="1.4"/>
<text x="645" y="604.5" font-size="17.5" font-weight="700" fill="#fff" text-anchor="middle" letter-spacing="-.5">1</text>
<path d="M621,613 C618,607 607.5,602 607.5,590 A13.5,13.5 0 1 1 634.5,590 C634.5,602 624,607 621,613 Z" fill="#9a80ec" stroke="#1f1a3d" stroke-width="1.4"/>
<path d="M615,599 L621,596 L627,599 L621,602 Z" fill="#9a80ec" stroke="#fff" stroke-width="1.1"/><path d="M615,596 L621,593 L627,596 L621,599 Z" fill="#9a80ec" stroke="#fff" stroke-width="1.1"/><path d="M615,593 L621,590 L627,593 L621,596 Z" fill="#9a80ec" stroke="#fff" stroke-width="1.1"/>
<circle cx="630.5" cy="580" r="9" fill="#df5a50"/><text x="630.5" y="585" font-size="14" font-weight="700" fill="#fff" text-anchor="middle">2</text>
<path d="M652,630 C649,624 638.5,619 638.5,607 A13.5,13.5 0 1 1 665.5,607 C665.5,619 655,624 652,630 Z" fill="#3fae7f" stroke="#1f1a3d" stroke-width="1.4"/>
<text x="652" y="618.5" font-size="17.5" font-weight="700" fill="#fff" text-anchor="middle" letter-spacing="-.5">14</text>
<path d="M661.5,645 C658.5,639 648.0,634 648.0,622 A13.5,13.5 0 1 1 675.0,622 C675.0,634 664.5,639 661.5,645 Z" fill="#4a6ee0" stroke="#1f1a3d" stroke-width="1.4"/>
<text x="661.5" y="633.5" font-size="17.5" font-weight="700" fill="#fff" text-anchor="middle" letter-spacing="-.5">1</text>
<polygon points="616.6,635.2 630.0,643.0 630.0,658.5 616.6,666.2 603.2,658.5 603.2,643.0" fill="#3359c9"/>
<path d="M616.6,659.7 C614.6,655.7 610.6,650.7 610.6,647.7 A6,6 0 1 1 622.6,647.7 C622.6,650.7 618.6,655.7 616.6,659.7 Z" fill="#c9d6f7"/><circle cx="616.6" cy="647.7" r="2.5" fill="#3359c9"/>
<path d="M715,541 C712,535 701.5,530 701.5,518 A13.5,13.5 0 1 1 728.5,518 C728.5,530 718,535 715,541 Z" fill="#d447cf" stroke="#1f1a3d" stroke-width="1.4"/>
<path d="M717,552 C714,546 703.5,541 703.5,529 A13.5,13.5 0 1 1 730.5,529 C730.5,541 720,546 717,552 Z" fill="#3fae7f" stroke="#1f1a3d" stroke-width="1.4"/>
<path d="M726,550 C723,544 712.5,539 712.5,527 A13.5,13.5 0 1 1 739.5,527 C739.5,539 729,544 726,550 Z" fill="#3fae7f" stroke="#1f1a3d" stroke-width="1.4"/>
<text x="726" y="538.5" font-size="17.5" font-weight="700" fill="#fff" text-anchor="middle" letter-spacing="-.5">1</text>
<path d="M733,554 C730,548 719.5,543 719.5,531 A13.5,13.5 0 1 1 746.5,531 C746.5,543 736,548 733,554 Z" fill="#3fae7f" stroke="#1f1a3d" stroke-width="1.4"/>
<path d="M727,540 L733,537 L739,540 L733,543 Z" fill="#3fae7f" stroke="#fff" stroke-width="1.1"/><path d="M727,537 L733,534 L739,537 L733,540 Z" fill="#3fae7f" stroke="#fff" stroke-width="1.1"/><path d="M727,534 L733,531 L739,534 L733,537 Z" fill="#3fae7f" stroke="#fff" stroke-width="1.1"/>
<circle cx="743" cy="526" r="9" fill="#df5a50"/><text x="743" y="531" font-size="14" font-weight="700" fill="#fff" text-anchor="middle">7</text>
<path d="M723,608 C720,602 709.5,597 709.5,585 A13.5,13.5 0 1 1 736.5,585 C736.5,597 726,602 723,608 Z" fill="#4a6ee0" stroke="#1f1a3d" stroke-width="1.4"/>
<path d="M722,596 C719,590 708.5,585 708.5,573 A13.5,13.5 0 1 1 735.5,573 C735.5,585 725,590 722,596 Z" fill="#4a6ee0" stroke="#1f1a3d" stroke-width="1.4"/>
<path d="M716,582 L722,579 L728,582 L722,585 Z" fill="#4a6ee0" stroke="#fff" stroke-width="1.1"/><path d="M716,579 L722,576 L728,579 L722,582 Z" fill="#4a6ee0" stroke="#fff" stroke-width="1.1"/><path d="M716,576 L722,573 L728,576 L722,579 Z" fill="#4a6ee0" stroke="#fff" stroke-width="1.1"/>
<circle cx="733.7" cy="563.6" r="9" fill="#df5a50"/><text x="733.7" y="568.6" font-size="14" font-weight="700" fill="#fff" text-anchor="middle">2</text>
<path d="M760,595 C757,589 746.5,584 746.5,572 A13.5,13.5 0 1 1 773.5,572 C773.5,584 763,589 760,595 Z" fill="#4a6ee0" stroke="#1f1a3d" stroke-width="1.4"/>
<text x="760" y="583.5" font-size="17.5" font-weight="700" fill="#fff" text-anchor="middle" letter-spacing="-.5">3</text>
<path d="M747,621 C744,615 733.5,610 733.5,598 A13.5,13.5 0 1 1 760.5,598 C760.5,610 750,615 747,621 Z" fill="#4a6ee0" stroke="#1f1a3d" stroke-width="1.4"/>
<path d="M741,607 L747,604 L753,607 L747,610 Z" fill="#4a6ee0" stroke="#fff" stroke-width="1.1"/><path d="M741,604 L747,601 L753,604 L747,607 Z" fill="#4a6ee0" stroke="#fff" stroke-width="1.1"/><path d="M741,601 L747,598 L753,601 L747,604 Z" fill="#4a6ee0" stroke="#fff" stroke-width="1.1"/>
<circle cx="757.6" cy="587.6" r="9" fill="#df5a50"/><text x="757.6" y="592.6" font-size="14" font-weight="700" fill="#fff" text-anchor="middle">3</text>
<path d="M793,565 C790,559 779.5,554 779.5,542 A13.5,13.5 0 1 1 806.5,542 C806.5,554 796,559 793,565 Z" fill="#d447cf" stroke="#1f1a3d" stroke-width="1.4"/>
<path d="M810,575 C807,569 796.5,564 796.5,552 A13.5,13.5 0 1 1 823.5,552 C823.5,564 813,569 810,575 Z" fill="#4a6ee0" stroke="#1f1a3d" stroke-width="1.4"/>
<path d="M797,575 C794,569 783.5,564 783.5,552 A13.5,13.5 0 1 1 810.5,552 C810.5,564 800,569 797,575 Z" fill="#4a6ee0" stroke="#1f1a3d" stroke-width="1.4"/>
<path d="M803,579 C800,573 789.5,568 789.5,556 A13.5,13.5 0 1 1 816.5,556 C816.5,568 806,573 803,579 Z" fill="#4a6ee0" stroke="#1f1a3d" stroke-width="1.4"/>
<path d="M801,583 C798,577 787.5,572 787.5,560 A13.5,13.5 0 1 1 814.5,560 C814.5,572 804,577 801,583 Z" fill="#4a6ee0" stroke="#1f1a3d" stroke-width="1.4"/>
<text x="801" y="571.5" font-size="17.5" font-weight="700" fill="#fff" text-anchor="middle" letter-spacing="-.5">9</text>
<path d="M811,620 C808,614 797.5,609 797.5,597 A13.5,13.5 0 1 1 824.5,597 C824.5,609 814,614 811,620 Z" fill="#d447cf" stroke="#1f1a3d" stroke-width="1.4"/>
<path d="M809,610 C806,604 795.5,599 795.5,587 A13.5,13.5 0 1 1 822.5,587 C822.5,599 812,604 809,610 Z" fill="#d447cf" stroke="#1f1a3d" stroke-width="1.4"/>
<text x="809" y="598.5" font-size="17.5" font-weight="700" fill="#fff" text-anchor="middle" letter-spacing="-.5">2</text>
<path d="M832,664 C829,658 818.5,653 818.5,641 A13.5,13.5 0 1 1 845.5,641 C845.5,653 835,658 832,664 Z" fill="#4a6ee0" stroke="#1f1a3d" stroke-width="1.4"/>
<path d="M830,667 C827,661 816.5,656 816.5,644 A13.5,13.5 0 1 1 843.5,644 C843.5,656 833,661 830,667 Z" fill="#4a6ee0" stroke="#1f1a3d" stroke-width="1.4"/>
<text x="830" y="655.5" font-size="17.5" font-weight="700" fill="#fff" text-anchor="middle" letter-spacing="-.5">1</text>
<path d="M787,652 C784,646 773.5,641 773.5,629 A13.5,13.5 0 1 1 800.5,629 C800.5,641 790,646 787,652 Z" fill="#4a6ee0" stroke="#1f1a3d" stroke-width="1.4"/>
<text x="787" y="640.5" font-size="17.5" font-weight="700" fill="#fff" text-anchor="middle" letter-spacing="-.5">16</text>
<path d="M801.5,671 C798.5,665 788.0,660 788.0,648 A13.5,13.5 0 1 1 815.0,648 C815.0,660 804.5,665 801.5,671 Z" fill="#4a6ee0" stroke="#1f1a3d" stroke-width="1.4"/>
<text x="801.5" y="659.5" font-size="17.5" font-weight="700" fill="#fff" text-anchor="middle" letter-spacing="-.5">14</text>
<path d="M836.6,678.5 C833.6,672.5 823.1,667.5 823.1,655.5 A13.5,13.5 0 1 1 850.1,655.5 C850.1,667.5 839.6,672.5 836.6,678.5 Z" fill="#4a6ee0" stroke="#1f1a3d" stroke-width="1.4"/>
<text x="836.6" y="667.0" font-size="17.5" font-weight="700" fill="#fff" text-anchor="middle" letter-spacing="-.5">12</text>
<path d="M821.6,683.5 C818.6,677.5 808.1,672.5 808.1,660.5 A13.5,13.5 0 1 1 835.1,660.5 C835.1,672.5 824.6,677.5 821.6,683.5 Z" fill="#4a6ee0" stroke="#1f1a3d" stroke-width="1.4"/>
<text x="821.6" y="672.0" font-size="17.5" font-weight="700" fill="#fff" text-anchor="middle" letter-spacing="-.5">13</text>
</svg>
<div class="a" style="left:1052px;top:218px;width:1px;height:586px;background:#e8e8e8"></div>
<div class="a" style="left:992px;top:645px;width:48px;height:97px;background:#fff;box-shadow:0 1px 3px rgba(0,0,0,.2);border-radius:2px"></div>
<div class="a" style="left:998px;top:693px;width:36px;height:1px;background:#e6e6e6"></div>
<svg style="left:1005px;top:659px" width="21" height="21"><path d="M10.5 0V21M0 10.5H21" stroke="#666" stroke-width="2.6"/></svg>
<svg style="left:1005px;top:716px" width="21" height="4"><path d="M0 2H21" stroke="#666" stroke-width="2.6"/></svg>
<div class="a" style="left:1013px;top:219px;width:38px;height:59px;background:#2f69ae;border-radius:3px;box-shadow:0 2px 6px rgba(0,0,0,.25)"></div>
<svg style="left:1026px;top:235px" width="16" height="28"><path d="M2 2L14 13.5L2 25Z" fill="none" stroke="#fff" stroke-width="2.4" stroke-linejoin="miter"/></svg>
<div class="a" style="left:329px;top:166px;width:33px;height:33px;border-radius:50%;background:#fff;box-shadow:0 2px 5px rgba(0,0,0,.22);z-index:8"></div>
<svg style="left:338px;top:175px;z-index:9" width="14" height="16"><path d="M10 1.5L3.5 8L10 14.5" fill="none" stroke="#777" stroke-width="1.4"/></svg>

<!-- HEADER -->
<div class="a" style="left:72px;top:72px;width:1756px;height:75px;border-bottom:1px solid #d6d6d6;box-shadow:0 2px 3px rgba(0,0,0,.10);background:#fff;z-index:5">
</div>
<div class="a" style="left:0;top:0;width:1900px;height:150px;z-index:6">
 <svg style="left:96px;top:90px" width="34" height="34" viewBox="0 0 34 34">
  <defs><linearGradient id="lg1" x1="0" y1="0" x2="1" y2="0"><stop offset="0" stop-color="#2f5be0"/><stop offset=".5" stop-color="#2236d6"/><stop offset="1" stop-color="#5a46ec"/></linearGradient></defs>
  <path d="M17 5.3 A11.7 11.7 0 1 0 17 28.7 L28.7 28.7 L28.7 17 A11.7 11.7 0 0 0 17 5.3 Z" fill="none" stroke="url(#lg1)" stroke-width="4.3"/>
  <path d="M5.6 13.5 A11.7 11.7 0 0 1 11 6.8" fill="none" stroke="#4a86f0" stroke-width="4.3" opacity=".55"/>
  <path d="M18.5 28.7 H28.7" fill="none" stroke="#5b8cf2" stroke-width="4.3" opacity=".8"/>
 </svg>
 <div class="t" style="left:134px;top:96px;font-size:30px;color:#1a1a1a"><b style="letter-spacing:-.8px">Ants</b><span style="color:#262626;letter-spacing:.6px">Route</span></div>

 <div class="t" style="left:331px;top:101px;font-size:15px;color:#333;letter-spacing:.5px">Lugar</div>
 <div class="a" style="left:383px;top:89px;width:157px;height:40px;border:1px solid #d0d0d0;border-radius:5px"></div>
 <div class="t" style="left:402px;top:101px;font-size:15px;color:#333;letter-spacing:.3px">Nancy</div>
 <svg style="left:509px;top:105px" width="12" height="8"><path d="M0 0H12L6 7Z" fill="#555"/></svg>

 <!-- nav -->
 <svg style="left:684px;top:97px" width="22" height="22" viewBox="0 0 22 22" fill="none" stroke="#222" stroke-width="2">
  <rect x="1.5" y="3" width="19" height="17.5"/><line x1="1.5" y1="7" x2="20.5" y2="7"/><line x1="6" y1="1" x2="6" y2="4"/><line x1="16" y1="1" x2="16" y2="4"/>
  <g fill="#222" stroke="none"><rect x="5" y="10" width="2" height="2"/><rect x="8.5" y="10" width="2" height="2"/><rect x="12" y="10" width="2" height="2"/><rect x="15.5" y="10" width="2" height="2"/><rect x="5" y="13.5" width="2" height="2"/><rect x="8.5" y="13.5" width="2" height="2"/><rect x="12" y="13.5" width="2" height="2"/><rect x="15.5" y="13.5" width="2" height="2"/><rect x="5" y="17" width="2" height="2"/><rect x="8.5" y="17" width="2" height="2"/><rect x="12" y="17" width="2" height="2"/></g>
 </svg>
 <div class="t" style="left:709px;top:101px;font-size:15px;color:#333;letter-spacing:.6px">Programar</div>
 <div class="a" style="left:802px;top:90px;width:119px;height:38px;background:#eef5fc;border-radius:5px"></div>
 <svg style="left:814px;top:98px" width="24" height="20" viewBox="0 0 24 20" fill="none" stroke="#4f87c9" stroke-width="2">
  <path d="M3 18.5 A10 10 0 1 1 21 18.5 Z" stroke-linejoin="round"/><line x1="12" y1="13" x2="17" y2="8.5" stroke-width="2.4"/><circle cx="12" cy="13" r="1.6" fill="#4f87c9"/>
  <g stroke-width="1.3"><line x1="12" y1="4" x2="12" y2="5.5"/><line x1="5.5" y1="7" x2="6.5" y2="8"/><line x1="18.5" y1="7" x2="17.5" y2="8"/><line x1="3.5" y1="13" x2="5" y2="13"/><line x1="19" y1="13" x2="20.5" y2="13"/></g>
 </svg>
 <div class="t" style="left:840px;top:101px;font-size:15px;color:#4f87c9;letter-spacing:.45px">Organizar</div>
 <svg style="left:940px;top:98px" width="24" height="22" viewBox="0 0 24 22" fill="none" stroke="#222" stroke-width="2">
  <path d="M1.5 2.5H17.5L21.5 6L17.5 9.5H1.5Z"/><line x1="10" y1="0" x2="10" y2="2.5"/><line x1="10" y1="13" x2="10" y2="21.5"/>
 </svg>
 <div class="t" style="left:966px;top:101px;font-size:15px;color:#333;letter-spacing:.35px">Seguir</div>
 <svg style="left:1040px;top:98px" width="24" height="22" viewBox="0 0 24 22" fill="none" stroke="#222" stroke-width="2">
  <path d="M1.5 6.5C6 3 9 8 13 5.5S18 3 21 1.5V20.5H1.5Z"/><path d="M1.5 13.5C6 10 9 14 13 11.5S18 9 21 8"/>
 </svg>
 <div class="t" style="left:1065px;top:101px;font-size:15px;color:#333;letter-spacing:.5px">Analizar</div>

 <!-- right nav -->
 <svg style="left:1274px;top:99px" width="26" height="20" viewBox="0 0 26 20" fill="none" stroke="#222" stroke-width="1.6">
  <circle cx="9" cy="3.2" r="2.2"/><circle cx="17" cy="3.2" r="2.2"/>
  <circle cx="5" cy="8.5" r="2.6"/><path d="M0.8 15.5C1.5 12 8.5 12 9.2 15.5"/>
  <circle cx="21" cy="8.5" r="2.6"/><path d="M16.8 15.5C17.5 12 24.5 12 25.2 15.5"/>
  <circle cx="13" cy="11" r="2.6"/><path d="M8.8 18.5C9.5 15 16.5 15 17.2 18.5"/>
 </svg>
 <div class="t" style="left:1302px;top:101px;font-size:15px;color:#333;letter-spacing:.3px">Clientes</div>
 <svg style="left:1388px;top:98px" width="26" height="26" viewBox="0 0 26 26" fill="none" stroke="#222" stroke-width="1.8">
  <circle cx="9.5" cy="7" r="5.5"/><path d="M1.5 20C2 15 5 12.5 9 12.5"/>
  <g transform="translate(19 19.5)"><path d="M-1.17 -3.40 L-1.01 -5.20 L1.01 -5.20 L1.17 -3.40 L2.36 -2.72 L4.00 -3.48 L5.01 -1.73 L3.53 -0.69 L3.53 0.69 L5.01 1.73 L4.00 3.48 L2.36 2.72 L1.17 3.40 L1.01 5.20 L-1.01 5.20 L-1.17 3.40 L-2.36 2.72 L-4.00 3.48 L-5.01 1.73 L-3.53 0.69 L-3.53 -0.69 L-5.01 -1.73 L-4.00 -3.48 L-2.36 -2.72Z" stroke-width="1.6"/><circle r="1.6" stroke-width="1.3"/></g>
 </svg>
 <div class="t" style="left:1413px;top:101px;font-size:15px;color:#333;letter-spacing:.1px">Recursos</div>
 <svg style="left:1505px;top:96.5px" width="25" height="25" viewBox="0 0 25 25" fill="none" stroke="#1a1a1a" stroke-width="1.9" stroke-linejoin="round">
  <path d="M9.80 4.65 L10.36 1.51 L14.64 1.51 L15.20 4.65 L17.95 6.24 L20.95 5.15 L23.09 8.85 L20.65 10.92 L20.65 14.08 L23.09 16.15 L20.95 19.85 L17.95 18.76 L15.20 20.35 L14.64 23.49 L10.36 23.49 L9.80 20.35 L7.05 18.76 L4.05 19.85 L1.91 16.15 L4.35 14.08 L4.35 10.92 L1.91 8.85 L4.05 5.15 L7.05 6.24Z"/>
  <circle cx="12.5" cy="12.5" r="3.9"/>
 </svg>
 <div class="t" style="left:1532px;top:101px;font-size:15px;color:#333;letter-spacing:.7px">Configuración</div>
 <svg style="left:1664px;top:97px" width="25" height="25" viewBox="0 0 25 25" fill="none" stroke="#222" stroke-width="2">
  <circle cx="14" cy="10" r="8.5"/><line x1="8" y1="16.5" x2="1.5" y2="23"/>
 </svg>
 <svg style="left:1718px;top:98px" width="22" height="25" viewBox="0 0 22 25" fill="none" stroke="#222" stroke-width="2">
  <path d="M4 18V10C4 5.5 7 3 11 3S18 5.5 18 10V18"/><line x1="1" y1="18.5" x2="21" y2="18.5"/><path d="M9 20.5A2 2 0 0 0 13 20.5"/><line x1="11" y1="1" x2="11" y2="3"/>
 </svg>
 <div class="a" style="left:1730px;top:82px;width:27px;height:27px;border-radius:50%;background:#2f6aad"></div>
 <div class="t" style="left:1730px;top:88px;width:27px;text-align:center;font-size:14px;font-weight:700;color:#fff">46</div>
 <div class="a" style="left:1761px;top:85px;width:48px;height:48px;border-radius:50%;background:#4a90e2;box-shadow:0 3px 8px rgba(0,0,0,.25)"></div>
 <div class="t" style="left:1761px;top:102px;width:48px;text-align:center;font-size:15px;font-weight:700;color:#fff">MH</div>
</div>

<!-- SIDEBAR -->
<div class="a" style="left:346px;top:147px;width:1px;height:660px;background:#e4e4e4"></div>
<svg style="left:93px;top:233px" width="22" height="23" viewBox="0 0 22 23" fill="none" stroke="#111" stroke-width="2">
 <rect x="1.5" y="3" width="19" height="18.5"/><line x1="1.5" y1="6.5" x2="20.5" y2="6.5"/><line x1="5.5" y1="1" x2="5.5" y2="4"/><line x1="16.5" y1="1" x2="16.5" y2="4"/><path d="M7 13.5L10 16.5L15.5 10.5"/>
</svg>
<div class="t" style="left:125px;top:236px;font-size:15px;color:#222;letter-spacing:.55px">Agenda</div>
<svg style="left:90px;top:284px" width="30" height="20" viewBox="0 0 30 20" fill="none" stroke="#111" stroke-width="2">
 <path d="M6 1.5H23.5L28 18.5H1.5Z"/><line x1="14.75" y1="4" x2="14.75" y2="7" /><line x1="14.75" y1="9" x2="14.75" y2="12"/><line x1="14.75" y1="14" x2="14.75" y2="17"/>
</svg>
<div class="t" style="left:125px;top:286px;font-size:15px;color:#222;letter-spacing:.5px">Rutas</div>
<div class="a" style="left:85px;top:325px;width:249px;height:38px;background:#eef6fd;border-radius:5px"></div>
<svg style="left:92px;top:332px" width="24" height="23" viewBox="0 0 24 23" fill="none" stroke="#4f87c9" stroke-width="2">
 <path d="M1.5 6L7 4V21L1.5 22Z"/><path d="M7 4L12 6"/><path d="M7 21L12 22L17 20L22.5 22V10"/><path d="M12 13V22"/>
 <path d="M17.5 15C15 12 13.5 10 13.5 7.5A4 4 0 0 1 21.5 7.5C21.5 10 20 12 17.5 15Z"/><circle cx="17.5" cy="7.5" r="1.3"/>
</svg>
<div class="t" style="left:125px;top:336px;font-size:15px;color:#4f87c9;letter-spacing:.6px">Mapas</div>
<svg style="left:93px;top:384px" width="24" height="21" viewBox="0 0 24 21" fill="none" stroke="#111" stroke-width="2">
 <path d="M1 2.5L3 4.5L6.5 1"/><path d="M1 9.5L3 11.5L6.5 8"/><path d="M1 16.5L3 18.5L6.5 15"/>
 <line x1="9" y1="2.5" x2="23" y2="2.5"/><line x1="9" y1="10.5" x2="23" y2="10.5"/><line x1="9" y1="18.5" x2="23" y2="18.5"/>
</svg>
<div class="t" style="left:125px;top:386px;font-size:15px;color:#222;letter-spacing:.48px">Lista de intervenciones</div>

<!-- TITLE ROW -->
<div class="t" style="left:384px;top:173px;font-size:20px;color:#c8875b;letter-spacing:.9px">Mapa de las rutas</div>
<div class="a" style="left:577px;top:162px;width:273px;height:40px;border:1px solid #dedede;border-radius:3px;background:#fff"></div>
<div class="a" style="left:634px;top:163px;width:171px;height:38px;background:#f8f8f8;border-left:1px solid #e4e4e4;border-right:1px solid #e4e4e4"></div>
<div class="a" style="left:678px;top:163px;width:1px;height:38px;background:#e8e8e8"></div>
<svg style="left:596px;top:171px" width="20" height="21" viewBox="0 0 20 21" fill="none" stroke="#222" stroke-width="1.8">
 <rect x="1" y="3" width="18" height="17"/><line x1="1" y1="6.5" x2="19" y2="6.5"/><line x1="5" y1="1" x2="5" y2="4"/><line x1="15" y1="1" x2="15" y2="4"/>
 <g fill="#222" stroke="none"><rect x="4" y="9" width="2" height="2"/><rect x="7.5" y="9" width="2" height="2"/><rect x="11" y="9" width="2" height="2"/><rect x="14.5" y="9" width="2" height="2"/><rect x="4" y="12.5" width="2" height="2"/><rect x="7.5" y="12.5" width="2" height="2"/><rect x="11" y="12.5" width="2" height="2"/><rect x="14.5" y="12.5" width="2" height="2"/><rect x="4" y="16" width="2" height="2"/><rect x="7.5" y="16" width="2" height="2"/><rect x="11" y="16" width="2" height="2"/></g>
</svg>
<svg style="left:651px;top:176px" width="8" height="12"><path d="M6.5 1L1.5 6L6.5 11" fill="none" stroke="#999" stroke-width="1.5"/></svg>
<div class="t" style="left:708px;top:175px;font-size:15px;color:#333">7/10/2025</div>
<svg style="left:823px;top:176px" width="8" height="12"><path d="M1.5 1L6.5 6L1.5 11" fill="none" stroke="#333" stroke-width="1.5"/></svg>

<!-- action buttons -->
<div class="a" style="left:1412px;top:163px;width:191px;height:38px;background:#2f6ab3;border-radius:3px"></div>
<svg style="left:1426px;top:172px" width="22" height="22" viewBox="0 0 22 22" fill="none" stroke="#fff" stroke-width="1.6" stroke-linejoin="round">
 <path d="M20.5 1.5C15 2 11 5 7.5 10.5L11.5 14.5C17 11 20 7 20.5 1.5Z"/><circle cx="15" cy="7" r="1.6"/>
 <path d="M7.5 10.5L4 10.5L2 13L6 13.5"/><path d="M11.5 14.5L11.5 18L9 20L8.5 16"/><path d="M5.5 14L2 20L8 16.5"/>
</svg>
<div class="t" style="left:1462px;top:175px;font-size:15px;font-weight:700;color:#fff;letter-spacing:.1px">Reoptimizar rutas</div>
<div class="a" style="left:1609px;top:163px;width:39px;height:39px;border-radius:50%;background:#2f6ab3"></div>
<svg style="left:1618px;top:172px" width="21" height="21"><path d="M10.5 1V20M1 10.5H20" stroke="#fff" stroke-width="1.8"/></svg>
<div class="a" style="left:1656px;top:163px;width:39px;height:39px;border-radius:50%;background:#62b05a"></div>
<svg style="left:1663px;top:171px" width="26" height="22" viewBox="0 0 26 22" fill="none" stroke="#fff" stroke-width="1.5">
 <path d="M8 15H6.5A4.5 4.5 0 0 1 6 6.2 6.5 6.5 0 0 1 18.5 5 4.8 4.8 0 0 1 19.5 15H18"/><path d="M13 9V20M10 17L13 20L16 17"/>
</svg>
<div class="a" style="left:1704px;top:163px;width:39px;height:39px;border-radius:50%;background:#62b05a"></div>
<svg style="left:1714px;top:171px" width="19" height="23" viewBox="0 0 19 23" fill="none" stroke="#fff" stroke-width="1.7">
 <rect x="2" y="10" width="15" height="11"/><path d="M5 10V6A4.5 4.5 0 0 1 14 6V10"/>
</svg>
<div class="a" style="left:1748px;top:163px;width:39px;height:39px;border-radius:50%;background:#2f6ab3"></div>
<svg style="left:1757px;top:174px" width="21" height="16" viewBox="0 0 21 16" fill="none" stroke="#fff" stroke-width="1.7">
 <rect x="1" y="1.5" width="19" height="13"/><path d="M1 2L10.5 9.5L20 2"/>
</svg>

<div class="a" style="left:346px;top:217px;width:1482px;height:1px;background:#e6e6e6"></div>

<!-- RIGHT PANEL -->
<div class="a" style="left:1065px;top:228px;width:166px;height:38px;background:#efefef;border-radius:4px"></div>
<div class="t" style="left:1077px;top:239px;font-size:15px;color:#555;letter-spacing:.45px">Filtrar la pantalla</div>
<svg style="left:1207px;top:243px" width="13" height="8"><path d="M1 1L6.5 6.5L12 1" fill="none" stroke="#666" stroke-width="1.4"/></svg>
<div class="a" style="left:1062px;top:276px;width:757px;height:72px;background:#2f69ae"></div>
<div class="a" style="left:1094px;top:301px;width:22px;height:22px;border-radius:3px;background:#4a90e2"></div>
<svg style="left:1094px;top:301px" width="22" height="22"><path d="M5 11.5L9 15.5L17 7" fill="none" stroke="#fff" stroke-width="2.4"/></svg>
<div class="t" style="left:1133px;top:304px;font-size:14.5px;font-weight:700;color:#fff;letter-spacing:-.1px">Técnicos fuera de sector</div>
<svg style="left:1777px;top:302px" width="15" height="11"><path d="M1.5 9L7.5 3L13.5 9" fill="none" stroke="#fff" stroke-width="2.4"/></svg>
<div class="a" style="left:1064px;top:357.5px;width:753px;height:96px;border:1px solid #e2e2e2;background:#fff"></div>
<div class="a" style="left:1065px;top:358.5px;width:751px;height:44.5px;background:#efefef"></div>
<div class="a" style="left:1075px;top:369.0px;width:22px;height:22px;border-radius:3px;background:#4a90e2"></div>
<svg style="left:1075px;top:369.0px" width="22" height="22"><path d="M5 11.5L9 15.5L17 7" fill="none" stroke="#fff" stroke-width="2.4"/></svg>
<div class="a" style="left:1108px;top:368.0px;width:24px;height:24px;border-radius:50%;background:#d94bd1;border:1.5px solid #222"></div>
<div class="t" style="left:1141px;top:373.5px;font-size:15px;color:#222;letter-spacing:.3px">Alexandre Sanchez | v4</div>
<div class="a" style="left:1638px;top:368.5px;width:92px;height:23px;background:#f6f0dc;border-radius:2px"></div>
<div class="t" style="left:1638px;top:375.0px;width:92px;text-align:center;font-size:12px;font-weight:700;color:#f0c54c;letter-spacing:.2px">NO INICIADA</div>
<div class="a" style="left:1770px;top:378.0px;width:3.2px;height:3.2px;border-radius:50%;background:#111"></div>
<div class="a" style="left:1777px;top:378.0px;width:3.2px;height:3.2px;border-radius:50%;background:#111"></div>
<div class="a" style="left:1784px;top:378.0px;width:3.2px;height:3.2px;border-radius:50%;background:#111"></div>
<svg style="left:1094.7px;top:418.0px" width="18" height="19" viewBox="0 0 18 19" fill="none" stroke="#666" stroke-width="1.5"><path d="M1.5 18.5V1.5H10V4.5H16.5V12H10V9.5H1.5"/><line x1="10" y1="4.5" x2="10" y2="9.5"/></svg>
<div class="t" style="left:1115.7px;top:422.5px;font-size:12.5px;color:#6a6a6a;letter-spacing:.2px">8:00</div>
<svg style="left:1198.2px;top:418.0px" width="18" height="19" viewBox="0 0 18 19"><path d="M1.5 18.5V1" stroke="#666" stroke-width="1.6"/><rect x="2.3" y="1.2" width="14.5" height="10" fill="#fff" stroke="#555" stroke-width="1.4"/><g fill="#555"><rect x="3" y="2" width="2.2" height="2"/><rect x="7.4" y="2" width="2.2" height="2"/><rect x="11.8" y="2" width="2.2" height="2"/><rect x="5.2" y="4" width="2.2" height="2"/><rect x="9.6" y="4" width="2.2" height="2"/><rect x="14" y="4" width="2.2" height="2"/><rect x="3" y="6" width="2.2" height="2"/><rect x="7.4" y="6" width="2.2" height="2"/><rect x="11.8" y="6" width="2.2" height="2"/><rect x="5.2" y="8" width="2.2" height="2"/><rect x="9.6" y="8" width="2.2" height="2"/><rect x="14" y="8" width="2.2" height="2"/></g></svg>
<div class="t" style="left:1220.2px;top:422.5px;font-size:12.5px;color:#6a6a6a;letter-spacing:.2px">10:32</div>
<svg style="left:1295.5px;top:419.5px" width="24" height="16" viewBox="0 0 24 16" fill="none" stroke="#666" stroke-width="1.5"><path d="M4.5 1H19L22.8 15H1.2Z"/><path d="M12 3V5.5M12 7.5V10M12 12V14.5"/></svg>
<div class="t" style="left:1324.5px;top:422.5px;font-size:12.5px;color:#6a6a6a;letter-spacing:.2px">5,93 km</div>
<svg style="left:1424.9px;top:418.0px" width="14" height="19" viewBox="0 0 14 19" fill="none" stroke="#666" stroke-width="1.5"><path d="M7 18C3 12.5 1 9.5 1 6.5A6 6 0 0 1 13 6.5C13 9.5 11 12.5 7 18Z"/><circle cx="7" cy="6.3" r="1" fill="#666"/></svg>
<div class="t" style="left:1448.9px;top:422.5px;font-size:12.5px;color:#6a6a6a;letter-spacing:.2px">6</div>
<svg style="left:1516.5px;top:419.5px" width="20" height="16" viewBox="0 0 20 16" fill="none" stroke="#666" stroke-width="1.5"><path d="M3 6L4.5 1.5H15.5L17 6"/><rect x="1.5" y="6" width="17" height="7" rx="1"/><path d="M3.5 13V15M16.5 13V15"/><path d="M7 10.5H13"/><circle cx="4.5" cy="9" r=".8" fill="#666"/><circle cx="15.5" cy="9" r=".8" fill="#666"/><path d="M0 6.5H2M18 6.5H20"/></svg>
<div class="t" style="left:1544.5px;top:422.5px;font-size:12.5px;color:#6a6a6a;letter-spacing:.2px">12min</div>
<svg style="left:1628.8px;top:419.0px" width="16" height="17" viewBox="0 0 16 17" fill="none" stroke="#666" stroke-width="1.5"><circle cx="8" cy="6" r="4.8"/><path d="M1 16.5C1.5 12.5 4 10.5 5.5 10.2M15 16.5C14.5 12.5 12 10.5 10.5 10.2"/></svg>
<div class="t" style="left:1653.8px;top:422.5px;font-size:12.5px;color:#6a6a6a;letter-spacing:.2px">2h20</div>
<svg style="left:1731.7px;top:417.5px" width="20" height="20" viewBox="0 0 20 20" fill="none" stroke="#666" stroke-width="1.5"><circle cx="10" cy="10" r="8.8"/><path d="M10 4.5V14.5M6 10.5L10 14.5L14 10.5"/></svg>
<div class="t" style="left:1758.7px;top:422.5px;font-size:12.5px;color:#6a6a6a;letter-spacing:.2px">5,34 €</div>
<div class="a" style="left:1064px;top:464px;width:753px;height:96px;border:1px solid #e2e2e2;background:#fff"></div>
<div class="a" style="left:1065px;top:465px;width:751px;height:44.5px;background:#efefef"></div>
<div class="a" style="left:1075px;top:475.5px;width:22px;height:22px;border-radius:3px;background:#4a90e2"></div>
<svg style="left:1075px;top:475.5px" width="22" height="22"><path d="M5 11.5L9 15.5L17 7" fill="none" stroke="#fff" stroke-width="2.4"/></svg>
<div class="a" style="left:1108px;top:474.5px;width:24px;height:24px;border-radius:50%;background:#a37de6;border:1.5px solid #222"></div>
<div class="t" style="left:1141px;top:480px;font-size:15px;color:#222;letter-spacing:.3px">Julia Virmond | v1</div>
<div class="a" style="left:1638px;top:475px;width:92px;height:23px;background:#f6f0dc;border-radius:2px"></div>
<div class="t" style="left:1638px;top:481.5px;width:92px;text-align:center;font-size:12px;font-weight:700;color:#f0c54c;letter-spacing:.2px">NO INICIADA</div>
<div class="a" style="left:1770px;top:484.5px;width:3.2px;height:3.2px;border-radius:50%;background:#111"></div>
<div class="a" style="left:1777px;top:484.5px;width:3.2px;height:3.2px;border-radius:50%;background:#111"></div>
<div class="a" style="left:1784px;top:484.5px;width:3.2px;height:3.2px;border-radius:50%;background:#111"></div>
<svg style="left:1094.7px;top:524.5px" width="18" height="19" viewBox="0 0 18 19" fill="none" stroke="#666" stroke-width="1.5"><path d="M1.5 18.5V1.5H10V4.5H16.5V12H10V9.5H1.5"/><line x1="10" y1="4.5" x2="10" y2="9.5"/></svg>
<div class="t" style="left:1115.7px;top:529px;font-size:12.5px;color:#6a6a6a;letter-spacing:.2px">8:00</div>
<svg style="left:1198.2px;top:524.5px" width="18" height="19" viewBox="0 0 18 19"><path d="M1.5 18.5V1" stroke="#666" stroke-width="1.6"/><rect x="2.3" y="1.2" width="14.5" height="10" fill="#fff" stroke="#555" stroke-width="1.4"/><g fill="#555"><rect x="3" y="2" width="2.2" height="2"/><rect x="7.4" y="2" width="2.2" height="2"/><rect x="11.8" y="2" width="2.2" height="2"/><rect x="5.2" y="4" width="2.2" height="2"/><rect x="9.6" y="4" width="2.2" height="2"/><rect x="14" y="4" width="2.2" height="2"/><rect x="3" y="6" width="2.2" height="2"/><rect x="7.4" y="6" width="2.2" height="2"/><rect x="11.8" y="6" width="2.2" height="2"/><rect x="5.2" y="8" width="2.2" height="2"/><rect x="9.6" y="8" width="2.2" height="2"/><rect x="14" y="8" width="2.2" height="2"/></g></svg>
<div class="t" style="left:1220.2px;top:529px;font-size:12.5px;color:#6a6a6a;letter-spacing:.2px">16:58</div>
<svg style="left:1295.5px;top:526.0px" width="24" height="16" viewBox="0 0 24 16" fill="none" stroke="#666" stroke-width="1.5"><path d="M4.5 1H19L22.8 15H1.2Z"/><path d="M12 3V5.5M12 7.5V10M12 12V14.5"/></svg>
<div class="t" style="left:1324.5px;top:529px;font-size:12.5px;color:#6a6a6a;letter-spacing:.2px">8,71 km</div>
<svg style="left:1421.3px;top:524.5px" width="14" height="19" viewBox="0 0 14 19" fill="none" stroke="#666" stroke-width="1.5"><path d="M7 18C3 12.5 1 9.5 1 6.5A6 6 0 0 1 13 6.5C13 9.5 11 12.5 7 18Z"/><circle cx="7" cy="6.3" r="1" fill="#666"/></svg>
<div class="t" style="left:1445.3px;top:529px;font-size:12.5px;color:#6a6a6a;letter-spacing:.2px">25</div>
<svg style="left:1516.5px;top:526.0px" width="20" height="16" viewBox="0 0 20 16" fill="none" stroke="#666" stroke-width="1.5"><path d="M3 6L4.5 1.5H15.5L17 6"/><rect x="1.5" y="6" width="17" height="7" rx="1"/><path d="M3.5 13V15M16.5 13V15"/><path d="M7 10.5H13"/><circle cx="4.5" cy="9" r=".8" fill="#666"/><circle cx="15.5" cy="9" r=".8" fill="#666"/><path d="M0 6.5H2M18 6.5H20"/></svg>
<div class="t" style="left:1544.5px;top:529px;font-size:12.5px;color:#6a6a6a;letter-spacing:.2px">18min</div>
<svg style="left:1628.8px;top:525.5px" width="16" height="17" viewBox="0 0 16 17" fill="none" stroke="#666" stroke-width="1.5"><circle cx="8" cy="6" r="4.8"/><path d="M1 16.5C1.5 12.5 4 10.5 5.5 10.2M15 16.5C14.5 12.5 12 10.5 10.5 10.2"/></svg>
<div class="t" style="left:1653.8px;top:529px;font-size:12.5px;color:#6a6a6a;letter-spacing:.2px">8h20</div>
<svg style="left:1724.6px;top:524.0px" width="20" height="20" viewBox="0 0 20 20" fill="none" stroke="#666" stroke-width="1.5"><circle cx="10" cy="10" r="8.8"/><path d="M10 4.5V14.5M6 10.5L10 14.5L14 10.5"/></svg>
<div class="t" style="left:1751.6px;top:529px;font-size:12.5px;color:#6a6a6a;letter-spacing:.2px">569,01 €</div>
<div class="a" style="left:1064px;top:570.5px;width:753px;height:96px;border:1px solid #e2e2e2;background:#fff"></div>
<div class="a" style="left:1065px;top:571.5px;width:751px;height:44.5px;background:#efefef"></div>
<div class="a" style="left:1075px;top:582.0px;width:22px;height:22px;border-radius:3px;background:#4a90e2"></div>
<svg style="left:1075px;top:582.0px" width="22" height="22"><path d="M5 11.5L9 15.5L17 7" fill="none" stroke="#fff" stroke-width="2.4"/></svg>
<div class="a" style="left:1108px;top:581.0px;width:24px;height:24px;border-radius:50%;background:#4db38a;border:1.5px solid #222"></div>
<div class="t" style="left:1141px;top:586.5px;font-size:15px;color:#222;letter-spacing:.3px">Pauline Henry | v5</div>
<div class="a" style="left:1638px;top:581.5px;width:92px;height:23px;background:#f6f0dc;border-radius:2px"></div>
<div class="t" style="left:1638px;top:588.0px;width:92px;text-align:center;font-size:12px;font-weight:700;color:#f0c54c;letter-spacing:.2px">NO INICIADA</div>
<div class="a" style="left:1770px;top:591.0px;width:3.2px;height:3.2px;border-radius:50%;background:#111"></div>
<div class="a" style="left:1777px;top:591.0px;width:3.2px;height:3.2px;border-radius:50%;background:#111"></div>
<div class="a" style="left:1784px;top:591.0px;width:3.2px;height:3.2px;border-radius:50%;background:#111"></div>
<svg style="left:1094.7px;top:631.0px" width="18" height="19" viewBox="0 0 18 19" fill="none" stroke="#666" stroke-width="1.5"><path d="M1.5 18.5V1.5H10V4.5H16.5V12H10V9.5H1.5"/><line x1="10" y1="4.5" x2="10" y2="9.5"/></svg>
<div class="t" style="left:1115.7px;top:635.5px;font-size:12.5px;color:#6a6a6a;letter-spacing:.2px">8:00</div>
<svg style="left:1198.2px;top:631.0px" width="18" height="19" viewBox="0 0 18 19"><path d="M1.5 18.5V1" stroke="#666" stroke-width="1.6"/><rect x="2.3" y="1.2" width="14.5" height="10" fill="#fff" stroke="#555" stroke-width="1.4"/><g fill="#555"><rect x="3" y="2" width="2.2" height="2"/><rect x="7.4" y="2" width="2.2" height="2"/><rect x="11.8" y="2" width="2.2" height="2"/><rect x="5.2" y="4" width="2.2" height="2"/><rect x="9.6" y="4" width="2.2" height="2"/><rect x="14" y="4" width="2.2" height="2"/><rect x="3" y="6" width="2.2" height="2"/><rect x="7.4" y="6" width="2.2" height="2"/><rect x="11.8" y="6" width="2.2" height="2"/><rect x="5.2" y="8" width="2.2" height="2"/><rect x="9.6" y="8" width="2.2" height="2"/><rect x="14" y="8" width="2.2" height="2"/></g></svg>
<div class="t" style="left:1220.2px;top:635.5px;font-size:12.5px;color:#6a6a6a;letter-spacing:.2px">16:52</div>
<svg style="left:1299.1px;top:632.5px" width="24" height="16" viewBox="0 0 24 16" fill="none" stroke="#666" stroke-width="1.5"><path d="M4.5 1H19L22.8 15H1.2Z"/><path d="M12 3V5.5M12 7.5V10M12 12V14.5"/></svg>
<div class="t" style="left:1328.1px;top:635.5px;font-size:12.5px;color:#6a6a6a;letter-spacing:.2px">5,9 km</div>
<svg style="left:1421.3px;top:631.0px" width="14" height="19" viewBox="0 0 14 19" fill="none" stroke="#666" stroke-width="1.5"><path d="M7 18C3 12.5 1 9.5 1 6.5A6 6 0 0 1 13 6.5C13 9.5 11 12.5 7 18Z"/><circle cx="7" cy="6.3" r="1" fill="#666"/></svg>
<div class="t" style="left:1445.3px;top:635.5px;font-size:12.5px;color:#6a6a6a;letter-spacing:.2px">26</div>
<svg style="left:1516.5px;top:632.5px" width="20" height="16" viewBox="0 0 20 16" fill="none" stroke="#666" stroke-width="1.5"><path d="M3 6L4.5 1.5H15.5L17 6"/><rect x="1.5" y="6" width="17" height="7" rx="1"/><path d="M3.5 13V15M16.5 13V15"/><path d="M7 10.5H13"/><circle cx="4.5" cy="9" r=".8" fill="#666"/><circle cx="15.5" cy="9" r=".8" fill="#666"/><path d="M0 6.5H2M18 6.5H20"/></svg>
<div class="t" style="left:1544.5px;top:635.5px;font-size:12.5px;color:#6a6a6a;letter-spacing:.2px">12min</div>
<svg style="left:1628.8px;top:632.0px" width="16" height="17" viewBox="0 0 16 17" fill="none" stroke="#666" stroke-width="1.5"><circle cx="8" cy="6" r="4.8"/><path d="M1 16.5C1.5 12.5 4 10.5 5.5 10.2M15 16.5C14.5 12.5 12 10.5 10.5 10.2"/></svg>
<div class="t" style="left:1653.8px;top:635.5px;font-size:12.5px;color:#6a6a6a;letter-spacing:.2px">8h40</div>
<svg style="left:1731.7px;top:630.5px" width="20" height="20" viewBox="0 0 20 20" fill="none" stroke="#666" stroke-width="1.5"><circle cx="10" cy="10" r="8.8"/><path d="M10 4.5V14.5M6 10.5L10 14.5L14 10.5"/></svg>
<div class="t" style="left:1758.7px;top:635.5px;font-size:12.5px;color:#6a6a6a;letter-spacing:.2px">5,31 €</div>
<div class="a" style="left:1064px;top:677px;width:753px;height:96px;border:1px solid #e2e2e2;background:#fff"></div>
<div class="a" style="left:1065px;top:678px;width:751px;height:44.5px;background:#efefef"></div>
<div class="a" style="left:1075px;top:688.5px;width:22px;height:22px;border-radius:3px;background:#4a90e2"></div>
<svg style="left:1075px;top:688.5px" width="22" height="22"><path d="M5 11.5L9 15.5L17 7" fill="none" stroke="#fff" stroke-width="2.4"/></svg>
<div class="a" style="left:1108px;top:687.5px;width:24px;height:24px;border-radius:50%;background:#4a6fe0;border:1.5px solid #222"></div>
<div class="t" style="left:1141px;top:693px;font-size:15px;color:#222;letter-spacing:.3px">Pierre Dupont | v2</div>
<div class="a" style="left:1638px;top:688px;width:92px;height:23px;background:#f6f0dc;border-radius:2px"></div>
<div class="t" style="left:1638px;top:694.5px;width:92px;text-align:center;font-size:12px;font-weight:700;color:#f0c54c;letter-spacing:.2px">NO INICIADA</div>
<div class="a" style="left:1770px;top:697.5px;width:3.2px;height:3.2px;border-radius:50%;background:#111"></div>
<div class="a" style="left:1777px;top:697.5px;width:3.2px;height:3.2px;border-radius:50%;background:#111"></div>
<div class="a" style="left:1784px;top:697.5px;width:3.2px;height:3.2px;border-radius:50%;background:#111"></div>
<svg style="left:1094.7px;top:737.5px" width="18" height="19" viewBox="0 0 18 19" fill="none" stroke="#666" stroke-width="1.5"><path d="M1.5 18.5V1.5H10V4.5H16.5V12H10V9.5H1.5"/><line x1="10" y1="4.5" x2="10" y2="9.5"/></svg>
<div class="t" style="left:1115.7px;top:742px;font-size:12.5px;color:#6a6a6a;letter-spacing:.2px">8:00</div>
<svg style="left:1198.2px;top:737.5px" width="18" height="19" viewBox="0 0 18 19"><path d="M1.5 18.5V1" stroke="#666" stroke-width="1.6"/><rect x="2.3" y="1.2" width="14.5" height="10" fill="#fff" stroke="#555" stroke-width="1.4"/><g fill="#555"><rect x="3" y="2" width="2.2" height="2"/><rect x="7.4" y="2" width="2.2" height="2"/><rect x="11.8" y="2" width="2.2" height="2"/><rect x="5.2" y="4" width="2.2" height="2"/><rect x="9.6" y="4" width="2.2" height="2"/><rect x="14" y="4" width="2.2" height="2"/><rect x="3" y="6" width="2.2" height="2"/><rect x="7.4" y="6" width="2.2" height="2"/><rect x="11.8" y="6" width="2.2" height="2"/><rect x="5.2" y="8" width="2.2" height="2"/><rect x="9.6" y="8" width="2.2" height="2"/><rect x="14" y="8" width="2.2" height="2"/></g></svg>
<div class="t" style="left:1220.2px;top:742px;font-size:12.5px;color:#6a6a6a;letter-spacing:.2px">17:00</div>
<svg style="left:1295.5px;top:739.0px" width="24" height="16" viewBox="0 0 24 16" fill="none" stroke="#666" stroke-width="1.5"><path d="M4.5 1H19L22.8 15H1.2Z"/><path d="M12 3V5.5M12 7.5V10M12 12V14.5"/></svg>
<div class="t" style="left:1324.5px;top:742px;font-size:12.5px;color:#6a6a6a;letter-spacing:.2px">9,75 km</div>
<svg style="left:1421.3px;top:737.5px" width="14" height="19" viewBox="0 0 14 19" fill="none" stroke="#666" stroke-width="1.5"><path d="M7 18C3 12.5 1 9.5 1 6.5A6 6 0 0 1 13 6.5C13 9.5 11 12.5 7 18Z"/><circle cx="7" cy="6.3" r="1" fill="#666"/></svg>
<div class="t" style="left:1445.3px;top:742px;font-size:12.5px;color:#6a6a6a;letter-spacing:.2px">26</div>
<svg style="left:1516.5px;top:739.0px" width="20" height="16" viewBox="0 0 20 16" fill="none" stroke="#666" stroke-width="1.5"><path d="M3 6L4.5 1.5H15.5L17 6"/><rect x="1.5" y="6" width="17" height="7" rx="1"/><path d="M3.5 13V15M16.5 13V15"/><path d="M7 10.5H13"/><circle cx="4.5" cy="9" r=".8" fill="#666"/><circle cx="15.5" cy="9" r=".8" fill="#666"/><path d="M0 6.5H2M18 6.5H20"/></svg>
<div class="t" style="left:1544.5px;top:742px;font-size:12.5px;color:#6a6a6a;letter-spacing:.2px">20min</div>
<svg style="left:1628.8px;top:738.5px" width="16" height="17" viewBox="0 0 16 17" fill="none" stroke="#666" stroke-width="1.5"><circle cx="8" cy="6" r="4.8"/><path d="M1 16.5C1.5 12.5 4 10.5 5.5 10.2M15 16.5C14.5 12.5 12 10.5 10.5 10.2"/></svg>
<div class="t" style="left:1653.8px;top:742px;font-size:12.5px;color:#6a6a6a;letter-spacing:.2px">8h40</div>
<svg style="left:1728.2px;top:737.0px" width="20" height="20" viewBox="0 0 20 20" fill="none" stroke="#666" stroke-width="1.5"><circle cx="10" cy="10" r="8.8"/><path d="M10 4.5V14.5M6 10.5L10 14.5L14 10.5"/></svg>
<div class="t" style="left:1755.2px;top:742px;font-size:12.5px;color:#6a6a6a;letter-spacing:.2px">23,40 €</div>

</div></div>
</body></html>
